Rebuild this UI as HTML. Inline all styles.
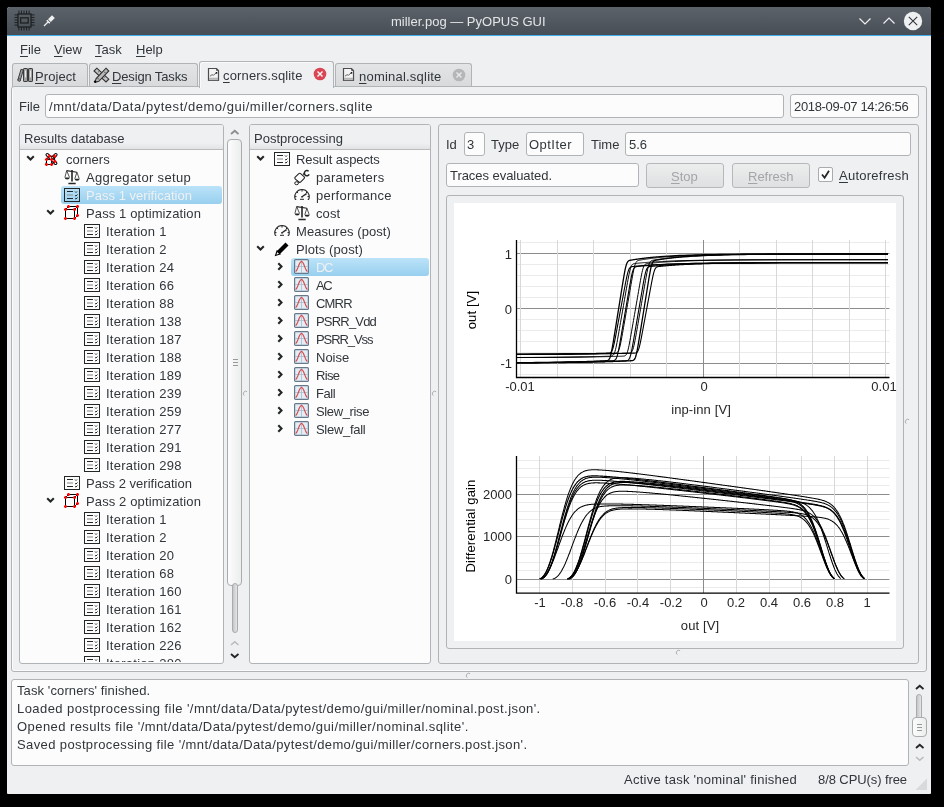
<!DOCTYPE html>
<html><head><meta charset="utf-8"><style>
html,body{margin:0;padding:0;}
body{width:944px;height:807px;background:#000;position:relative;overflow:hidden;font-family:"Liberation Sans", sans-serif;}
.t{position:absolute;white-space:pre;font-family:"Liberation Sans", sans-serif;will-change:transform;}
u{text-decoration:underline;text-underline-offset:2px;}
</style></head><body>
<div style="position:absolute;left:7px;top:7px;width:924px;height:787px;box-sizing:border-box;background:#eff0f1;border-radius:3px 3px 1px 1px;"></div>
<div style="position:absolute;left:7px;top:7px;width:924px;height:28px;box-sizing:border-box;background:linear-gradient(#5b626a,#474e55);border-radius:3px 3px 0 0;"></div>
<div style="position:absolute;left:7px;top:35px;width:924px;height:1px;box-sizing:border-box;background:#3daee9;"></div>
<div class="t" style="left:391.4px;top:14.99px;font-size:13px;line-height:13px;color:#e3e5e7;">miller.pog — PyOPUS GUI</div>
<div class="t" style="left:20px;top:42.99px;font-size:13px;line-height:13px;color:#31363b;"><u>F</u>ile</div>
<div class="t" style="left:54px;top:42.99px;font-size:13px;line-height:13px;color:#31363b;"><u>V</u>iew</div>
<div class="t" style="left:95px;top:42.99px;font-size:13px;line-height:13px;color:#31363b;"><u>T</u>ask</div>
<div class="t" style="left:136px;top:42.99px;font-size:13px;line-height:13px;color:#31363b;"><u>H</u>elp</div>
<div style="position:absolute;left:12px;top:63px;width:76px;height:24px;box-sizing:border-box;background:linear-gradient(#e3e5e7,#d7d9db);border:1px solid #b1b4b7;border-bottom:none;border-radius:3px 3px 0 0;"></div>
<div style="position:absolute;left:89px;top:63px;width:109px;height:24px;box-sizing:border-box;background:linear-gradient(#e3e5e7,#d7d9db);border:1px solid #b1b4b7;border-bottom:none;border-radius:3px 3px 0 0;"></div>
<div style="position:absolute;left:335px;top:63px;width:137px;height:24px;box-sizing:border-box;background:linear-gradient(#e3e5e7,#d7d9db);border:1px solid #b1b4b7;border-bottom:none;border-radius:3px 3px 0 0;"></div>
<div style="position:absolute;left:11px;top:86px;width:916px;height:586px;box-sizing:border-box;background:#eff0f1;border:1px solid #b1b4b7;border-radius:3px;box-shadow:inset 1px -1px 0 #fbfbfb;"></div>
<div style="position:absolute;left:199px;top:61px;width:135px;height:27px;box-sizing:border-box;background:#eff0f1;border:1px solid #b1b4b7;border-bottom:none;border-radius:3px 3px 0 0;box-shadow:inset 1px 1px 0 #fafafa;"></div>
<div class="t" style="left:35.2px;top:69.99px;font-size:13px;line-height:13px;color:#31363b;letter-spacing:0.077px;"><u>P</u>roject</div>
<div class="t" style="left:112.2px;top:69.99px;font-size:13px;line-height:13px;color:#31363b;letter-spacing:-0.139px;"><u>D</u>esign Tasks</div>
<div class="t" style="left:223.2px;top:68.99px;font-size:13px;line-height:13px;color:#31363b;letter-spacing:0.157px;"><u>c</u>orners.sqlite</div>
<div class="t" style="left:358.5px;top:69.99px;font-size:13px;line-height:13px;color:#31363b;letter-spacing:0.216px;"><u>n</u>ominal.sqlite</div>
<div class="t" style="left:19px;top:99.99px;font-size:13px;line-height:13px;color:#31363b;">File</div>
<div style="position:absolute;left:45px;top:94px;width:739px;height:24px;box-sizing:border-box;background:#fcfcfc;border:1px solid #b1b4b7;border-radius:3px;"></div>
<div class="t" style="left:49px;top:99.99px;font-size:13px;line-height:13px;color:#31363b;letter-spacing:0.534px;">/mnt/data/Data/pytest/demo/gui/miller/corners.sqlite</div>
<div style="position:absolute;left:790px;top:94px;width:129px;height:24px;box-sizing:border-box;background:#fcfcfc;border:1px solid #b1b4b7;border-radius:3px;"></div>
<div class="t" style="left:794.3px;top:99.99px;font-size:13px;line-height:13px;color:#31363b;letter-spacing:-0.332px;">2018-09-07 14:26:56</div>
<div style="position:absolute;left:19px;top:124px;width:205px;height:540px;box-sizing:border-box;background:#fcfcfc;border:1px solid #b1b4b7;border-radius:3px;"></div>
<div style="position:absolute;left:20px;top:125px;width:203px;height:25px;box-sizing:border-box;background:linear-gradient(#eff0f1,#eff0f1 75%,#e1e3e5);border-bottom:1px solid #b9bbbd;border-radius:2px 2px 0 0;"></div>
<div class="t" style="left:23.8px;top:132.29px;font-size:13px;line-height:13px;color:#31363b;">Results database</div>
<div style="position:absolute;left:249px;top:124px;width:182px;height:540px;box-sizing:border-box;background:#fcfcfc;border:1px solid #b1b4b7;border-radius:3px;"></div>
<div style="position:absolute;left:250px;top:125px;width:180px;height:25px;box-sizing:border-box;background:linear-gradient(#eff0f1,#eff0f1 75%,#e1e3e5);border-bottom:1px solid #b9bbbd;border-radius:2px 2px 0 0;"></div>
<div class="t" style="left:253.8px;top:132.29px;font-size:13px;line-height:13px;color:#31363b;">Postprocessing</div>
<div style="position:absolute;left:438px;top:124px;width:481px;height:540px;box-sizing:border-box;background:#eff0f1;border:1px solid #b1b4b7;border-radius:3px;"></div>
<div style="position:absolute;left:21px;top:150px;width:202px;height:512px;overflow:hidden">
<svg style="position:absolute;left:4.5px;top:4.800000000000011px" width="9" height="6" viewBox="0 0 9 6"><path d="M1.2 1.3l3.3 3.2L7.8 1.3" fill="none" stroke="#232627" stroke-width="2.1"/></svg>
<svg style="position:absolute;left:21px;top:0px" width="17" height="17" viewBox="0 0 17 17"><path d="M5.3 4.8L13.6 13.2M13.8 4.8L5.3 13.2" stroke="#000" stroke-width="3.6" stroke-linecap="round"/><path d="M5.3 4.8L13.6 13.2M13.8 4.8L5.3 13.2" stroke="#fff" stroke-width="1.6" stroke-linecap="round"/><path d="M4.5 9.4h5.1v5.1h-5.1z" fill="#fff" stroke="#000" stroke-width="1"/><path d="M4.5 9.4L7.4 6.2H12.6V11.4L9.6 14.5M9.6 9.4L12.6 6.2" fill="none" stroke="#000" stroke-width="1"/><path d="M2.9 9.4h3.2M4.5 7.800000000000001v3.2" stroke="#ff0000" stroke-width="1.5"/><path d="M8.0 9.4h3.2M9.6 7.800000000000001v3.2" stroke="#ff0000" stroke-width="1.5"/><path d="M2.9 14.5h3.2M4.5 12.9v3.2" stroke="#ff0000" stroke-width="1.5"/><path d="M8.0 14.5h3.2M9.6 12.9v3.2" stroke="#ff0000" stroke-width="1.5"/><path d="M5.800000000000001 6.2h3.2M7.4 4.6v3.2" stroke="#ff0000" stroke-width="1.5"/><path d="M11.0 6.2h3.2M12.6 4.6v3.2" stroke="#ff0000" stroke-width="1.5"/><path d="M11.1 11.4h3.2M12.7 9.8v3.2" stroke="#ff0000" stroke-width="1.5"/></svg>
<div class="t" style="left:45px;top:2.99px;font-size:13px;line-height:13px;color:#31363b;letter-spacing:0.065px;">corners</div>
<svg style="position:absolute;left:43px;top:19px" width="17" height="16" viewBox="0 0 17 16"><path d="M8 1v11.5M4.4 14.5h7.3" stroke="#232627" stroke-width="1.6" fill="none"/><path d="M2.7 1.6L12.9 3.2" stroke="#232627" stroke-width="1.1" fill="none"/><path d="M2.7 1.6L0.9 8.4M2.7 1.6L5.5 8.4M12.9 3.2L10.8 9.7M12.9 3.2L15.2 9.7" stroke="#232627" stroke-width="0.8" fill="none"/><path d="M0.7 8.4a2.4 2 0 0 0 5 0zM10.6 9.7a2.4 2 0 0 0 5 0z" fill="#232627"/></svg>
<div class="t" style="left:65px;top:20.99px;font-size:13px;line-height:13px;color:#31363b;letter-spacing:0.329px;">Aggregator setup</div>
<div style="position:absolute;left:40px;top:36px;width:161px;height:18px;box-sizing:border-box;background:linear-gradient(#bbe3f9,#98cfee);border-radius:3px;"></div>
<svg style="position:absolute;left:43px;top:38px" width="16" height="14" viewBox="0 0 16 14"><rect x="0.5" y="0.5" width="15" height="13" fill="none" stroke="#232627"/><path d="M3 3.5h6M3 10.5h6" stroke="#232627" stroke-width="1"/><path d="M3 7h6" stroke="#999" stroke-width="1.2"/><path d="M11 3.5l1 1 1-1M11 7.5l1 .5 1.5-1.5M11 10.5l1 .5 1.5-1.5" stroke="#232627" stroke-width="1" fill="none"/></svg>
<div class="t" style="left:65px;top:38.99px;font-size:13px;line-height:13px;color:#eff0f1;letter-spacing:0.027px;">Pass 1 verification</div>
<svg style="position:absolute;left:24.5px;top:58.80000000000001px" width="9" height="6" viewBox="0 0 9 6"><path d="M1.2 1.3l3.3 3.2L7.8 1.3" fill="none" stroke="#232627" stroke-width="2.1"/></svg>
<svg style="position:absolute;left:43px;top:55px" width="15" height="15" viewBox="0 0 15 15"><path d="M1.5 4.5h9v9h-9zM1.5 4.5l3-3h9v9l-3 3M10.5 4.5l3-3" fill="none" stroke="#000" stroke-width="1"/><path d="M0.0 4.5h3M1.5 3.0v3" stroke="#ff0000" stroke-width="1.6"/><path d="M9.0 4.5h3M10.5 3.0v3" stroke="#ff0000" stroke-width="1.6"/><path d="M0.0 13.5h3M1.5 12.0v3" stroke="#ff0000" stroke-width="1.6"/><path d="M9.0 13.5h3M10.5 12.0v3" stroke="#ff0000" stroke-width="1.6"/><path d="M3.0 1.5h3M4.5 0.0v3" stroke="#ff0000" stroke-width="1.6"/><path d="M12.0 1.5h3M13.5 0.0v3" stroke="#ff0000" stroke-width="1.6"/><path d="M12.0 10.5h3M13.5 9.0v3" stroke="#ff0000" stroke-width="1.6"/></svg>
<div class="t" style="left:65px;top:56.99px;font-size:13px;line-height:13px;color:#31363b;letter-spacing:0.120px;">Pass 1 optimization</div>
<svg style="position:absolute;left:63px;top:74px" width="16" height="14" viewBox="0 0 16 14"><rect x="0.5" y="0.5" width="15" height="13" fill="none" stroke="#232627"/><path d="M3 3.5h6M3 10.5h6" stroke="#232627" stroke-width="1"/><path d="M3 7h6" stroke="#999" stroke-width="1.2"/><path d="M11 3.5l1 1 1-1M11 7.5l1 .5 1.5-1.5M11 10.5l1 .5 1.5-1.5" stroke="#232627" stroke-width="1" fill="none"/></svg>
<div class="t" style="left:85px;top:74.99px;font-size:13px;line-height:13px;color:#31363b;letter-spacing:0.262px;">Iteration 1</div>
<svg style="position:absolute;left:63px;top:92px" width="16" height="14" viewBox="0 0 16 14"><rect x="0.5" y="0.5" width="15" height="13" fill="none" stroke="#232627"/><path d="M3 3.5h6M3 10.5h6" stroke="#232627" stroke-width="1"/><path d="M3 7h6" stroke="#999" stroke-width="1.2"/><path d="M11 3.5l1 1 1-1M11 7.5l1 .5 1.5-1.5M11 10.5l1 .5 1.5-1.5" stroke="#232627" stroke-width="1" fill="none"/></svg>
<div class="t" style="left:85px;top:92.99px;font-size:13px;line-height:13px;color:#31363b;letter-spacing:0.262px;">Iteration 2</div>
<svg style="position:absolute;left:63px;top:110px" width="16" height="14" viewBox="0 0 16 14"><rect x="0.5" y="0.5" width="15" height="13" fill="none" stroke="#232627"/><path d="M3 3.5h6M3 10.5h6" stroke="#232627" stroke-width="1"/><path d="M3 7h6" stroke="#999" stroke-width="1.2"/><path d="M11 3.5l1 1 1-1M11 7.5l1 .5 1.5-1.5M11 10.5l1 .5 1.5-1.5" stroke="#232627" stroke-width="1" fill="none"/></svg>
<div class="t" style="left:85px;top:110.99px;font-size:13px;line-height:13px;color:#31363b;letter-spacing:0.263px;">Iteration 24</div>
<svg style="position:absolute;left:63px;top:128px" width="16" height="14" viewBox="0 0 16 14"><rect x="0.5" y="0.5" width="15" height="13" fill="none" stroke="#232627"/><path d="M3 3.5h6M3 10.5h6" stroke="#232627" stroke-width="1"/><path d="M3 7h6" stroke="#999" stroke-width="1.2"/><path d="M11 3.5l1 1 1-1M11 7.5l1 .5 1.5-1.5M11 10.5l1 .5 1.5-1.5" stroke="#232627" stroke-width="1" fill="none"/></svg>
<div class="t" style="left:85px;top:128.99px;font-size:13px;line-height:13px;color:#31363b;letter-spacing:0.263px;">Iteration 66</div>
<svg style="position:absolute;left:63px;top:146px" width="16" height="14" viewBox="0 0 16 14"><rect x="0.5" y="0.5" width="15" height="13" fill="none" stroke="#232627"/><path d="M3 3.5h6M3 10.5h6" stroke="#232627" stroke-width="1"/><path d="M3 7h6" stroke="#999" stroke-width="1.2"/><path d="M11 3.5l1 1 1-1M11 7.5l1 .5 1.5-1.5M11 10.5l1 .5 1.5-1.5" stroke="#232627" stroke-width="1" fill="none"/></svg>
<div class="t" style="left:85px;top:146.99px;font-size:13px;line-height:13px;color:#31363b;letter-spacing:0.263px;">Iteration 88</div>
<svg style="position:absolute;left:63px;top:164px" width="16" height="14" viewBox="0 0 16 14"><rect x="0.5" y="0.5" width="15" height="13" fill="none" stroke="#232627"/><path d="M3 3.5h6M3 10.5h6" stroke="#232627" stroke-width="1"/><path d="M3 7h6" stroke="#999" stroke-width="1.2"/><path d="M11 3.5l1 1 1-1M11 7.5l1 .5 1.5-1.5M11 10.5l1 .5 1.5-1.5" stroke="#232627" stroke-width="1" fill="none"/></svg>
<div class="t" style="left:85px;top:164.99px;font-size:13px;line-height:13px;color:#31363b;letter-spacing:0.263px;">Iteration 138</div>
<svg style="position:absolute;left:63px;top:182px" width="16" height="14" viewBox="0 0 16 14"><rect x="0.5" y="0.5" width="15" height="13" fill="none" stroke="#232627"/><path d="M3 3.5h6M3 10.5h6" stroke="#232627" stroke-width="1"/><path d="M3 7h6" stroke="#999" stroke-width="1.2"/><path d="M11 3.5l1 1 1-1M11 7.5l1 .5 1.5-1.5M11 10.5l1 .5 1.5-1.5" stroke="#232627" stroke-width="1" fill="none"/></svg>
<div class="t" style="left:85px;top:182.99px;font-size:13px;line-height:13px;color:#31363b;letter-spacing:0.263px;">Iteration 187</div>
<svg style="position:absolute;left:63px;top:200px" width="16" height="14" viewBox="0 0 16 14"><rect x="0.5" y="0.5" width="15" height="13" fill="none" stroke="#232627"/><path d="M3 3.5h6M3 10.5h6" stroke="#232627" stroke-width="1"/><path d="M3 7h6" stroke="#999" stroke-width="1.2"/><path d="M11 3.5l1 1 1-1M11 7.5l1 .5 1.5-1.5M11 10.5l1 .5 1.5-1.5" stroke="#232627" stroke-width="1" fill="none"/></svg>
<div class="t" style="left:85px;top:200.99px;font-size:13px;line-height:13px;color:#31363b;letter-spacing:0.263px;">Iteration 188</div>
<svg style="position:absolute;left:63px;top:218px" width="16" height="14" viewBox="0 0 16 14"><rect x="0.5" y="0.5" width="15" height="13" fill="none" stroke="#232627"/><path d="M3 3.5h6M3 10.5h6" stroke="#232627" stroke-width="1"/><path d="M3 7h6" stroke="#999" stroke-width="1.2"/><path d="M11 3.5l1 1 1-1M11 7.5l1 .5 1.5-1.5M11 10.5l1 .5 1.5-1.5" stroke="#232627" stroke-width="1" fill="none"/></svg>
<div class="t" style="left:85px;top:218.99px;font-size:13px;line-height:13px;color:#31363b;letter-spacing:0.263px;">Iteration 189</div>
<svg style="position:absolute;left:63px;top:236px" width="16" height="14" viewBox="0 0 16 14"><rect x="0.5" y="0.5" width="15" height="13" fill="none" stroke="#232627"/><path d="M3 3.5h6M3 10.5h6" stroke="#232627" stroke-width="1"/><path d="M3 7h6" stroke="#999" stroke-width="1.2"/><path d="M11 3.5l1 1 1-1M11 7.5l1 .5 1.5-1.5M11 10.5l1 .5 1.5-1.5" stroke="#232627" stroke-width="1" fill="none"/></svg>
<div class="t" style="left:85px;top:236.99px;font-size:13px;line-height:13px;color:#31363b;letter-spacing:0.263px;">Iteration 239</div>
<svg style="position:absolute;left:63px;top:254px" width="16" height="14" viewBox="0 0 16 14"><rect x="0.5" y="0.5" width="15" height="13" fill="none" stroke="#232627"/><path d="M3 3.5h6M3 10.5h6" stroke="#232627" stroke-width="1"/><path d="M3 7h6" stroke="#999" stroke-width="1.2"/><path d="M11 3.5l1 1 1-1M11 7.5l1 .5 1.5-1.5M11 10.5l1 .5 1.5-1.5" stroke="#232627" stroke-width="1" fill="none"/></svg>
<div class="t" style="left:85px;top:254.99px;font-size:13px;line-height:13px;color:#31363b;letter-spacing:0.263px;">Iteration 259</div>
<svg style="position:absolute;left:63px;top:272px" width="16" height="14" viewBox="0 0 16 14"><rect x="0.5" y="0.5" width="15" height="13" fill="none" stroke="#232627"/><path d="M3 3.5h6M3 10.5h6" stroke="#232627" stroke-width="1"/><path d="M3 7h6" stroke="#999" stroke-width="1.2"/><path d="M11 3.5l1 1 1-1M11 7.5l1 .5 1.5-1.5M11 10.5l1 .5 1.5-1.5" stroke="#232627" stroke-width="1" fill="none"/></svg>
<div class="t" style="left:85px;top:272.99px;font-size:13px;line-height:13px;color:#31363b;letter-spacing:0.263px;">Iteration 277</div>
<svg style="position:absolute;left:63px;top:290px" width="16" height="14" viewBox="0 0 16 14"><rect x="0.5" y="0.5" width="15" height="13" fill="none" stroke="#232627"/><path d="M3 3.5h6M3 10.5h6" stroke="#232627" stroke-width="1"/><path d="M3 7h6" stroke="#999" stroke-width="1.2"/><path d="M11 3.5l1 1 1-1M11 7.5l1 .5 1.5-1.5M11 10.5l1 .5 1.5-1.5" stroke="#232627" stroke-width="1" fill="none"/></svg>
<div class="t" style="left:85px;top:290.99px;font-size:13px;line-height:13px;color:#31363b;letter-spacing:0.263px;">Iteration 291</div>
<svg style="position:absolute;left:63px;top:308px" width="16" height="14" viewBox="0 0 16 14"><rect x="0.5" y="0.5" width="15" height="13" fill="none" stroke="#232627"/><path d="M3 3.5h6M3 10.5h6" stroke="#232627" stroke-width="1"/><path d="M3 7h6" stroke="#999" stroke-width="1.2"/><path d="M11 3.5l1 1 1-1M11 7.5l1 .5 1.5-1.5M11 10.5l1 .5 1.5-1.5" stroke="#232627" stroke-width="1" fill="none"/></svg>
<div class="t" style="left:85px;top:308.99px;font-size:13px;line-height:13px;color:#31363b;letter-spacing:0.263px;">Iteration 298</div>
<svg style="position:absolute;left:43px;top:326px" width="16" height="14" viewBox="0 0 16 14"><rect x="0.5" y="0.5" width="15" height="13" fill="none" stroke="#232627"/><path d="M3 3.5h6M3 10.5h6" stroke="#232627" stroke-width="1"/><path d="M3 7h6" stroke="#999" stroke-width="1.2"/><path d="M11 3.5l1 1 1-1M11 7.5l1 .5 1.5-1.5M11 10.5l1 .5 1.5-1.5" stroke="#232627" stroke-width="1" fill="none"/></svg>
<div class="t" style="left:65px;top:326.99px;font-size:13px;line-height:13px;color:#31363b;letter-spacing:0.027px;">Pass 2 verification</div>
<svg style="position:absolute;left:24.5px;top:346.8px" width="9" height="6" viewBox="0 0 9 6"><path d="M1.2 1.3l3.3 3.2L7.8 1.3" fill="none" stroke="#232627" stroke-width="2.1"/></svg>
<svg style="position:absolute;left:43px;top:343px" width="15" height="15" viewBox="0 0 15 15"><path d="M1.5 4.5h9v9h-9zM1.5 4.5l3-3h9v9l-3 3M10.5 4.5l3-3" fill="none" stroke="#000" stroke-width="1"/><path d="M0.0 4.5h3M1.5 3.0v3" stroke="#ff0000" stroke-width="1.6"/><path d="M9.0 4.5h3M10.5 3.0v3" stroke="#ff0000" stroke-width="1.6"/><path d="M0.0 13.5h3M1.5 12.0v3" stroke="#ff0000" stroke-width="1.6"/><path d="M9.0 13.5h3M10.5 12.0v3" stroke="#ff0000" stroke-width="1.6"/><path d="M3.0 1.5h3M4.5 0.0v3" stroke="#ff0000" stroke-width="1.6"/><path d="M12.0 1.5h3M13.5 0.0v3" stroke="#ff0000" stroke-width="1.6"/><path d="M12.0 10.5h3M13.5 9.0v3" stroke="#ff0000" stroke-width="1.6"/></svg>
<div class="t" style="left:65px;top:344.99px;font-size:13px;line-height:13px;color:#31363b;letter-spacing:0.120px;">Pass 2 optimization</div>
<svg style="position:absolute;left:63px;top:362px" width="16" height="14" viewBox="0 0 16 14"><rect x="0.5" y="0.5" width="15" height="13" fill="none" stroke="#232627"/><path d="M3 3.5h6M3 10.5h6" stroke="#232627" stroke-width="1"/><path d="M3 7h6" stroke="#999" stroke-width="1.2"/><path d="M11 3.5l1 1 1-1M11 7.5l1 .5 1.5-1.5M11 10.5l1 .5 1.5-1.5" stroke="#232627" stroke-width="1" fill="none"/></svg>
<div class="t" style="left:85px;top:362.99px;font-size:13px;line-height:13px;color:#31363b;letter-spacing:0.262px;">Iteration 1</div>
<svg style="position:absolute;left:63px;top:380px" width="16" height="14" viewBox="0 0 16 14"><rect x="0.5" y="0.5" width="15" height="13" fill="none" stroke="#232627"/><path d="M3 3.5h6M3 10.5h6" stroke="#232627" stroke-width="1"/><path d="M3 7h6" stroke="#999" stroke-width="1.2"/><path d="M11 3.5l1 1 1-1M11 7.5l1 .5 1.5-1.5M11 10.5l1 .5 1.5-1.5" stroke="#232627" stroke-width="1" fill="none"/></svg>
<div class="t" style="left:85px;top:380.99px;font-size:13px;line-height:13px;color:#31363b;letter-spacing:0.262px;">Iteration 2</div>
<svg style="position:absolute;left:63px;top:398px" width="16" height="14" viewBox="0 0 16 14"><rect x="0.5" y="0.5" width="15" height="13" fill="none" stroke="#232627"/><path d="M3 3.5h6M3 10.5h6" stroke="#232627" stroke-width="1"/><path d="M3 7h6" stroke="#999" stroke-width="1.2"/><path d="M11 3.5l1 1 1-1M11 7.5l1 .5 1.5-1.5M11 10.5l1 .5 1.5-1.5" stroke="#232627" stroke-width="1" fill="none"/></svg>
<div class="t" style="left:85px;top:398.99px;font-size:13px;line-height:13px;color:#31363b;letter-spacing:0.263px;">Iteration 20</div>
<svg style="position:absolute;left:63px;top:416px" width="16" height="14" viewBox="0 0 16 14"><rect x="0.5" y="0.5" width="15" height="13" fill="none" stroke="#232627"/><path d="M3 3.5h6M3 10.5h6" stroke="#232627" stroke-width="1"/><path d="M3 7h6" stroke="#999" stroke-width="1.2"/><path d="M11 3.5l1 1 1-1M11 7.5l1 .5 1.5-1.5M11 10.5l1 .5 1.5-1.5" stroke="#232627" stroke-width="1" fill="none"/></svg>
<div class="t" style="left:85px;top:416.99px;font-size:13px;line-height:13px;color:#31363b;letter-spacing:0.263px;">Iteration 68</div>
<svg style="position:absolute;left:63px;top:434px" width="16" height="14" viewBox="0 0 16 14"><rect x="0.5" y="0.5" width="15" height="13" fill="none" stroke="#232627"/><path d="M3 3.5h6M3 10.5h6" stroke="#232627" stroke-width="1"/><path d="M3 7h6" stroke="#999" stroke-width="1.2"/><path d="M11 3.5l1 1 1-1M11 7.5l1 .5 1.5-1.5M11 10.5l1 .5 1.5-1.5" stroke="#232627" stroke-width="1" fill="none"/></svg>
<div class="t" style="left:85px;top:434.99px;font-size:13px;line-height:13px;color:#31363b;letter-spacing:0.263px;">Iteration 160</div>
<svg style="position:absolute;left:63px;top:452px" width="16" height="14" viewBox="0 0 16 14"><rect x="0.5" y="0.5" width="15" height="13" fill="none" stroke="#232627"/><path d="M3 3.5h6M3 10.5h6" stroke="#232627" stroke-width="1"/><path d="M3 7h6" stroke="#999" stroke-width="1.2"/><path d="M11 3.5l1 1 1-1M11 7.5l1 .5 1.5-1.5M11 10.5l1 .5 1.5-1.5" stroke="#232627" stroke-width="1" fill="none"/></svg>
<div class="t" style="left:85px;top:452.99px;font-size:13px;line-height:13px;color:#31363b;letter-spacing:0.263px;">Iteration 161</div>
<svg style="position:absolute;left:63px;top:470px" width="16" height="14" viewBox="0 0 16 14"><rect x="0.5" y="0.5" width="15" height="13" fill="none" stroke="#232627"/><path d="M3 3.5h6M3 10.5h6" stroke="#232627" stroke-width="1"/><path d="M3 7h6" stroke="#999" stroke-width="1.2"/><path d="M11 3.5l1 1 1-1M11 7.5l1 .5 1.5-1.5M11 10.5l1 .5 1.5-1.5" stroke="#232627" stroke-width="1" fill="none"/></svg>
<div class="t" style="left:85px;top:470.99px;font-size:13px;line-height:13px;color:#31363b;letter-spacing:0.263px;">Iteration 162</div>
<svg style="position:absolute;left:63px;top:488px" width="16" height="14" viewBox="0 0 16 14"><rect x="0.5" y="0.5" width="15" height="13" fill="none" stroke="#232627"/><path d="M3 3.5h6M3 10.5h6" stroke="#232627" stroke-width="1"/><path d="M3 7h6" stroke="#999" stroke-width="1.2"/><path d="M11 3.5l1 1 1-1M11 7.5l1 .5 1.5-1.5M11 10.5l1 .5 1.5-1.5" stroke="#232627" stroke-width="1" fill="none"/></svg>
<div class="t" style="left:85px;top:488.99px;font-size:13px;line-height:13px;color:#31363b;letter-spacing:0.263px;">Iteration 226</div>
<svg style="position:absolute;left:63px;top:506px" width="16" height="14" viewBox="0 0 16 14"><rect x="0.5" y="0.5" width="15" height="13" fill="none" stroke="#232627"/><path d="M3 3.5h6M3 10.5h6" stroke="#232627" stroke-width="1"/><path d="M3 7h6" stroke="#999" stroke-width="1.2"/><path d="M11 3.5l1 1 1-1M11 7.5l1 .5 1.5-1.5M11 10.5l1 .5 1.5-1.5" stroke="#232627" stroke-width="1" fill="none"/></svg>
<div class="t" style="left:85px;top:506.99px;font-size:13px;line-height:13px;color:#31363b;letter-spacing:0.263px;">Iteration 280</div>
</div>
<div style="position:absolute;left:250px;top:150px;width:180px;height:512px;overflow:hidden">
<svg style="position:absolute;left:5.5px;top:4.800000000000011px" width="9" height="6" viewBox="0 0 9 6"><path d="M1.2 1.3l3.3 3.2L7.8 1.3" fill="none" stroke="#232627" stroke-width="2.1"/></svg>
<svg style="position:absolute;left:24px;top:2px" width="16" height="14" viewBox="0 0 16 14"><rect x="0.5" y="0.5" width="15" height="13" fill="none" stroke="#232627"/><path d="M3 3.5h6M3 10.5h6" stroke="#232627" stroke-width="1"/><path d="M3 7h6" stroke="#999" stroke-width="1.2"/><path d="M11 3.5l1 1 1-1M11 7.5l1 .5 1.5-1.5M11 10.5l1 .5 1.5-1.5" stroke="#232627" stroke-width="1" fill="none"/></svg>
<div class="t" style="left:46.30000000000001px;top:2.99px;font-size:13px;line-height:13px;color:#31363b;letter-spacing:-0.111px;">Result aspects</div>
<svg style="position:absolute;left:44px;top:19px" width="17" height="17" viewBox="0 0 17 17"><path d="M14.6 2.2A2.6 2.6 0 1 0 15.2 5.4" fill="none" stroke="#232627" stroke-width="1.5"/><path d="M1.2 8.2L4.6 4.8Q5.6 3.8 6.6 4.6L10 7.6Q11 8.6 10 9.6L6.8 12.8Q5.8 13.8 4.8 13L1.4 10.2Q0.4 9.2 1.2 8.2z" fill="none" stroke="#232627" stroke-width="1.1"/><path d="M9 5.5L11 3.8" stroke="#232627" stroke-width="1.1"/><ellipse cx="2.6" cy="14.2" rx="1.9" ry="1.5" fill="none" stroke="#232627" stroke-width="1"/></svg>
<div class="t" style="left:66.30000000000001px;top:20.99px;font-size:13px;line-height:13px;color:#31363b;letter-spacing:0.265px;">parameters</div>
<svg style="position:absolute;left:43.5px;top:38.5px" width="17" height="13" viewBox="0 0 17 13"><path d="M1.3 10.4A7.2 7.2 0 1 1 14.7 10.4" fill="none" stroke="#232627" stroke-width="1.1"/><path d="M8 1v1.6M3 3l1.1 1.1M13 3l-1.1 1.1M0.9 7.6h1.6M15.1 7.6h-1.6" stroke="#232627" stroke-width="1"/><path d="M8 7.8L12.6 4.6" stroke="#232627" stroke-width="1.3"/><circle cx="8" cy="7.8" r="0.9" fill="#232627"/><path d="M6 10.3h4M1 10.4h1.3M13.7 10.4h1.3" stroke="#232627" stroke-width="1"/></svg>
<div class="t" style="left:66.30000000000001px;top:38.99px;font-size:13px;line-height:13px;color:#31363b;letter-spacing:0.256px;">performance</div>
<svg style="position:absolute;left:44px;top:55px" width="17" height="16" viewBox="0 0 17 16"><path d="M8 1v11.5M4.4 14.5h7.3" stroke="#232627" stroke-width="1.6" fill="none"/><path d="M2.7 1.6L12.9 3.2" stroke="#232627" stroke-width="1.1" fill="none"/><path d="M2.7 1.6L0.9 8.4M2.7 1.6L5.5 8.4M12.9 3.2L10.8 9.7M12.9 3.2L15.2 9.7" stroke="#232627" stroke-width="0.8" fill="none"/><path d="M0.7 8.4a2.4 2 0 0 0 5 0zM10.6 9.7a2.4 2 0 0 0 5 0z" fill="#232627"/></svg>
<div class="t" style="left:66.30000000000001px;top:56.99px;font-size:13px;line-height:13px;color:#31363b;letter-spacing:0.114px;">cost</div>
<svg style="position:absolute;left:23.5px;top:74.5px" width="17" height="13" viewBox="0 0 17 13"><path d="M1.3 10.4A7.2 7.2 0 1 1 14.7 10.4" fill="none" stroke="#232627" stroke-width="1.1"/><path d="M8 1v1.6M3 3l1.1 1.1M13 3l-1.1 1.1M0.9 7.6h1.6M15.1 7.6h-1.6" stroke="#232627" stroke-width="1"/><path d="M8 7.8L12.6 4.6" stroke="#232627" stroke-width="1.3"/><circle cx="8" cy="7.8" r="0.9" fill="#232627"/><path d="M6 10.3h4M1 10.4h1.3M13.7 10.4h1.3" stroke="#232627" stroke-width="1"/></svg>
<div class="t" style="left:46.30000000000001px;top:74.99px;font-size:13px;line-height:13px;color:#31363b;letter-spacing:0.065px;">Measures (post)</div>
<svg style="position:absolute;left:5.5px;top:94.80000000000001px" width="9" height="6" viewBox="0 0 9 6"><path d="M1.2 1.3l3.3 3.2L7.8 1.3" fill="none" stroke="#232627" stroke-width="2.1"/></svg>
<svg style="position:absolute;left:24px;top:91px" width="16" height="16" viewBox="0 0 16 16"><path d="M11.5 1.5l3 3-8.5 8.5-3-3z" fill="#000"/><path d="M3 10l3 3-4.5 1.5z" fill="none" stroke="#000" stroke-width="1.1"/></svg>
<div class="t" style="left:46.30000000000001px;top:92.99px;font-size:13px;line-height:13px;color:#31363b;letter-spacing:0.096px;">Plots (post)</div>
<div style="position:absolute;left:41px;top:108px;width:138px;height:18px;box-sizing:border-box;background:linear-gradient(#bbe3f9,#98cfee);border-radius:3px;"></div>
<svg style="position:absolute;left:26.80000000000001px;top:112px" width="6" height="9" viewBox="0 0 6 9"><path d="M1.3 1.2l3.2 3.3L1.3 7.8" fill="none" stroke="#232627" stroke-width="2.1"/></svg>
<svg style="position:absolute;left:44px;top:109px" width="15" height="15" viewBox="0 0 15 15"><rect x="0.6" y="0.6" width="13.8" height="13.8" rx="1" fill="#e3edf5" stroke="#667a8c" stroke-width="1.2"/><path d="M7.5 1v13M1 7.5h13" stroke="#a9bccb" stroke-width="0.8"/><path d="M1.6 12.6C4 11.2 5 2.6 7.5 2.4C10 2.6 11 11.2 13.4 12.6" fill="none" stroke="#d64a4c" stroke-width="1.1"/></svg>
<div class="t" style="left:66.30000000000001px;top:110.99px;font-size:13px;line-height:13px;color:#eff0f1;letter-spacing:-1.387px;">DC</div>
<svg style="position:absolute;left:26.80000000000001px;top:130px" width="6" height="9" viewBox="0 0 6 9"><path d="M1.3 1.2l3.2 3.3L1.3 7.8" fill="none" stroke="#232627" stroke-width="2.1"/></svg>
<svg style="position:absolute;left:44px;top:127px" width="15" height="15" viewBox="0 0 15 15"><rect x="0.6" y="0.6" width="13.8" height="13.8" rx="1" fill="#e3edf5" stroke="#667a8c" stroke-width="1.2"/><path d="M7.5 1v13M1 7.5h13" stroke="#a9bccb" stroke-width="0.8"/><path d="M1.6 12.6C4 11.2 5 2.6 7.5 2.4C10 2.6 11 11.2 13.4 12.6" fill="none" stroke="#d64a4c" stroke-width="1.1"/></svg>
<div class="t" style="left:66.30000000000001px;top:128.99px;font-size:13px;line-height:13px;color:#31363b;letter-spacing:-1.329px;">AC</div>
<svg style="position:absolute;left:26.80000000000001px;top:148px" width="6" height="9" viewBox="0 0 6 9"><path d="M1.3 1.2l3.2 3.3L1.3 7.8" fill="none" stroke="#232627" stroke-width="2.1"/></svg>
<svg style="position:absolute;left:44px;top:145px" width="15" height="15" viewBox="0 0 15 15"><rect x="0.6" y="0.6" width="13.8" height="13.8" rx="1" fill="#e3edf5" stroke="#667a8c" stroke-width="1.2"/><path d="M7.5 1v13M1 7.5h13" stroke="#a9bccb" stroke-width="0.8"/><path d="M1.6 12.6C4 11.2 5 2.6 7.5 2.4C10 2.6 11 11.2 13.4 12.6" fill="none" stroke="#d64a4c" stroke-width="1.1"/></svg>
<div class="t" style="left:66.30000000000001px;top:146.99px;font-size:13px;line-height:13px;color:#31363b;letter-spacing:-0.823px;">CMRR</div>
<svg style="position:absolute;left:26.80000000000001px;top:166px" width="6" height="9" viewBox="0 0 6 9"><path d="M1.3 1.2l3.2 3.3L1.3 7.8" fill="none" stroke="#232627" stroke-width="2.1"/></svg>
<svg style="position:absolute;left:44px;top:163px" width="15" height="15" viewBox="0 0 15 15"><rect x="0.6" y="0.6" width="13.8" height="13.8" rx="1" fill="#e3edf5" stroke="#667a8c" stroke-width="1.2"/><path d="M7.5 1v13M1 7.5h13" stroke="#a9bccb" stroke-width="0.8"/><path d="M1.6 12.6C4 11.2 5 2.6 7.5 2.4C10 2.6 11 11.2 13.4 12.6" fill="none" stroke="#d64a4c" stroke-width="1.1"/></svg>
<div class="t" style="left:66.30000000000001px;top:164.99px;font-size:13px;line-height:13px;color:#31363b;letter-spacing:-0.809px;">PSRR_Vdd</div>
<svg style="position:absolute;left:26.80000000000001px;top:184px" width="6" height="9" viewBox="0 0 6 9"><path d="M1.3 1.2l3.2 3.3L1.3 7.8" fill="none" stroke="#232627" stroke-width="2.1"/></svg>
<svg style="position:absolute;left:44px;top:181px" width="15" height="15" viewBox="0 0 15 15"><rect x="0.6" y="0.6" width="13.8" height="13.8" rx="1" fill="#e3edf5" stroke="#667a8c" stroke-width="1.2"/><path d="M7.5 1v13M1 7.5h13" stroke="#a9bccb" stroke-width="0.8"/><path d="M1.6 12.6C4 11.2 5 2.6 7.5 2.4C10 2.6 11 11.2 13.4 12.6" fill="none" stroke="#d64a4c" stroke-width="1.1"/></svg>
<div class="t" style="left:66.30000000000001px;top:182.99px;font-size:13px;line-height:13px;color:#31363b;letter-spacing:-1.089px;">PSRR_Vss</div>
<svg style="position:absolute;left:26.80000000000001px;top:202px" width="6" height="9" viewBox="0 0 6 9"><path d="M1.3 1.2l3.2 3.3L1.3 7.8" fill="none" stroke="#232627" stroke-width="2.1"/></svg>
<svg style="position:absolute;left:44px;top:199px" width="15" height="15" viewBox="0 0 15 15"><rect x="0.6" y="0.6" width="13.8" height="13.8" rx="1" fill="#e3edf5" stroke="#667a8c" stroke-width="1.2"/><path d="M7.5 1v13M1 7.5h13" stroke="#a9bccb" stroke-width="0.8"/><path d="M1.6 12.6C4 11.2 5 2.6 7.5 2.4C10 2.6 11 11.2 13.4 12.6" fill="none" stroke="#d64a4c" stroke-width="1.1"/></svg>
<div class="t" style="left:66.30000000000001px;top:200.99px;font-size:13px;line-height:13px;color:#31363b;letter-spacing:-0.007px;">Noise</div>
<svg style="position:absolute;left:26.80000000000001px;top:220px" width="6" height="9" viewBox="0 0 6 9"><path d="M1.3 1.2l3.2 3.3L1.3 7.8" fill="none" stroke="#232627" stroke-width="2.1"/></svg>
<svg style="position:absolute;left:44px;top:217px" width="15" height="15" viewBox="0 0 15 15"><rect x="0.6" y="0.6" width="13.8" height="13.8" rx="1" fill="#e3edf5" stroke="#667a8c" stroke-width="1.2"/><path d="M7.5 1v13M1 7.5h13" stroke="#a9bccb" stroke-width="0.8"/><path d="M1.6 12.6C4 11.2 5 2.6 7.5 2.4C10 2.6 11 11.2 13.4 12.6" fill="none" stroke="#d64a4c" stroke-width="1.1"/></svg>
<div class="t" style="left:66.30000000000001px;top:218.99px;font-size:13px;line-height:13px;color:#31363b;letter-spacing:-0.676px;">Rise</div>
<svg style="position:absolute;left:26.80000000000001px;top:238px" width="6" height="9" viewBox="0 0 6 9"><path d="M1.3 1.2l3.2 3.3L1.3 7.8" fill="none" stroke="#232627" stroke-width="2.1"/></svg>
<svg style="position:absolute;left:44px;top:235px" width="15" height="15" viewBox="0 0 15 15"><rect x="0.6" y="0.6" width="13.8" height="13.8" rx="1" fill="#e3edf5" stroke="#667a8c" stroke-width="1.2"/><path d="M7.5 1v13M1 7.5h13" stroke="#a9bccb" stroke-width="0.8"/><path d="M1.6 12.6C4 11.2 5 2.6 7.5 2.4C10 2.6 11 11.2 13.4 12.6" fill="none" stroke="#d64a4c" stroke-width="1.1"/></svg>
<div class="t" style="left:66.30000000000001px;top:236.99px;font-size:13px;line-height:13px;color:#31363b;letter-spacing:-0.461px;">Fall</div>
<svg style="position:absolute;left:26.80000000000001px;top:256px" width="6" height="9" viewBox="0 0 6 9"><path d="M1.3 1.2l3.2 3.3L1.3 7.8" fill="none" stroke="#232627" stroke-width="2.1"/></svg>
<svg style="position:absolute;left:44px;top:253px" width="15" height="15" viewBox="0 0 15 15"><rect x="0.6" y="0.6" width="13.8" height="13.8" rx="1" fill="#e3edf5" stroke="#667a8c" stroke-width="1.2"/><path d="M7.5 1v13M1 7.5h13" stroke="#a9bccb" stroke-width="0.8"/><path d="M1.6 12.6C4 11.2 5 2.6 7.5 2.4C10 2.6 11 11.2 13.4 12.6" fill="none" stroke="#d64a4c" stroke-width="1.1"/></svg>
<div class="t" style="left:66.30000000000001px;top:254.99px;font-size:13px;line-height:13px;color:#31363b;letter-spacing:-0.361px;">Slew_rise</div>
<svg style="position:absolute;left:26.80000000000001px;top:274px" width="6" height="9" viewBox="0 0 6 9"><path d="M1.3 1.2l3.2 3.3L1.3 7.8" fill="none" stroke="#232627" stroke-width="2.1"/></svg>
<svg style="position:absolute;left:44px;top:271px" width="15" height="15" viewBox="0 0 15 15"><rect x="0.6" y="0.6" width="13.8" height="13.8" rx="1" fill="#e3edf5" stroke="#667a8c" stroke-width="1.2"/><path d="M7.5 1v13M1 7.5h13" stroke="#a9bccb" stroke-width="0.8"/><path d="M1.6 12.6C4 11.2 5 2.6 7.5 2.4C10 2.6 11 11.2 13.4 12.6" fill="none" stroke="#d64a4c" stroke-width="1.1"/></svg>
<div class="t" style="left:66.30000000000001px;top:272.99px;font-size:13px;line-height:13px;color:#31363b;letter-spacing:-0.302px;">Slew_fall</div>
</div>
<svg style="position:absolute;left:14px;top:10px" width="21" height="21" viewBox="0 0 21 21"><rect x="4" y="4" width="13" height="13" fill="none" stroke="#1e2124" stroke-width="1.3"/><rect x="6.6" y="7.8" width="7.6" height="5.2" fill="none" stroke="#1e2124" stroke-width="1.3"/><path d="M4.90 0.5V4M4.90 17V20.5M0.5 4.90H4M17 4.90H20.5" stroke="#1e2124" stroke-width="1"/><path d="M7.45 0.5V4M7.45 17V20.5M0.5 7.45H4M17 7.45H20.5" stroke="#1e2124" stroke-width="1"/><path d="M10.00 0.5V4M10.00 17V20.5M0.5 10.00H4M17 10.00H20.5" stroke="#1e2124" stroke-width="1"/><path d="M12.55 0.5V4M12.55 17V20.5M0.5 12.55H4M17 12.55H20.5" stroke="#1e2124" stroke-width="1"/><path d="M15.10 0.5V4M15.10 17V20.5M0.5 15.10H4M17 15.10H20.5" stroke="#1e2124" stroke-width="1"/></svg>
<svg style="position:absolute;left:43px;top:14px" width="13" height="13" viewBox="0 0 13 13"><path d="M1 12L5.5 7.5" stroke="#f0f0f0" stroke-width="1.3"/><path d="M5 5.2L7.8 8 L11.8 4 L9 1.2z" fill="#f0f0f0"/><path d="M3.8 6.2L6.8 9.2" stroke="#f0f0f0" stroke-width="1.6"/></svg>
<svg style="position:absolute;left:858px;top:17px" width="14" height="9" viewBox="0 0 14 9"><path d="M1.5 1.5L7 7L12.5 1.5" fill="none" stroke="#eff0f1" stroke-width="1.2"/></svg>
<svg style="position:absolute;left:882px;top:16px" width="14" height="9" viewBox="0 0 14 9"><path d="M1.5 7.5L7 2L12.5 7.5" fill="none" stroke="#eff0f1" stroke-width="1.2"/></svg>
<svg style="position:absolute;left:903px;top:11px" width="20" height="20" viewBox="0 0 20 20"><circle cx="10" cy="10" r="9.2" fill="#eff0f1"/><path d="M5.8 5.8L14.2 14.2M14.2 5.8L5.8 14.2" stroke="#31363b" stroke-width="1.1"/></svg>
<svg style="position:absolute;left:207px;top:66.5px" width="13" height="15" viewBox="0 0 13 15"><path d="M1.5 1.5h8l2 2v10h-10z" fill="#f4f4f4" stroke="#4d4d4d" stroke-width="1.2"/><path d="M9.5 1.5v2h2" fill="none" stroke="#4d4d4d" stroke-width="0.8"/><path d="M2 11.5h9" stroke="#b5b5b5" stroke-width="1.5"/><path d="M1.5 13.2h10" stroke="#6a6a6a" stroke-width="1"/><path d="M3 9.2l2-1.5 1.5 0.5 3-2.5" fill="none" stroke="#555" stroke-width="0.9"/><circle cx="9.5" cy="5.8" r="0.9" fill="#111"/></svg>
<svg style="position:absolute;left:342px;top:67px" width="13" height="15" viewBox="0 0 13 15"><path d="M1.5 1.5h8l2 2v10h-10z" fill="#f4f4f4" stroke="#4d4d4d" stroke-width="1.2"/><path d="M9.5 1.5v2h2" fill="none" stroke="#4d4d4d" stroke-width="0.8"/><path d="M2 11.5h9" stroke="#b5b5b5" stroke-width="1.5"/><path d="M1.5 13.2h10" stroke="#6a6a6a" stroke-width="1"/><path d="M3 9.2l2-1.5 1.5 0.5 3-2.5" fill="none" stroke="#555" stroke-width="0.9"/><circle cx="9.5" cy="5.8" r="0.9" fill="#111"/></svg>
<svg style="position:absolute;left:16px;top:67px" width="18" height="16" viewBox="0 0 18 16"><path d="M1.8 13.2L5 2.3l2.3 0.7-3.2 11z" fill="#a0a0a0" stroke="#3a3a3a" stroke-width="1"/><rect x="7.5" y="1.5" width="4" height="13" rx="0.6" fill="#a0a0a0" stroke="#3a3a3a" stroke-width="1"/><rect x="12.5" y="1.5" width="4" height="13" rx="0.6" fill="#a0a0a0" stroke="#3a3a3a" stroke-width="1"/><path d="M9.5 3.5v7M14.5 3.5v7" stroke="#e8e8e8" stroke-width="1.1"/><circle cx="3.2" cy="13" r="1.3" fill="#a0a0a0" stroke="#3a3a3a" stroke-width="0.8"/></svg>
<svg style="position:absolute;left:93px;top:67px" width="17" height="16" viewBox="0 0 17 16"><path d="M3.8 1.2l12 11-2.8 2.8-12-11z" fill="#c4c4c4" stroke="#333" stroke-width="1.1"/><path d="M5.2 5.2l1.2-1.2M7.2 7l1.2-1.2M9.2 8.8l1.2-1.2M11.2 10.6l1.2-1.2" stroke="#333" stroke-width="0.9"/><path d="M13 1.2l2.8 2.8-10 10.3-3.8 1.1 1.1-3.8z" fill="#b8b8b8" stroke="#333" stroke-width="1.1"/><path d="M11 4.6l1.6 1.6M4.5 11l1.6 1.6" stroke="#333" stroke-width="0.8"/><path d="M1.3 13.8l1.6 1.6" stroke="#000" stroke-width="1.8"/></svg>
<svg style="position:absolute;left:313px;top:67px" width="14" height="14" viewBox="0 0 14 14"><circle cx="7" cy="7" r="6.3" fill="#da4453"/><path d="M4.5 4.5l5 5M9.5 4.5l-5 5" stroke="#fcfcfc" stroke-width="1.4"/></svg>
<svg style="position:absolute;left:452px;top:68px" width="14" height="14" viewBox="0 0 14 14"><circle cx="7" cy="7" r="6.3" fill="#b4b6b8"/><path d="M4.5 4.5l5 5M9.5 4.5l-5 5" stroke="#e8e9ea" stroke-width="1.4"/></svg>
<svg style="position:absolute;left:229.5px;top:128.5px" width="9.5" height="6" viewBox="0 0 9.5 6"><path d="M1 5l3.75 -3.25L8.5 5" fill="none" stroke="#8a8d90" stroke-width="1.8"/></svg>
<div style="position:absolute;left:227px;top:139px;width:15px;height:447px;box-sizing:border-box;background:linear-gradient(90deg,#fcfcfc,#eceded);border:1px solid #a9abad;border-radius:4px;"></div>
<div style="position:absolute;left:233px;top:359px;width:5px;height:1px;box-sizing:border-box;background:#999;"></div>
<div style="position:absolute;left:233px;top:362px;width:5px;height:1px;box-sizing:border-box;background:#999;"></div>
<div style="position:absolute;left:233px;top:365px;width:5px;height:1px;box-sizing:border-box;background:#999;"></div>
<div style="position:absolute;left:232px;top:583px;width:6px;height:50px;box-sizing:border-box;background:linear-gradient(90deg,#c4c6c8,#e4e6e8);border:1px solid #a9abad;border-radius:3px;"></div>
<svg style="position:absolute;left:229.5px;top:639.5px" width="9.5" height="6" viewBox="0 0 9.5 6"><path d="M1 5l3.75 -3.25L8.5 5" fill="none" stroke="#b8babc" stroke-width="1.5"/></svg>
<svg style="position:absolute;left:229.5px;top:652.5px" width="9.5" height="6" viewBox="0 0 9.5 6"><path d="M1 1l3.75 3.25L8.5 1" fill="none" stroke="#232627" stroke-width="1.9"/></svg>
<svg style="position:absolute;left:242px;top:390px" width="7" height="7" viewBox="0 0 7 7"><path d="M5.1 1.7A2.4 2.4 0 1 0 2.3 5.6" fill="none" stroke="#a5a7a9" stroke-width="0.9"/></svg>
<svg style="position:absolute;left:431px;top:390px" width="7" height="7" viewBox="0 0 7 7"><path d="M5.1 1.7A2.4 2.4 0 1 0 2.3 5.6" fill="none" stroke="#a5a7a9" stroke-width="0.9"/></svg>
<svg style="position:absolute;left:904px;top:418px" width="7" height="7" viewBox="0 0 7 7"><path d="M5.1 1.7A2.4 2.4 0 1 0 2.3 5.6" fill="none" stroke="#a5a7a9" stroke-width="0.9"/></svg>
<svg style="position:absolute;left:675px;top:649px" width="7" height="7" viewBox="0 0 7 7"><path d="M5.1 1.7A2.4 2.4 0 1 0 2.3 5.6" fill="none" stroke="#a5a7a9" stroke-width="0.9"/></svg>
<svg style="position:absolute;left:465px;top:672px" width="7" height="7" viewBox="0 0 7 7"><path d="M5.1 1.7A2.4 2.4 0 1 0 2.3 5.6" fill="none" stroke="#a5a7a9" stroke-width="0.9"/></svg>
<div class="t" style="left:446px;top:138.49px;font-size:13px;line-height:13px;color:#31363b;">Id</div>
<div style="position:absolute;left:464px;top:132px;width:21px;height:24px;box-sizing:border-box;background:#fcfcfc;border:1px solid #b1b4b7;border-radius:3px;"></div>
<div class="t" style="left:467.3px;top:138.49px;font-size:13px;line-height:13px;color:#31363b;">3</div>
<div class="t" style="left:491.3px;top:138.49px;font-size:13px;line-height:13px;color:#31363b;">Type</div>
<div style="position:absolute;left:526px;top:132px;width:58px;height:24px;box-sizing:border-box;background:#fcfcfc;border:1px solid #b1b4b7;border-radius:3px;"></div>
<div class="t" style="left:529.3px;top:138.49px;font-size:13px;line-height:13px;color:#31363b;letter-spacing:0.466px;">OptIter</div>
<div class="t" style="left:590.5px;top:138.49px;font-size:13px;line-height:13px;color:#31363b;">Time</div>
<div style="position:absolute;left:625px;top:132px;width:286px;height:24px;box-sizing:border-box;background:#fcfcfc;border:1px solid #b1b4b7;border-radius:3px;"></div>
<div class="t" style="left:628.8px;top:138.49px;font-size:13px;line-height:13px;color:#31363b;">5.6</div>
<div style="position:absolute;left:446px;top:163px;width:193px;height:24px;box-sizing:border-box;background:#fcfcfc;border:1px solid #b1b4b7;border-radius:3px;"></div>
<div class="t" style="left:449.5px;top:168.99px;font-size:13px;line-height:13px;color:#31363b;letter-spacing:-0.050px;">Traces evaluated.</div>
<div style="position:absolute;left:646px;top:163px;width:78px;height:25px;box-sizing:border-box;background:linear-gradient(#eceded,#dfe0e1);border:1px solid #b6b8ba;border-radius:3px;"></div>
<div class="t" style="left:671px;top:169.99px;font-size:13px;line-height:13px;color:#a3a5a7;"><u>S</u>top</div>
<div style="position:absolute;left:732px;top:163px;width:78px;height:25px;box-sizing:border-box;background:linear-gradient(#eceded,#dfe0e1);border:1px solid #b6b8ba;border-radius:3px;"></div>
<div class="t" style="left:748px;top:169.99px;font-size:13px;line-height:13px;color:#a3a5a7;"><u>R</u>efresh</div>
<div style="position:absolute;left:818px;top:167px;width:15px;height:15px;box-sizing:border-box;background:#fcfcfc;border:1px solid #a9abad;border-radius:2px;"></div>
<svg style="position:absolute;left:818px;top:167px" width="15" height="15" viewBox="0 0 15 15"><path d="M4 7.5l2.6 3.2L11 3.8" fill="none" stroke="#232627" stroke-width="1.8"/></svg>
<div class="t" style="left:839px;top:169.49px;font-size:13px;line-height:13px;color:#31363b;letter-spacing:0.254px;"><u>A</u>utorefresh</div>
<div style="position:absolute;left:446px;top:195px;width:458px;height:454px;box-sizing:border-box;background:#eff0f1;border:1px solid #b1b4b7;border-radius:3px;"></div>
<div style="position:absolute;left:454px;top:203px;width:442px;height:438px;box-sizing:border-box;background:#ffffff;"></div>
<div style="position:absolute;left:11px;top:679px;width:898px;height:87px;box-sizing:border-box;background:#fcfcfc;border:1px solid #b1b4b7;border-radius:3px;"></div>
<div class="t" style="left:17.3px;top:684.29px;font-size:13px;line-height:13px;color:#31363b;letter-spacing:0.105px;">Task 'corners' finished.</div>
<div class="t" style="left:17.3px;top:702.29px;font-size:13px;line-height:13px;color:#31363b;letter-spacing:0.432px;">Loaded postprocessing file '/mnt/data/Data/pytest/demo/gui/miller/nominal.post.json'.</div>
<div class="t" style="left:17.3px;top:720.29px;font-size:13px;line-height:13px;color:#31363b;letter-spacing:0.436px;">Opened results file '/mnt/data/Data/pytest/demo/gui/miller/nominal.sqlite'.</div>
<div class="t" style="left:17.3px;top:738.29px;font-size:13px;line-height:13px;color:#31363b;letter-spacing:0.383px;">Saved postprocessing file '/mnt/data/Data/pytest/demo/gui/miller/corners.post.json'.</div>
<svg style="position:absolute;left:914.5px;top:684px" width="9.5" height="6" viewBox="0 0 9.5 6"><path d="M1 5l3.75 -3.25L8.5 5" fill="none" stroke="#232627" stroke-width="1.9"/></svg>
<div style="position:absolute;left:916px;top:694px;width:6px;height:30px;box-sizing:border-box;background:linear-gradient(90deg,#c4c6c8,#e4e6e8);border:1px solid #a9abad;border-radius:3px;"></div>
<div style="position:absolute;left:912px;top:717px;width:15px;height:20px;box-sizing:border-box;background:linear-gradient(90deg,#fcfcfc,#eceded);border:1px solid #a9abad;border-radius:4px;"></div>
<div style="position:absolute;left:917px;top:724px;width:5px;height:1px;box-sizing:border-box;background:#999;"></div>
<div style="position:absolute;left:917px;top:727px;width:5px;height:1px;box-sizing:border-box;background:#999;"></div>
<div style="position:absolute;left:917px;top:730px;width:5px;height:1px;box-sizing:border-box;background:#999;"></div>
<svg style="position:absolute;left:914.5px;top:743px" width="9.5" height="6" viewBox="0 0 9.5 6"><path d="M1 5l3.75 -3.25L8.5 5" fill="none" stroke="#232627" stroke-width="1.9"/></svg>
<svg style="position:absolute;left:914.5px;top:756px" width="9.5" height="6" viewBox="0 0 9.5 6"><path d="M1 1l3.75 3.25L8.5 1" fill="none" stroke="#b8babc" stroke-width="1.5"/></svg>
<div class="t" style="left:624.1px;top:773.29px;font-size:13px;line-height:13px;color:#31363b;letter-spacing:0.254px;">Active task 'nominal' finished</div>
<div class="t" style="left:818.4px;top:773.29px;font-size:13px;line-height:13px;color:#31363b;letter-spacing:-0.087px;">8/8 CPU(s) free</div>
<svg style="position:absolute;left:914px;top:777px" width="14" height="14" viewBox="0 0 14 14"><path d="M13 1.5L13 13L1.5 13z" fill="#d8dadc"/></svg>
<svg style="position:absolute;left:0;top:0" width="944" height="807" viewBox="0 0 944 807"><path d="M516 374.5H889.5" stroke="#ebebeb" stroke-width="1"/><path d="M516 363.5H889.5" stroke="#8c8c8c" stroke-width="1"/><path d="M516 352.5H889.5" stroke="#ebebeb" stroke-width="1"/><path d="M516 341.5H889.5" stroke="#ebebeb" stroke-width="1"/><path d="M516 330.5H889.5" stroke="#ebebeb" stroke-width="1"/><path d="M516 319.5H889.5" stroke="#ebebeb" stroke-width="1"/><path d="M516 308.5H889.5" stroke="#8c8c8c" stroke-width="1"/><path d="M516 297.5H889.5" stroke="#ebebeb" stroke-width="1"/><path d="M516 286.5H889.5" stroke="#ebebeb" stroke-width="1"/><path d="M516 275.5H889.5" stroke="#ebebeb" stroke-width="1"/><path d="M516 264.5H889.5" stroke="#ebebeb" stroke-width="1"/><path d="M516 253.5H889.5" stroke="#8c8c8c" stroke-width="1"/><path d="M516 242.5H889.5" stroke="#ebebeb" stroke-width="1"/><path d="M520.5 240V377" stroke="#d8d8d8" stroke-width="1"/><path d="M557.5 240V377" stroke="#d8d8d8" stroke-width="1"/><path d="M593.5 240V377" stroke="#d8d8d8" stroke-width="1"/><path d="M630.5 240V377" stroke="#d8d8d8" stroke-width="1"/><path d="M666.5 240V377" stroke="#d8d8d8" stroke-width="1"/><path d="M703.5 240V377" stroke="#8c8c8c" stroke-width="1"/><path d="M739.5 240V377" stroke="#d8d8d8" stroke-width="1"/><path d="M776.5 240V377" stroke="#d8d8d8" stroke-width="1"/><path d="M812.5 240V377" stroke="#d8d8d8" stroke-width="1"/><path d="M849.5 240V377" stroke="#d8d8d8" stroke-width="1"/><path d="M885.5 240V377" stroke="#d8d8d8" stroke-width="1"/><polyline points="516.0,362.69 520.0,362.66 524.0,362.63 528.0,362.60 532.0,362.56 536.0,362.52 540.0,362.48 544.0,362.43 548.0,362.37 552.0,362.32 556.0,362.25 560.0,362.18 564.0,362.11 568.0,362.02 572.0,361.93 576.0,361.83 578.5,361.77 579.0,361.75 579.5,361.74 580.0,361.72 580.5,361.71 581.0,361.70 581.5,361.68 582.0,361.67 582.5,361.65 583.0,361.64 583.5,361.62 584.0,361.61 584.5,361.59 585.0,361.57 585.5,361.56 586.0,361.54 586.5,361.53 587.0,361.51 587.5,361.49 588.0,361.48 588.5,361.46 589.0,361.44 589.5,361.42 590.0,361.41 590.5,361.39 591.0,361.37 591.5,361.35 592.0,361.33 592.5,361.32 593.0,361.30 593.5,361.28 594.0,361.26 594.5,361.24 595.0,361.22 595.5,361.20 596.0,361.18 596.5,361.16 597.0,361.14 597.5,361.12 598.0,361.10 598.5,361.08 599.0,361.05 599.5,361.03 600.0,361.01 600.5,360.99 601.0,360.97 601.5,360.94 602.0,360.92 602.5,360.90 603.0,360.87 603.5,360.85 604.0,360.83 604.5,360.80 605.0,360.78 605.5,360.75 606.0,360.72 606.5,360.68 607.0,360.61 607.5,360.50 608.0,360.29 608.5,359.96 609.0,359.41 609.5,358.59 610.0,357.44 610.5,355.91 611.0,354.00 611.5,351.75 612.0,349.20 612.5,346.44 613.0,343.53 613.5,340.52 614.0,337.46 614.5,334.37 615.0,331.27 615.5,328.16 616.0,325.05 616.5,321.94 617.0,318.83 617.5,315.72 618.0,312.62 618.5,309.51 619.0,306.40 619.5,303.29 620.0,300.18 620.5,297.07 621.0,293.96 621.5,290.85 622.0,287.75 622.5,284.65 623.0,281.59 623.5,278.56 624.0,275.62 624.5,272.82 625.0,270.22 625.5,267.88 626.0,265.88 626.5,264.23 627.0,262.96 627.5,262.03 628.0,261.38 628.5,260.95 629.0,260.66 629.5,260.47 630.0,260.33 630.5,260.22 631.0,260.13 631.5,260.04 632.0,259.95 632.5,259.87 633.0,259.79 633.5,259.70 634.0,259.62 634.5,259.54 635.0,259.47 635.5,259.39 636.0,259.31 636.5,259.24 637.0,259.16 637.5,259.09 638.0,259.02 638.5,258.94 639.0,258.87 639.5,258.81 640.0,258.74 640.5,258.67 641.0,258.60 641.5,258.54 642.0,258.47 642.5,258.41 643.0,258.35 643.5,258.29 644.0,258.23 644.5,258.17 645.0,258.11 645.5,258.05 646.0,257.99 646.5,257.93 647.0,257.88 647.5,257.82 648.0,257.77 648.5,257.72 649.0,257.66 649.5,257.61 650.0,257.56 650.5,257.51 651.0,257.46 651.5,257.41 652.0,257.36 652.5,257.31 653.0,257.27 653.5,257.22 654.0,257.18 654.5,257.13 655.0,257.09 655.5,257.04 656.0,257.00 656.5,256.96 657.0,256.91 657.5,256.87 658.0,256.83 660.0,256.68 664.0,256.39 668.0,256.13 672.0,255.90 676.0,255.69 680.0,255.51 684.0,255.35 688.0,255.20 692.0,255.07 696.0,254.96 700.0,254.85 704.0,254.76 708.0,254.68 712.0,254.61 716.0,254.54 720.0,254.48 724.0,254.43 728.0,254.38 732.0,254.34 736.0,254.31 740.0,254.27 744.0,254.24 748.0,254.22 752.0,254.19 756.0,254.17 760.0,254.15 764.0,254.14 768.0,254.12 772.0,254.11 776.0,254.10 780.0,254.09 784.0,254.08 788.0,254.07 792.0,254.06 796.0,254.05 800.0,254.05 804.0,254.04 808.0,254.04 812.0,254.03 816.0,254.03 820.0,254.03 824.0,254.02 828.0,254.02 832.0,254.02 836.0,254.02 840.0,254.02 844.0,254.01 848.0,254.01 852.0,254.01 856.0,254.01 860.0,254.01 864.0,254.01 868.0,254.01 872.0,254.01 876.0,254.01 880.0,254.00 884.0,254.00 888.0,254.00" fill="none" stroke="#000" stroke-width="1.3"/><polyline points="516.0,354.24 520.0,354.22 524.0,354.20 528.0,354.19 532.0,354.17 536.0,354.14 540.0,354.12 544.0,354.09 548.0,354.07 552.0,354.03 556.0,354.00 560.0,353.96 564.0,353.92 568.0,353.88 572.0,353.83 576.0,353.78 580.0,353.72 581.0,353.70 581.5,353.70 582.0,353.69 582.5,353.68 583.0,353.67 583.5,353.66 584.0,353.66 584.5,353.65 585.0,353.64 585.5,353.63 586.0,353.62 586.5,353.61 587.0,353.61 587.5,353.60 588.0,353.59 588.5,353.58 589.0,353.57 589.5,353.56 590.0,353.55 590.5,353.54 591.0,353.53 591.5,353.52 592.0,353.51 592.5,353.50 593.0,353.49 593.5,353.48 594.0,353.47 594.5,353.46 595.0,353.45 595.5,353.44 596.0,353.43 596.5,353.42 597.0,353.41 597.5,353.40 598.0,353.39 598.5,353.37 599.0,353.36 599.5,353.35 600.0,353.34 600.5,353.33 601.0,353.32 601.5,353.30 602.0,353.29 602.5,353.28 603.0,353.27 603.5,353.25 604.0,353.24 604.5,353.23 605.0,353.21 605.5,353.20 606.0,353.19 606.5,353.17 607.0,353.16 607.5,353.15 608.0,353.13 608.5,353.11 609.0,353.07 609.5,353.00 610.0,352.87 610.5,352.65 611.0,352.27 611.5,351.68 612.0,350.81 612.5,349.63 613.0,348.11 613.5,346.27 614.0,344.16 614.5,341.84 615.0,339.36 615.5,336.79 616.0,334.15 616.5,331.49 617.0,328.81 617.5,326.12 618.0,323.44 618.5,320.75 619.0,318.06 619.5,315.38 620.0,312.69 620.5,310.00 621.0,307.31 621.5,304.62 622.0,301.94 622.5,299.25 623.0,296.56 623.5,293.88 624.0,291.19 624.5,288.51 625.0,285.85 625.5,283.21 626.0,280.63 626.5,278.15 627.0,275.82 627.5,273.70 628.0,271.85 628.5,270.32 629.0,269.11 629.5,268.21 630.0,267.58 630.5,267.17 631.0,266.90 631.5,266.74 632.0,266.63 632.5,266.55 633.0,266.49 633.5,266.43 634.0,266.38 634.5,266.33 635.0,266.27 635.5,266.22 636.0,266.17 636.5,266.12 637.0,266.08 637.5,266.03 638.0,265.98 638.5,265.93 639.0,265.89 639.5,265.84 640.0,265.80 640.5,265.76 641.0,265.71 641.5,265.67 642.0,265.63 642.5,265.59 643.0,265.54 643.5,265.50 644.0,265.46 644.5,265.43 645.0,265.39 645.5,265.35 646.0,265.31 646.5,265.27 647.0,265.24 647.5,265.20 648.0,265.17 648.5,265.13 649.0,265.10 649.5,265.06 650.0,265.03 650.5,265.00 651.0,264.96 651.5,264.93 652.0,264.90 652.5,264.87 653.0,264.84 653.5,264.81 654.0,264.78 654.5,264.75 655.0,264.72 655.5,264.69 656.0,264.66 656.5,264.63 657.0,264.61 657.5,264.58 658.0,264.55 658.5,264.53 659.0,264.50 659.5,264.48 660.0,264.45 664.0,264.26 668.0,264.09 672.0,263.94 676.0,263.81 680.0,263.69 684.0,263.58 688.0,263.49 692.0,263.40 696.0,263.33 700.0,263.26 704.0,263.20 708.0,263.14 712.0,263.10 716.0,263.05 720.0,263.02 724.0,262.98 728.0,262.95 732.0,262.92 736.0,262.90 740.0,262.88 744.0,262.86 748.0,262.84 752.0,262.83 756.0,262.81 760.0,262.80 764.0,262.79 768.0,262.78 772.0,262.77 776.0,262.76 780.0,262.76 784.0,262.75 788.0,262.75 792.0,262.74 796.0,262.74 800.0,262.73 804.0,262.73 808.0,262.73 812.0,262.72 816.0,262.72 820.0,262.72 824.0,262.72 828.0,262.71 832.0,262.71 836.0,262.71 840.0,262.71 844.0,262.71 848.0,262.71 852.0,262.71 856.0,262.71 860.0,262.71 864.0,262.71 868.0,262.70 872.0,262.70 876.0,262.70 880.0,262.70 884.0,262.70 888.0,262.70" fill="none" stroke="#000" stroke-width="1.1"/><polyline points="516.0,357.51 520.0,357.49 524.0,357.47 528.0,357.45 532.0,357.43 536.0,357.40 540.0,357.38 544.0,357.35 548.0,357.31 552.0,357.28 556.0,357.24 560.0,357.20 564.0,357.15 568.0,357.10 572.0,357.04 576.0,356.98 580.0,356.91 583.0,356.86 583.5,356.85 584.0,356.84 584.5,356.83 585.0,356.82 585.5,356.81 586.0,356.80 586.5,356.79 587.0,356.78 587.5,356.77 588.0,356.76 588.5,356.75 589.0,356.74 589.5,356.73 590.0,356.72 590.5,356.71 591.0,356.70 591.5,356.68 592.0,356.67 592.5,356.66 593.0,356.65 593.5,356.64 594.0,356.63 594.5,356.61 595.0,356.60 595.5,356.59 596.0,356.58 596.5,356.56 597.0,356.55 597.5,356.54 598.0,356.53 598.5,356.51 599.0,356.50 599.5,356.49 600.0,356.47 600.5,356.46 601.0,356.45 601.5,356.43 602.0,356.42 602.5,356.40 603.0,356.39 603.5,356.37 604.0,356.36 604.5,356.34 605.0,356.33 605.5,356.31 606.0,356.30 606.5,356.28 607.0,356.27 607.5,356.25 608.0,356.23 608.5,356.22 609.0,356.20 609.5,356.18 610.0,356.17 610.5,356.14 611.0,356.11 611.5,356.04 612.0,355.93 612.5,355.73 613.0,355.39 613.5,354.85 614.0,354.04 614.5,352.90 615.0,351.42 615.5,349.59 616.0,347.45 616.5,345.06 617.0,342.47 617.5,339.76 618.0,336.96 618.5,334.13 619.0,331.27 619.5,328.40 620.0,325.52 620.5,322.65 621.0,319.77 621.5,316.90 622.0,314.02 622.5,311.15 623.0,308.27 623.5,305.40 624.0,302.52 624.5,299.65 625.0,296.77 625.5,293.90 626.0,291.03 626.5,288.16 627.0,285.30 627.5,282.47 628.0,279.69 628.5,276.99 629.0,274.44 629.5,272.08 630.0,269.99 630.5,268.21 631.0,266.78 631.5,265.69 632.0,264.90 632.5,264.37 633.0,264.03 633.5,263.81 634.0,263.68 634.5,263.58 635.0,263.51 635.5,263.45 636.0,263.40 636.5,263.35 637.0,263.30 637.5,263.24 638.0,263.19 638.5,263.14 639.0,263.10 639.5,263.05 640.0,263.00 640.5,262.95 641.0,262.91 641.5,262.86 642.0,262.82 642.5,262.77 643.0,262.73 643.5,262.69 644.0,262.64 644.5,262.60 645.0,262.56 645.5,262.52 646.0,262.48 646.5,262.44 647.0,262.40 647.5,262.36 648.0,262.33 648.5,262.29 649.0,262.25 649.5,262.22 650.0,262.18 650.5,262.14 651.0,262.11 651.5,262.08 652.0,262.04 652.5,262.01 653.0,261.98 653.5,261.94 654.0,261.91 654.5,261.88 655.0,261.85 655.5,261.82 656.0,261.79 656.5,261.76 657.0,261.73 657.5,261.70 658.0,261.67 658.5,261.65 659.0,261.62 659.5,261.59 660.0,261.56 660.5,261.54 661.0,261.51 661.5,261.49 662.0,261.46 662.5,261.44 664.0,261.36 668.0,261.18 672.0,261.02 676.0,260.88 680.0,260.75 684.0,260.64 688.0,260.54 692.0,260.45 696.0,260.37 700.0,260.29 704.0,260.23 708.0,260.17 712.0,260.12 716.0,260.08 720.0,260.04 724.0,260.00 728.0,259.97 732.0,259.94 736.0,259.91 740.0,259.89 744.0,259.87 748.0,259.85 752.0,259.83 756.0,259.82 760.0,259.81 764.0,259.80 768.0,259.79 772.0,259.78 776.0,259.77 780.0,259.76 784.0,259.75 788.0,259.75 792.0,259.74 796.0,259.74 800.0,259.73 804.0,259.73 808.0,259.73 812.0,259.72 816.0,259.72 820.0,259.72 824.0,259.72 828.0,259.72 832.0,259.71 836.0,259.71 840.0,259.71 844.0,259.71 848.0,259.71 852.0,259.71 856.0,259.71 860.0,259.71 864.0,259.71 868.0,259.70 872.0,259.70 876.0,259.70 880.0,259.70 884.0,259.70 888.0,259.70" fill="none" stroke="#000" stroke-width="1.0"/><polyline points="516.0,362.73 520.0,362.71 524.0,362.68 528.0,362.65 532.0,362.62 536.0,362.59 540.0,362.55 544.0,362.50 548.0,362.46 552.0,362.41 556.0,362.35 560.0,362.29 564.0,362.23 568.0,362.16 572.0,362.08 576.0,361.99 580.0,361.90 584.0,361.80 585.0,361.77 585.5,361.75 586.0,361.74 586.5,361.73 587.0,361.71 587.5,361.70 588.0,361.68 588.5,361.67 589.0,361.65 589.5,361.64 590.0,361.62 590.5,361.61 591.0,361.59 591.5,361.58 592.0,361.56 592.5,361.55 593.0,361.53 593.5,361.51 594.0,361.50 594.5,361.48 595.0,361.46 595.5,361.45 596.0,361.43 596.5,361.41 597.0,361.39 597.5,361.37 598.0,361.36 598.5,361.34 599.0,361.32 599.5,361.30 600.0,361.28 600.5,361.26 601.0,361.24 601.5,361.22 602.0,361.20 602.5,361.18 603.0,361.16 603.5,361.14 604.0,361.12 604.5,361.10 605.0,361.08 605.5,361.06 606.0,361.04 606.5,361.01 607.0,360.99 607.5,360.97 608.0,360.95 608.5,360.92 609.0,360.90 609.5,360.88 610.0,360.85 610.5,360.83 611.0,360.81 611.5,360.78 612.0,360.76 612.5,360.73 613.0,360.69 613.5,360.63 614.0,360.53 614.5,360.37 615.0,360.08 615.5,359.61 616.0,358.90 616.5,357.88 617.0,356.52 617.5,354.79 618.0,352.73 618.5,350.39 619.0,347.83 619.5,345.11 620.0,342.30 620.5,339.43 621.0,336.53 621.5,333.62 622.0,330.70 622.5,327.77 623.0,324.85 623.5,321.93 624.0,319.01 624.5,316.09 625.0,313.17 625.5,310.24 626.0,307.32 626.5,304.40 627.0,301.48 627.5,298.56 628.0,295.63 628.5,292.72 629.0,289.81 629.5,286.92 630.0,284.07 630.5,281.28 631.0,278.62 631.5,276.13 632.0,273.89 632.5,271.95 633.0,270.35 633.5,269.11 634.0,268.19 634.5,267.56 635.0,267.15 635.5,266.89 636.0,266.72 636.5,266.62 637.0,266.54 637.5,266.48 638.0,266.42 638.5,266.37 639.0,266.32 639.5,266.26 640.0,266.21 640.5,266.16 641.0,266.12 641.5,266.07 642.0,266.02 642.5,265.97 643.0,265.93 643.5,265.88 644.0,265.83 644.5,265.79 645.0,265.75 645.5,265.70 646.0,265.66 646.5,265.62 647.0,265.58 647.5,265.54 648.0,265.50 648.5,265.46 649.0,265.42 649.5,265.38 650.0,265.34 650.5,265.30 651.0,265.27 651.5,265.23 652.0,265.19 652.5,265.16 653.0,265.12 653.5,265.09 654.0,265.06 654.5,265.02 655.0,264.99 655.5,264.96 656.0,264.92 656.5,264.89 657.0,264.86 657.5,264.83 658.0,264.80 658.5,264.77 659.0,264.74 659.5,264.71 660.0,264.68 660.5,264.66 661.0,264.63 661.5,264.60 662.0,264.57 662.5,264.55 663.0,264.52 663.5,264.50 664.0,264.47 664.5,264.45 668.0,264.28 672.0,264.11 676.0,263.96 680.0,263.82 684.0,263.70 688.0,263.59 692.0,263.50 696.0,263.41 700.0,263.33 704.0,263.26 708.0,263.20 712.0,263.15 716.0,263.10 720.0,263.06 724.0,263.02 728.0,262.98 732.0,262.95 736.0,262.93 740.0,262.90 744.0,262.88 748.0,262.86 752.0,262.84 756.0,262.83 760.0,262.81 764.0,262.80 768.0,262.79 772.0,262.78 776.0,262.77 780.0,262.76 784.0,262.76 788.0,262.75 792.0,262.75 796.0,262.74 800.0,262.74 804.0,262.73 808.0,262.73 812.0,262.73 816.0,262.72 820.0,262.72 824.0,262.72 828.0,262.72 832.0,262.71 836.0,262.71 840.0,262.71 844.0,262.71 848.0,262.71 852.0,262.71 856.0,262.71 860.0,262.71 864.0,262.71 868.0,262.71 872.0,262.70 876.0,262.70 880.0,262.70 884.0,262.70 888.0,262.70" fill="none" stroke="#000" stroke-width="1.1"/><polyline points="516.0,354.26 520.0,354.25 524.0,354.23 528.0,354.21 532.0,354.20 536.0,354.18 540.0,354.16 544.0,354.14 548.0,354.11 552.0,354.08 556.0,354.06 560.0,354.02 564.0,353.99 568.0,353.95 572.0,353.91 576.0,353.86 580.0,353.81 584.0,353.76 587.5,353.71 588.0,353.70 588.5,353.69 589.0,353.68 589.5,353.67 590.0,353.67 590.5,353.66 591.0,353.65 591.5,353.64 592.0,353.63 592.5,353.62 593.0,353.62 593.5,353.61 594.0,353.60 594.5,353.59 595.0,353.58 595.5,353.57 596.0,353.56 596.5,353.55 597.0,353.54 597.5,353.53 598.0,353.52 598.5,353.51 599.0,353.50 599.5,353.49 600.0,353.48 600.5,353.47 601.0,353.46 601.5,353.45 602.0,353.44 602.5,353.43 603.0,353.42 603.5,353.41 604.0,353.40 604.5,353.39 605.0,353.38 605.5,353.36 606.0,353.35 606.5,353.34 607.0,353.33 607.5,353.32 608.0,353.31 608.5,353.29 609.0,353.28 609.5,353.27 610.0,353.26 610.5,353.24 611.0,353.23 611.5,353.22 612.0,353.20 612.5,353.19 613.0,353.18 613.5,353.16 614.0,353.15 614.5,353.13 615.0,353.11 615.5,353.07 616.0,353.01 616.5,352.89 617.0,352.67 617.5,352.30 618.0,351.71 618.5,350.84 619.0,349.64 619.5,348.09 620.0,346.20 620.5,344.00 621.0,341.56 621.5,338.94 622.0,336.21 622.5,333.40 623.0,330.56 623.5,327.70 624.0,324.82 624.5,321.95 625.0,319.07 625.5,316.20 626.0,313.32 626.5,310.45 627.0,307.57 627.5,304.70 628.0,301.82 628.5,298.95 629.0,296.07 629.5,293.20 630.0,290.32 630.5,287.45 631.0,284.59 631.5,281.73 632.0,278.91 632.5,276.14 633.0,273.46 633.5,270.93 634.0,268.61 634.5,266.56 635.0,264.84 635.5,263.46 636.0,262.41 636.5,261.65 637.0,261.14 637.5,260.79 638.0,260.57 638.5,260.41 639.0,260.29 639.5,260.18 640.0,260.09 640.5,260.01 641.0,259.92 641.5,259.84 642.0,259.75 642.5,259.67 643.0,259.59 643.5,259.51 644.0,259.43 644.5,259.36 645.0,259.28 645.5,259.21 646.0,259.13 646.5,259.06 647.0,258.99 647.5,258.92 648.0,258.85 648.5,258.78 649.0,258.71 649.5,258.64 650.0,258.58 650.5,258.51 651.0,258.45 651.5,258.39 652.0,258.32 652.5,258.26 653.0,258.20 653.5,258.14 654.0,258.08 654.5,258.03 655.0,257.97 655.5,257.91 656.0,257.86 656.5,257.80 657.0,257.75 657.5,257.69 658.0,257.64 658.5,257.59 659.0,257.54 659.5,257.49 660.0,257.44 660.5,257.39 661.0,257.34 661.5,257.30 662.0,257.25 662.5,257.20 663.0,257.16 663.5,257.11 664.0,257.07 664.5,257.03 665.0,256.98 665.5,256.94 666.0,256.90 666.5,256.86 667.0,256.82 668.0,256.74 672.0,256.44 676.0,256.18 680.0,255.94 684.0,255.73 688.0,255.55 692.0,255.38 696.0,255.23 700.0,255.10 704.0,254.98 708.0,254.87 712.0,254.78 716.0,254.69 720.0,254.62 724.0,254.55 728.0,254.49 732.0,254.44 736.0,254.39 740.0,254.35 744.0,254.31 748.0,254.28 752.0,254.25 756.0,254.22 760.0,254.20 764.0,254.18 768.0,254.16 772.0,254.14 776.0,254.13 780.0,254.11 784.0,254.10 788.0,254.09 792.0,254.08 796.0,254.07 800.0,254.06 804.0,254.06 808.0,254.05 812.0,254.04 816.0,254.04 820.0,254.04 824.0,254.03 828.0,254.03 832.0,254.03 836.0,254.02 840.0,254.02 844.0,254.02 848.0,254.02 852.0,254.01 856.0,254.01 860.0,254.01 864.0,254.01 868.0,254.01 872.0,254.01 876.0,254.01 880.0,254.01 884.0,254.01 888.0,254.01" fill="none" stroke="#000" stroke-width="1.0"/><polyline points="516.0,357.56 520.0,357.54 524.0,357.53 528.0,357.51 532.0,357.50 536.0,357.48 540.0,357.46 544.0,357.43 548.0,357.41 552.0,357.38 556.0,357.35 560.0,357.32 564.0,357.28 568.0,357.24 572.0,357.20 576.0,357.16 580.0,357.11 584.0,357.05 588.0,356.99 592.0,356.92 595.5,356.86 596.0,356.85 596.5,356.84 597.0,356.83 597.5,356.82 598.0,356.81 598.5,356.80 599.0,356.79 599.5,356.78 600.0,356.77 600.5,356.76 601.0,356.75 601.5,356.74 602.0,356.73 602.5,356.72 603.0,356.71 603.5,356.70 604.0,356.69 604.5,356.68 605.0,356.66 605.5,356.65 606.0,356.64 606.5,356.63 607.0,356.62 607.5,356.60 608.0,356.59 608.5,356.58 609.0,356.57 609.5,356.55 610.0,356.54 610.5,356.53 611.0,356.52 611.5,356.50 612.0,356.49 612.5,356.48 613.0,356.46 613.5,356.45 614.0,356.43 614.5,356.42 615.0,356.41 615.5,356.39 616.0,356.38 616.5,356.36 617.0,356.35 617.5,356.33 618.0,356.32 618.5,356.30 619.0,356.29 619.5,356.27 620.0,356.25 620.5,356.24 621.0,356.22 621.5,356.20 622.0,356.19 622.5,356.17 623.0,356.15 623.5,356.11 624.0,356.06 624.5,355.96 625.0,355.78 625.5,355.47 626.0,354.97 626.5,354.22 627.0,353.16 627.5,351.75 628.0,349.98 628.5,347.90 629.0,345.55 629.5,343.00 630.0,340.31 630.5,337.53 631.0,334.70 631.5,331.84 632.0,328.97 632.5,326.10 633.0,323.22 633.5,320.35 634.0,317.47 634.5,314.60 635.0,311.72 635.5,308.85 636.0,305.97 636.5,303.10 637.0,300.22 637.5,297.35 638.0,294.47 638.5,291.60 639.0,288.73 639.5,285.87 640.0,283.03 640.5,280.24 641.0,277.52 641.5,274.94 642.0,272.53 642.5,270.38 643.0,268.54 643.5,267.04 644.0,265.88 644.5,265.04 645.0,264.46 645.5,264.09 646.0,263.85 646.5,263.70 647.0,263.60 647.5,263.53 648.0,263.47 648.5,263.41 649.0,263.36 649.5,263.31 650.0,263.25 650.5,263.20 651.0,263.15 651.5,263.11 652.0,263.06 652.5,263.01 653.0,262.96 653.5,262.92 654.0,262.87 654.5,262.83 655.0,262.78 655.5,262.74 656.0,262.69 656.5,262.65 657.0,262.61 657.5,262.57 658.0,262.53 658.5,262.49 659.0,262.45 659.5,262.41 660.0,262.37 660.5,262.33 661.0,262.30 661.5,262.26 662.0,262.22 662.5,262.19 663.0,262.15 663.5,262.12 664.0,262.08 664.5,262.05 665.0,262.02 665.5,261.98 666.0,261.95 666.5,261.92 667.0,261.89 667.5,261.86 668.0,261.83 668.5,261.80 669.0,261.77 669.5,261.74 670.0,261.71 670.5,261.68 671.0,261.65 671.5,261.62 672.0,261.60 672.5,261.57 673.0,261.54 673.5,261.52 674.0,261.49 674.5,261.47 675.0,261.44 676.0,261.39 680.0,261.21 684.0,261.05 688.0,260.90 692.0,260.77 696.0,260.65 700.0,260.55 704.0,260.46 708.0,260.38 712.0,260.30 716.0,260.24 720.0,260.18 724.0,260.13 728.0,260.08 732.0,260.04 736.0,260.00 740.0,259.97 744.0,259.94 748.0,259.92 752.0,259.89 756.0,259.87 760.0,259.85 764.0,259.84 768.0,259.82 772.0,259.81 776.0,259.80 780.0,259.79 784.0,259.78 788.0,259.77 792.0,259.76 796.0,259.75 800.0,259.75 804.0,259.74 808.0,259.74 812.0,259.73 816.0,259.73 820.0,259.73 824.0,259.72 828.0,259.72 832.0,259.72 836.0,259.72 840.0,259.72 844.0,259.71 848.0,259.71 852.0,259.71 856.0,259.71 860.0,259.71 864.0,259.71 868.0,259.71 872.0,259.71 876.0,259.71 880.0,259.70 884.0,259.70 888.0,259.70" fill="none" stroke="#000" stroke-width="1.0"/><polyline points="516.0,362.80 520.0,362.78 524.0,362.76 528.0,362.74 532.0,362.72 536.0,362.69 540.0,362.66 544.0,362.63 548.0,362.60 552.0,362.56 556.0,362.52 560.0,362.47 564.0,362.42 568.0,362.37 572.0,362.31 576.0,362.25 580.0,362.18 584.0,362.10 588.0,362.02 592.0,361.93 596.0,361.83 598.5,361.76 599.0,361.75 599.5,361.73 600.0,361.72 600.5,361.70 601.0,361.69 601.5,361.68 602.0,361.66 602.5,361.65 603.0,361.63 603.5,361.61 604.0,361.60 604.5,361.58 605.0,361.57 605.5,361.55 606.0,361.54 606.5,361.52 607.0,361.50 607.5,361.49 608.0,361.47 608.5,361.45 609.0,361.43 609.5,361.42 610.0,361.40 610.5,361.38 611.0,361.36 611.5,361.35 612.0,361.33 612.5,361.31 613.0,361.29 613.5,361.27 614.0,361.25 614.5,361.23 615.0,361.21 615.5,361.19 616.0,361.17 616.5,361.15 617.0,361.13 617.5,361.11 618.0,361.09 618.5,361.07 619.0,361.05 619.5,361.02 620.0,361.00 620.5,360.98 621.0,360.96 621.5,360.93 622.0,360.91 622.5,360.89 623.0,360.86 623.5,360.84 624.0,360.82 624.5,360.79 625.0,360.77 625.5,360.74 626.0,360.71 626.5,360.66 627.0,360.58 627.5,360.45 628.0,360.21 628.5,359.83 629.0,359.22 629.5,358.33 630.0,357.11 630.5,355.52 631.0,353.59 631.5,351.36 632.0,348.87 632.5,346.21 633.0,343.43 633.5,340.58 634.0,337.69 634.5,334.78 635.0,331.87 635.5,328.94 636.0,326.02 636.5,323.10 637.0,320.18 637.5,317.26 638.0,314.33 638.5,311.41 639.0,308.49 639.5,305.57 640.0,302.65 640.5,299.72 641.0,296.80 641.5,293.88 642.0,290.97 642.5,288.07 643.0,285.20 643.5,282.38 644.0,279.67 644.5,277.10 645.0,274.75 645.5,272.68 646.0,270.95 646.5,269.56 647.0,268.52 647.5,267.79 648.0,267.29 648.5,266.98 649.0,266.78 649.5,266.65 650.0,266.57 650.5,266.50 651.0,266.44 651.5,266.39 652.0,266.34 652.5,266.29 653.0,266.23 653.5,266.18 654.0,266.13 654.5,266.09 655.0,266.04 655.5,265.99 656.0,265.94 656.5,265.90 657.0,265.85 657.5,265.81 658.0,265.76 658.5,265.72 659.0,265.68 659.5,265.64 660.0,265.59 660.5,265.55 661.0,265.51 661.5,265.47 662.0,265.43 662.5,265.39 663.0,265.36 663.5,265.32 664.0,265.28 664.5,265.24 665.0,265.21 665.5,265.17 666.0,265.14 666.5,265.10 667.0,265.07 667.5,265.04 668.0,265.00 668.5,264.97 669.0,264.94 669.5,264.91 670.0,264.87 670.5,264.84 671.0,264.81 671.5,264.78 672.0,264.75 672.5,264.72 673.0,264.70 673.5,264.67 674.0,264.64 674.5,264.61 675.0,264.59 675.5,264.56 676.0,264.53 676.5,264.51 677.0,264.48 677.5,264.46 678.0,264.43 680.0,264.33 684.0,264.16 688.0,264.00 692.0,263.86 696.0,263.73 700.0,263.62 704.0,263.52 708.0,263.43 712.0,263.35 716.0,263.28 720.0,263.22 724.0,263.16 728.0,263.11 732.0,263.07 736.0,263.03 740.0,262.99 744.0,262.96 748.0,262.93 752.0,262.91 756.0,262.89 760.0,262.87 764.0,262.85 768.0,262.83 772.0,262.82 776.0,262.81 780.0,262.79 784.0,262.78 788.0,262.77 792.0,262.77 796.0,262.76 800.0,262.75 804.0,262.75 808.0,262.74 812.0,262.74 816.0,262.73 820.0,262.73 824.0,262.73 828.0,262.72 832.0,262.72 836.0,262.72 840.0,262.72 844.0,262.72 848.0,262.71 852.0,262.71 856.0,262.71 860.0,262.71 864.0,262.71 868.0,262.71 872.0,262.71 876.0,262.71 880.0,262.71 884.0,262.70 888.0,262.70" fill="none" stroke="#000" stroke-width="1.1"/><polyline points="516.0,354.30 520.0,354.29 524.0,354.28 528.0,354.26 532.0,354.25 536.0,354.24 540.0,354.22 544.0,354.21 548.0,354.19 552.0,354.17 556.0,354.15 560.0,354.12 564.0,354.10 568.0,354.07 572.0,354.04 576.0,354.00 580.0,353.97 584.0,353.93 588.0,353.88 592.0,353.84 596.0,353.78 600.0,353.73 601.0,353.71 601.5,353.70 602.0,353.70 602.5,353.69 603.0,353.68 603.5,353.67 604.0,353.66 604.5,353.65 605.0,353.65 605.5,353.64 606.0,353.63 606.5,353.62 607.0,353.61 607.5,353.60 608.0,353.59 608.5,353.59 609.0,353.58 609.5,353.57 610.0,353.56 610.5,353.55 611.0,353.54 611.5,353.53 612.0,353.52 612.5,353.51 613.0,353.50 613.5,353.49 614.0,353.48 614.5,353.47 615.0,353.46 615.5,353.45 616.0,353.44 616.5,353.43 617.0,353.42 617.5,353.41 618.0,353.39 618.5,353.38 619.0,353.37 619.5,353.36 620.0,353.35 620.5,353.34 621.0,353.32 621.5,353.31 622.0,353.30 622.5,353.29 623.0,353.28 623.5,353.26 624.0,353.25 624.5,353.24 625.0,353.22 625.5,353.21 626.0,353.20 626.5,353.18 627.0,353.17 627.5,353.16 628.0,353.14 628.5,353.13 629.0,353.10 629.5,353.05 630.0,352.97 630.5,352.81 631.0,352.54 631.5,352.09 632.0,351.40 632.5,350.40 633.0,349.07 633.5,347.38 634.0,345.35 634.5,343.05 635.0,340.53 635.5,337.86 636.0,335.09 636.5,332.27 637.0,329.41 637.5,326.55 638.0,323.67 638.5,320.80 639.0,317.92 639.5,315.05 640.0,312.17 640.5,309.30 641.0,306.42 641.5,303.55 642.0,300.67 642.5,297.80 643.0,294.92 643.5,292.05 644.0,289.18 644.5,286.30 645.0,283.44 645.5,280.60 646.0,277.79 646.5,275.05 647.0,272.43 647.5,269.97 648.0,267.76 648.5,265.83 649.0,264.24 649.5,263.00 650.0,262.07 650.5,261.42 651.0,260.98 651.5,260.69 652.0,260.49 652.5,260.35 653.0,260.24 653.5,260.15 654.0,260.06 654.5,259.97 655.0,259.89 655.5,259.80 656.0,259.72 656.5,259.64 657.0,259.56 657.5,259.48 658.0,259.40 658.5,259.33 659.0,259.25 659.5,259.18 660.0,259.10 660.5,259.03 661.0,258.96 661.5,258.89 662.0,258.82 662.5,258.75 663.0,258.68 663.5,258.62 664.0,258.55 664.5,258.49 665.0,258.42 665.5,258.36 666.0,258.30 666.5,258.24 667.0,258.18 667.5,258.12 668.0,258.06 668.5,258.00 669.0,257.95 669.5,257.89 670.0,257.83 670.5,257.78 671.0,257.73 671.5,257.67 672.0,257.62 672.5,257.57 673.0,257.52 673.5,257.47 674.0,257.42 674.5,257.37 675.0,257.32 675.5,257.28 676.0,257.23 676.5,257.18 677.0,257.14 677.5,257.10 678.0,257.05 678.5,257.01 679.0,256.97 679.5,256.92 680.0,256.88 680.5,256.84 684.0,256.57 688.0,256.29 692.0,256.05 696.0,255.82 700.0,255.63 704.0,255.45 708.0,255.29 712.0,255.15 716.0,255.03 720.0,254.92 724.0,254.82 728.0,254.73 732.0,254.65 736.0,254.58 740.0,254.52 744.0,254.46 748.0,254.41 752.0,254.37 756.0,254.33 760.0,254.29 764.0,254.26 768.0,254.23 772.0,254.21 776.0,254.19 780.0,254.17 784.0,254.15 788.0,254.13 792.0,254.12 796.0,254.10 800.0,254.09 804.0,254.08 808.0,254.07 812.0,254.07 816.0,254.06 820.0,254.05 824.0,254.05 828.0,254.04 832.0,254.04 836.0,254.03 840.0,254.03 844.0,254.03 848.0,254.02 852.0,254.02 856.0,254.02 860.0,254.02 864.0,254.02 868.0,254.01 872.0,254.01 876.0,254.01 880.0,254.01 884.0,254.01 888.0,254.01" fill="none" stroke="#000" stroke-width="1.0"/><polyline points="516.0,362.83 520.0,362.81 524.0,362.79 528.0,362.77 532.0,362.75 536.0,362.73 540.0,362.70 544.0,362.67 548.0,362.64 552.0,362.61 556.0,362.57 560.0,362.53 564.0,362.49 568.0,362.44 572.0,362.39 576.0,362.34 580.0,362.27 584.0,362.21 588.0,362.13 592.0,362.05 596.0,361.96 600.0,361.87 604.0,361.76 604.5,361.75 605.0,361.74 605.5,361.72 606.0,361.71 606.5,361.69 607.0,361.68 607.5,361.66 608.0,361.65 608.5,361.63 609.0,361.62 609.5,361.60 610.0,361.59 610.5,361.57 611.0,361.56 611.5,361.54 612.0,361.52 612.5,361.51 613.0,361.49 613.5,361.47 614.0,361.46 614.5,361.44 615.0,361.42 615.5,361.40 616.0,361.39 616.5,361.37 617.0,361.35 617.5,361.33 618.0,361.31 618.5,361.29 619.0,361.27 619.5,361.25 620.0,361.24 620.5,361.22 621.0,361.20 621.5,361.18 622.0,361.16 622.5,361.13 623.0,361.11 623.5,361.09 624.0,361.07 624.5,361.05 625.0,361.03 625.5,361.01 626.0,360.98 626.5,360.96 627.0,360.94 627.5,360.92 628.0,360.89 628.5,360.87 629.0,360.84 629.5,360.82 630.0,360.80 630.5,360.77 631.0,360.74 631.5,360.71 632.0,360.67 632.5,360.59 633.0,360.46 633.5,360.24 634.0,359.87 634.5,359.27 635.0,358.39 635.5,357.16 636.0,355.55 636.5,353.57 637.0,351.26 637.5,348.67 638.0,345.87 638.5,342.93 639.0,339.91 639.5,336.84 640.0,333.75 640.5,330.65 641.0,327.54 641.5,324.43 642.0,321.32 642.5,318.21 643.0,315.10 643.5,311.99 644.0,308.88 644.5,305.77 645.0,302.67 645.5,299.56 646.0,296.45 646.5,293.34 647.0,290.23 647.5,287.13 648.0,284.04 648.5,280.98 649.0,277.97 649.5,275.05 650.0,272.28 650.5,269.72 651.0,267.45 651.5,265.52 652.0,263.95 652.5,262.75 653.0,261.88 653.5,261.28 654.0,260.88 654.5,260.62 655.0,260.44 655.5,260.31 656.0,260.20 656.5,260.11 657.0,260.02 657.5,259.94 658.0,259.85 658.5,259.77 659.0,259.69 659.5,259.61 660.0,259.53 660.5,259.45 661.0,259.37 661.5,259.30 662.0,259.22 662.5,259.15 663.0,259.07 663.5,259.00 664.0,258.93 664.5,258.86 665.0,258.79 665.5,258.72 666.0,258.66 666.5,258.59 667.0,258.53 667.5,258.46 668.0,258.40 668.5,258.34 669.0,258.27 669.5,258.21 670.0,258.15 670.5,258.10 671.0,258.04 671.5,257.98 672.0,257.92 672.5,257.87 673.0,257.81 673.5,257.76 674.0,257.71 674.5,257.65 675.0,257.60 675.5,257.55 676.0,257.50 676.5,257.45 677.0,257.40 677.5,257.35 678.0,257.31 678.5,257.26 679.0,257.21 679.5,257.17 680.0,257.12 680.5,257.08 681.0,257.03 681.5,256.99 682.0,256.95 682.5,256.91 683.0,256.87 683.5,256.82 684.0,256.78 688.0,256.48 692.0,256.22 696.0,255.98 700.0,255.76 704.0,255.57 708.0,255.40 712.0,255.25 716.0,255.12 720.0,255.00 724.0,254.89 728.0,254.79 732.0,254.71 736.0,254.63 740.0,254.56 744.0,254.50 748.0,254.45 752.0,254.40 756.0,254.36 760.0,254.32 764.0,254.28 768.0,254.25 772.0,254.23 776.0,254.20 780.0,254.18 784.0,254.16 788.0,254.14 792.0,254.13 796.0,254.11 800.0,254.10 804.0,254.09 808.0,254.08 812.0,254.07 816.0,254.06 820.0,254.06 824.0,254.05 828.0,254.05 832.0,254.04 836.0,254.04 840.0,254.03 844.0,254.03 848.0,254.03 852.0,254.02 856.0,254.02 860.0,254.02 864.0,254.02 868.0,254.01 872.0,254.01 876.0,254.01 880.0,254.01 884.0,254.01 888.0,254.01" fill="none" stroke="#000" stroke-width="1.3"/><polyline points="516.0,354.31 520.0,354.30 524.0,354.29 528.0,354.28 532.0,354.27 536.0,354.26 540.0,354.24 544.0,354.23 548.0,354.21 552.0,354.20 556.0,354.18 560.0,354.16 564.0,354.13 568.0,354.11 572.0,354.08 576.0,354.05 580.0,354.02 584.0,353.98 588.0,353.94 592.0,353.90 596.0,353.86 600.0,353.80 604.0,353.75 607.0,353.70 607.5,353.70 608.0,353.69 608.5,353.68 609.0,353.67 609.5,353.66 610.0,353.66 610.5,353.65 611.0,353.64 611.5,353.63 612.0,353.62 612.5,353.61 613.0,353.61 613.5,353.60 614.0,353.59 614.5,353.58 615.0,353.57 615.5,353.56 616.0,353.55 616.5,353.54 617.0,353.53 617.5,353.52 618.0,353.51 618.5,353.50 619.0,353.49 619.5,353.48 620.0,353.47 620.5,353.46 621.0,353.45 621.5,353.44 622.0,353.43 622.5,353.42 623.0,353.41 623.5,353.40 624.0,353.39 624.5,353.37 625.0,353.36 625.5,353.35 626.0,353.34 626.5,353.33 627.0,353.32 627.5,353.30 628.0,353.29 628.5,353.28 629.0,353.27 629.5,353.25 630.0,353.24 630.5,353.23 631.0,353.21 631.5,353.20 632.0,353.19 632.5,353.17 633.0,353.16 633.5,353.15 634.0,353.13 634.5,353.11 635.0,353.07 635.5,353.00 636.0,352.87 636.5,352.65 637.0,352.27 637.5,351.68 638.0,350.81 638.5,349.63 639.0,348.11 639.5,346.27 640.0,344.16 640.5,341.84 641.0,339.36 641.5,336.79 642.0,334.15 642.5,331.49 643.0,328.81 643.5,326.12 644.0,323.44 644.5,320.75 645.0,318.06 645.5,315.38 646.0,312.69 646.5,310.00 647.0,307.31 647.5,304.62 648.0,301.94 648.5,299.25 649.0,296.56 649.5,293.88 650.0,291.19 650.5,288.51 651.0,285.85 651.5,283.21 652.0,280.63 652.5,278.15 653.0,275.82 653.5,273.70 654.0,271.85 654.5,270.32 655.0,269.11 655.5,268.21 656.0,267.58 656.5,267.17 657.0,266.90 657.5,266.74 658.0,266.63 658.5,266.55 659.0,266.49 659.5,266.43 660.0,266.38 660.5,266.33 661.0,266.27 661.5,266.22 662.0,266.17 662.5,266.12 663.0,266.08 663.5,266.03 664.0,265.98 664.5,265.93 665.0,265.89 665.5,265.84 666.0,265.80 666.5,265.76 667.0,265.71 667.5,265.67 668.0,265.63 668.5,265.59 669.0,265.54 669.5,265.50 670.0,265.46 670.5,265.43 671.0,265.39 671.5,265.35 672.0,265.31 672.5,265.27 673.0,265.24 673.5,265.20 674.0,265.17 674.5,265.13 675.0,265.10 675.5,265.06 676.0,265.03 676.5,265.00 677.0,264.96 677.5,264.93 678.0,264.90 678.5,264.87 679.0,264.84 679.5,264.81 680.0,264.78 680.5,264.75 681.0,264.72 681.5,264.69 682.0,264.66 682.5,264.63 683.0,264.61 683.5,264.58 684.0,264.55 684.5,264.53 685.0,264.50 685.5,264.48 686.0,264.45 688.0,264.35 692.0,264.17 696.0,264.02 700.0,263.87 704.0,263.75 708.0,263.63 712.0,263.53 716.0,263.44 720.0,263.36 724.0,263.29 728.0,263.23 732.0,263.17 736.0,263.12 740.0,263.07 744.0,263.03 748.0,263.00 752.0,262.97 756.0,262.94 760.0,262.91 764.0,262.89 768.0,262.87 772.0,262.85 776.0,262.83 780.0,262.82 784.0,262.81 788.0,262.79 792.0,262.78 796.0,262.78 800.0,262.77 804.0,262.76 808.0,262.75 812.0,262.75 816.0,262.74 820.0,262.74 824.0,262.73 828.0,262.73 832.0,262.73 836.0,262.72 840.0,262.72 844.0,262.72 848.0,262.72 852.0,262.72 856.0,262.71 860.0,262.71 864.0,262.71 868.0,262.71 872.0,262.71 876.0,262.71 880.0,262.71 884.0,262.71 888.0,262.71" fill="none" stroke="#000" stroke-width="1.1"/><path d="M516.5 240V377.5H889.5" fill="none" stroke="#000" stroke-width="1.3"/><path d="M516 587.5H889.5" stroke="#ebebeb" stroke-width="1"/><path d="M516 579.5H889.5" stroke="#8c8c8c" stroke-width="1"/><path d="M516 570.5H889.5" stroke="#ebebeb" stroke-width="1"/><path d="M516 562.5H889.5" stroke="#ebebeb" stroke-width="1"/><path d="M516 553.5H889.5" stroke="#ebebeb" stroke-width="1"/><path d="M516 545.5H889.5" stroke="#ebebeb" stroke-width="1"/><path d="M516 536.5H889.5" stroke="#8c8c8c" stroke-width="1"/><path d="M516 528.5H889.5" stroke="#ebebeb" stroke-width="1"/><path d="M516 519.5H889.5" stroke="#ebebeb" stroke-width="1"/><path d="M516 511.5H889.5" stroke="#ebebeb" stroke-width="1"/><path d="M516 502.5H889.5" stroke="#ebebeb" stroke-width="1"/><path d="M516 494.5H889.5" stroke="#8c8c8c" stroke-width="1"/><path d="M516 485.5H889.5" stroke="#ebebeb" stroke-width="1"/><path d="M516 477.5H889.5" stroke="#ebebeb" stroke-width="1"/><path d="M516 468.5H889.5" stroke="#ebebeb" stroke-width="1"/><path d="M516 460.5H889.5" stroke="#ebebeb" stroke-width="1"/><path d="M539.5 456V593" stroke="#d8d8d8" stroke-width="1"/><path d="M572.5 456V593" stroke="#d8d8d8" stroke-width="1"/><path d="M605.5 456V593" stroke="#d8d8d8" stroke-width="1"/><path d="M637.5 456V593" stroke="#d8d8d8" stroke-width="1"/><path d="M670.5 456V593" stroke="#d8d8d8" stroke-width="1"/><path d="M703.5 456V593" stroke="#8c8c8c" stroke-width="1"/><path d="M736.5 456V593" stroke="#d8d8d8" stroke-width="1"/><path d="M769.5 456V593" stroke="#d8d8d8" stroke-width="1"/><path d="M801.5 456V593" stroke="#d8d8d8" stroke-width="1"/><path d="M834.5 456V593" stroke="#d8d8d8" stroke-width="1"/><path d="M867.5 456V593" stroke="#d8d8d8" stroke-width="1"/><polyline points="539.6,578.87 540.3,578.61 540.9,578.27 541.6,577.82 542.2,577.28 542.9,576.63 543.5,575.86 544.2,574.98 544.8,573.99 545.5,572.87 546.2,571.63 546.8,570.28 547.5,568.80 548.1,567.21 548.8,565.50 549.4,563.68 550.1,561.75 550.7,559.72 551.4,557.59 552.1,555.37 552.7,553.06 553.4,550.68 554.0,548.23 554.7,545.72 555.3,543.16 556.0,540.55 556.6,537.91 557.3,535.24 558.0,532.55 558.6,529.86 559.3,527.17 559.9,524.49 560.6,521.83 561.2,519.19 561.9,516.59 562.5,514.03 563.2,511.53 563.9,509.07 564.5,506.69 565.2,504.36 565.8,502.11 566.5,499.94 567.1,497.85 567.8,495.84 568.4,493.91 569.1,492.08 569.8,490.33 570.4,488.67 571.1,487.09 571.7,485.61 572.4,484.22 573.0,482.91 573.7,481.68 574.3,480.54 575.0,479.48 575.7,478.49 576.3,477.58 577.0,476.74 577.6,475.97 578.3,475.26 578.9,474.62 579.6,474.03 580.2,473.50 580.9,473.02 581.6,472.58 582.2,472.19 582.9,471.85 583.5,471.54 584.2,471.26 584.8,471.02 585.5,470.81 586.1,470.62 586.8,470.46 587.5,470.32 588.1,470.20 588.8,470.10 589.4,470.02 590.1,469.95 590.7,469.90 591.4,469.85 592.0,469.82 592.7,469.80 593.4,469.78 594.0,469.78 594.7,469.78 595.3,469.78 596.0,469.80 596.6,469.81 597.3,469.84 597.9,469.86 598.6,469.89 599.3,469.92 599.9,469.96 600.6,469.99 601.2,470.03 601.9,470.07 602.5,470.12 603.2,470.16 603.8,470.21 604.5,470.26 605.2,470.31 605.8,470.36 606.5,470.41 607.1,470.46 607.8,470.52 608.4,470.58 609.1,470.63 609.7,470.69 610.4,470.75 611.1,470.81 611.7,470.87 612.4,470.93 613.0,470.99 613.7,471.06 614.3,471.12 615.0,471.18 615.6,471.25 616.3,471.31 617.0,471.38 617.6,471.45 618.3,471.52 618.9,471.58 619.6,471.65 620.2,471.72 620.9,471.79 621.6,471.86 622.2,471.93 622.9,472.01 623.5,472.08 624.2,472.15 624.8,472.22 625.5,472.30 626.1,472.37 626.8,472.44 627.5,472.52 628.1,472.59 628.8,472.67 629.4,472.75 630.1,472.82 630.7,472.90 631.4,472.98 632.0,473.05 632.7,473.13 633.4,473.21 634.0,473.29 634.7,473.37 635.3,473.45 636.0,473.53 636.6,473.61 637.3,473.69 637.9,473.77 638.6,473.85 639.3,473.93 639.9,474.01 640.6,474.09 641.2,474.17 641.9,474.25 642.5,474.33 643.2,474.42 643.8,474.50 644.5,474.58 645.2,474.66 645.8,474.75 646.5,474.83 647.1,474.91 647.8,475.00 648.4,475.08 649.1,475.17 649.7,475.25 650.4,475.33 651.1,475.42 651.7,475.50 652.4,475.59 653.0,475.67 653.7,475.76 654.3,475.84 655.0,475.93 655.6,476.01 656.3,476.10 657.0,476.18 657.6,476.27 658.3,476.36 658.9,476.44 659.6,476.53 660.2,476.61 660.9,476.70 661.5,476.79 662.2,476.87 662.9,476.96 663.5,477.05 664.2,477.13 664.8,477.22 665.5,477.31 666.1,477.39 666.8,477.48 667.4,477.57 668.1,477.66 668.8,477.74 669.4,477.83 670.1,477.92 670.7,478.01 671.4,478.09 672.0,478.18 672.7,478.27 673.3,478.36 674.0,478.44 674.7,478.53 675.3,478.62 676.0,478.71 676.6,478.80 677.3,478.89 677.9,478.97 678.6,479.06 679.2,479.15 679.9,479.24 680.6,479.33 681.2,479.42 681.9,479.50 682.5,479.59 683.2,479.68 683.8,479.77 684.5,479.86 685.1,479.95 685.8,480.04 686.5,480.12 687.1,480.21 687.8,480.30 688.4,480.39 689.1,480.48 689.7,480.57 690.4,480.66 691.0,480.75 691.7,480.84 692.4,480.93 693.0,481.02 693.7,481.10 694.3,481.19 695.0,481.28 695.6,481.37 696.3,481.46 696.9,481.55 697.6,481.64 698.3,481.73 698.9,481.82 699.6,481.91 700.2,482.00 700.9,482.09 701.5,482.18 702.2,482.27 702.8,482.36 703.5,482.45 704.2,482.54 704.8,482.63 705.5,482.72 706.1,482.81 706.8,482.89 707.4,482.98 708.1,483.07 708.7,483.16 709.4,483.25 710.1,483.34 710.7,483.43 711.4,483.52 712.0,483.61 712.7,483.70 713.3,483.79 714.0,483.88 714.6,483.97 715.3,484.06 716.0,484.15 716.6,484.24 717.3,484.33 717.9,484.42 718.6,484.51 719.2,484.60 719.9,484.69 720.5,484.78 721.2,484.87 721.9,484.96 722.5,485.06 723.2,485.15 723.8,485.24 724.5,485.33 725.1,485.42 725.8,485.51 726.4,485.60 727.1,485.69 727.8,485.78 728.4,485.87 729.1,485.96 729.7,486.05 730.4,486.14 731.0,486.23 731.7,486.32 732.3,486.41 733.0,486.50 733.7,486.59 734.3,486.68 735.0,486.77 735.6,486.86 736.3,486.96 736.9,487.05 737.6,487.14 738.2,487.23 738.9,487.32 739.6,487.41 740.2,487.50 740.9,487.59 741.5,487.68 742.2,487.77 742.8,487.86 743.5,487.96 744.1,488.05 744.8,488.14 745.5,488.23 746.1,488.32 746.8,488.41 747.4,488.50 748.1,488.59 748.7,488.69 749.4,488.78 750.0,488.87 750.7,488.96 751.4,489.05 752.0,489.14 752.7,489.24 753.3,489.33 754.0,489.42 754.6,489.51 755.3,489.60 755.9,489.69 756.6,489.79 757.3,489.88 757.9,489.97 758.6,490.06 759.2,490.15 759.9,490.25 760.5,490.34 761.2,490.43 761.8,490.52 762.5,490.62 763.2,490.71 763.8,490.80 764.5,490.89 765.1,490.99 765.8,491.08 766.4,491.17 767.1,491.27 767.7,491.36 768.4,491.45 769.1,491.55 769.7,491.64 770.4,491.73 771.0,491.83 771.7,491.92 772.3,492.01 773.0,492.11 773.6,492.20 774.3,492.30 775.0,492.39 775.6,492.48 776.3,492.58 776.9,492.67 777.6,492.77 778.2,492.86 778.9,492.96 779.5,493.05 780.2,493.15 780.9,493.24 781.5,493.34 782.2,493.43 782.8,493.53 783.5,493.62 784.1,493.72 784.8,493.82 785.5,493.91 786.1,494.01 786.8,494.11 787.4,494.20 788.1,494.30 788.7,494.40 789.4,494.49 790.0,494.59 790.7,494.69 791.4,494.79 792.0,494.89 792.7,494.98 793.3,495.08 794.0,495.18 794.6,495.28 795.3,495.38 795.9,495.48 796.6,495.58 797.3,495.68 797.9,495.78 798.6,495.88 799.2,495.98 799.9,496.08 800.5,496.18 801.2,496.28 801.8,496.39 802.5,496.49 803.2,496.59 803.8,496.70 804.5,496.80 805.1,496.90 805.8,497.01 806.4,497.11 807.1,497.22 807.7,497.33 808.4,497.43 809.1,497.54 809.7,497.65 810.4,497.76 811.0,497.87 811.7,497.98 812.3,498.10 813.0,498.21 813.6,498.33 814.3,498.45 815.0,498.57 815.6,498.69 816.3,498.82 816.9,498.95 817.6,499.09 818.2,499.23 818.9,499.37 819.5,499.52 820.2,499.68 820.9,499.85 821.5,500.02 822.2,500.20 822.8,500.40 823.5,500.60 824.1,500.82 824.8,501.06 825.4,501.31 826.1,501.58 826.8,501.87 827.4,502.19 828.1,502.52 828.7,502.89 829.4,503.28 830.0,503.71 830.7,504.17 831.3,504.67 832.0,505.21 832.7,505.80 833.3,506.43 834.0,507.11 834.6,507.84 835.3,508.62 835.9,509.47 836.6,510.37 837.2,511.34 837.9,512.37 838.6,513.47 839.2,514.64 839.9,515.88 840.5,517.19 841.2,518.57 841.8,520.03 842.5,521.55 843.1,523.15 843.8,524.82 844.5,526.55 845.1,528.34 845.8,530.20 846.4,532.12 847.1,534.08 847.7,536.10 848.4,538.15 849.0,540.24 849.7,542.36 850.4,544.49 851.0,546.64 851.7,548.79 852.3,550.93 853.0,553.05 853.6,555.16 854.3,557.22 854.9,559.24 855.6,561.21 856.3,563.12 856.9,564.95 857.6,566.70 858.2,568.35 858.9,569.92 859.5,571.37 860.2,572.71 860.8,573.94 861.5,575.04 862.2,576.02 862.8,576.86 863.5,577.58 864.1,578.16 864.8,578.61" fill="none" stroke="#000" stroke-width="1.05"/><polyline points="567.5,578.89 568.1,578.65 568.8,578.33 569.4,577.92 570.1,577.42 570.7,576.81 571.4,576.10 572.1,575.29 572.7,574.36 573.4,573.32 574.0,572.17 574.7,570.91 575.3,569.54 576.0,568.06 576.6,566.48 577.3,564.78 578.0,562.99 578.6,561.11 579.3,559.13 579.9,557.07 580.6,554.93 581.2,552.72 581.9,550.44 582.5,548.11 583.2,545.73 583.9,543.31 584.5,540.86 585.2,538.38 585.8,535.89 586.5,533.39 587.1,530.89 587.8,528.40 588.4,525.93 589.1,523.48 589.8,521.07 590.4,518.70 591.1,516.37 591.7,514.10 592.4,511.88 593.0,509.72 593.7,507.64 594.3,505.62 595.0,503.68 595.7,501.81 596.3,500.03 597.0,498.32 597.6,496.70 598.3,495.16 598.9,493.70 599.6,492.32 600.2,491.03 600.9,489.82 601.6,488.68 602.2,487.62 602.9,486.64 603.5,485.72 604.2,484.88 604.8,484.10 605.5,483.39 606.1,482.73 606.8,482.13 607.5,481.59 608.1,481.10 608.8,480.65 609.4,480.25 610.1,479.89 610.7,479.57 611.4,479.28 612.0,479.03 612.7,478.81 613.4,478.61 614.0,478.44 614.7,478.29 615.3,478.16 616.0,478.05 616.6,477.96 617.3,477.89 617.9,477.82 618.6,477.78 619.3,477.74 619.9,477.71 620.6,477.69 621.2,477.68 621.9,477.67 622.5,477.67 623.2,477.68 623.8,477.69 624.5,477.71 625.2,477.73 625.8,477.76 626.5,477.79 627.1,477.82 627.8,477.85 628.4,477.89 629.1,477.92 629.7,477.96 630.4,478.01 631.1,478.05 631.7,478.09 632.4,478.14 633.0,478.19 633.7,478.24 634.3,478.29 635.0,478.34 635.6,478.39 636.3,478.44 637.0,478.50 637.6,478.55 638.3,478.61 638.9,478.67 639.6,478.72 640.2,478.78 640.9,478.84 641.5,478.90 642.2,478.96 642.9,479.02 643.5,479.08 644.2,479.15 644.8,479.21 645.5,479.27 646.1,479.34 646.8,479.40 647.4,479.47 648.1,479.53 648.8,479.60 649.4,479.67 650.1,479.73 650.7,479.80 651.4,479.87 652.0,479.94 652.7,480.01 653.3,480.08 654.0,480.15 654.7,480.22 655.3,480.29 656.0,480.36 656.6,480.43 657.3,480.50 657.9,480.58 658.6,480.65 659.2,480.72 659.9,480.79 660.6,480.87 661.2,480.94 661.9,481.02 662.5,481.09 663.2,481.17 663.8,481.24 664.5,481.32 665.1,481.39 665.8,481.47 666.5,481.54 667.1,481.62 667.8,481.70 668.4,481.77 669.1,481.85 669.7,481.93 670.4,482.01 671.0,482.08 671.7,482.16 672.4,482.24 673.0,482.32 673.7,482.40 674.3,482.47 675.0,482.55 675.6,482.63 676.3,482.71 676.9,482.79 677.6,482.87 678.3,482.95 678.9,483.03 679.6,483.11 680.2,483.19 680.9,483.27 681.5,483.35 682.2,483.43 682.8,483.51 683.5,483.59 684.2,483.67 684.8,483.75 685.5,483.83 686.1,483.92 686.8,484.00 687.4,484.08 688.1,484.16 688.7,484.24 689.4,484.32 690.1,484.40 690.7,484.49 691.4,484.57 692.0,484.65 692.7,484.73 693.3,484.81 694.0,484.90 694.6,484.98 695.3,485.06 696.0,485.14 696.6,485.23 697.3,485.31 697.9,485.39 698.6,485.48 699.2,485.56 699.9,485.64 700.5,485.72 701.2,485.81 701.9,485.89 702.5,485.97 703.2,486.06 703.8,486.14 704.5,486.22 705.1,486.31 705.8,486.39 706.5,486.47 707.1,486.56 707.8,486.64 708.4,486.72 709.1,486.81 709.7,486.89 710.4,486.98 711.0,487.06 711.7,487.14 712.4,487.23 713.0,487.31 713.7,487.40 714.3,487.48 715.0,487.56 715.6,487.65 716.3,487.73 716.9,487.82 717.6,487.90 718.3,487.99 718.9,488.07 719.6,488.15 720.2,488.24 720.9,488.32 721.5,488.41 722.2,488.49 722.8,488.58 723.5,488.66 724.2,488.75 724.8,488.83 725.5,488.92 726.1,489.00 726.8,489.09 727.4,489.17 728.1,489.26 728.7,489.34 729.4,489.42 730.1,489.51 730.7,489.59 731.4,489.68 732.0,489.77 732.7,489.85 733.3,489.94 734.0,490.02 734.6,490.11 735.3,490.19 736.0,490.28 736.6,490.36 737.3,490.45 737.9,490.53 738.6,490.62 739.2,490.70 739.9,490.79 740.5,490.87 741.2,490.96 741.9,491.05 742.5,491.13 743.2,491.22 743.8,491.30 744.5,491.39 745.1,491.47 745.8,491.56 746.4,491.65 747.1,491.73 747.8,491.82 748.4,491.90 749.1,491.99 749.7,492.08 750.4,492.16 751.0,492.25 751.7,492.34 752.3,492.42 753.0,492.51 753.7,492.59 754.3,492.68 755.0,492.77 755.6,492.85 756.3,492.94 756.9,493.03 757.6,493.11 758.2,493.20 758.9,493.29 759.6,493.37 760.2,493.46 760.9,493.55 761.5,493.64 762.2,493.72 762.8,493.81 763.5,493.90 764.1,493.99 764.8,494.07 765.5,494.16 766.1,494.25 766.8,494.34 767.4,494.42 768.1,494.51 768.7,494.60 769.4,494.69 770.0,494.78 770.7,494.86 771.4,494.95 772.0,495.04 772.7,495.13 773.3,495.22 774.0,495.31 774.6,495.39 775.3,495.48 775.9,495.57 776.6,495.66 777.3,495.75 777.9,495.84 778.6,495.93 779.2,496.02 779.9,496.11 780.5,496.20 781.2,496.29 781.8,496.38 782.5,496.47 783.2,496.56 783.8,496.65 784.5,496.74 785.1,496.83 785.8,496.92 786.4,497.01 787.1,497.11 787.7,497.20 788.4,497.29 789.1,497.38 789.7,497.47 790.4,497.56 791.0,497.66 791.7,497.75 792.3,497.84 793.0,497.94 793.6,498.03 794.3,498.12 795.0,498.22 795.6,498.31 796.3,498.40 796.9,498.50 797.6,498.59 798.2,498.69 798.9,498.78 799.5,498.88 800.2,498.97 800.9,499.07 801.5,499.17 802.2,499.26 802.8,499.36 803.5,499.46 804.1,499.56 804.8,499.65 805.4,499.75 806.1,499.85 806.8,499.95 807.4,500.05 808.1,500.15 808.7,500.26 809.4,500.36 810.0,500.46 810.7,500.57 811.3,500.67 812.0,500.78 812.7,500.89 813.3,501.00 814.0,501.11 814.6,501.23 815.3,501.34 815.9,501.46 816.6,501.59 817.2,501.71 817.9,501.84 818.6,501.98 819.2,502.12 819.9,502.27 820.5,502.42 821.2,502.58 821.8,502.75 822.5,502.93 823.1,503.12 823.8,503.33 824.5,503.54 825.1,503.78 825.8,504.03 826.4,504.30 827.1,504.59 827.7,504.90 828.4,505.24 829.0,505.60 829.7,506.00 830.4,506.42 831.0,506.89 831.7,507.39 832.3,507.93 833.0,508.51 833.6,509.14 834.3,509.82 834.9,510.56 835.6,511.34 836.3,512.19 836.9,513.09 837.6,514.05 838.2,515.08 838.9,516.18 839.5,517.34 840.2,518.57 840.8,519.87 841.5,521.24 842.2,522.68 842.8,524.19 843.5,525.77 844.1,527.41 844.8,529.12 845.4,530.88 846.1,532.71 846.7,534.59 847.4,536.51 848.1,538.48 848.7,540.48 849.4,542.52 850.0,544.57 850.7,546.65 851.3,548.72 852.0,550.80 852.6,552.87 853.3,554.91 854.0,556.93 854.6,558.91 855.3,560.84 855.9,562.72 856.6,564.52 857.2,566.26 857.9,567.91 858.5,569.47 859.2,570.93 859.9,572.28 860.5,573.53 861.2,574.65 861.8,575.66 862.5,576.54 863.1,577.30 863.8,577.92 864.4,578.42" fill="none" stroke="#000" stroke-width="1.05"/><polyline points="539.6,578.89 540.3,578.64 540.9,578.32 541.6,577.90 542.2,577.39 542.9,576.77 543.5,576.05 544.2,575.22 544.8,574.28 545.5,573.23 546.2,572.06 546.8,570.78 547.5,569.39 548.1,567.89 548.8,566.28 549.4,564.56 550.1,562.74 550.7,560.82 551.4,558.81 552.1,556.72 552.7,554.55 553.4,552.30 554.0,549.99 554.7,547.62 555.3,545.20 556.0,542.74 556.6,540.24 557.3,537.72 558.0,535.19 558.6,532.65 559.3,530.11 559.9,527.58 560.6,525.07 561.2,522.58 561.9,520.13 562.5,517.71 563.2,515.34 563.9,513.03 564.5,510.77 565.2,508.58 565.8,506.46 566.5,504.41 567.1,502.43 567.8,500.53 568.4,498.72 569.1,496.98 569.8,495.33 570.4,493.76 571.1,492.27 571.7,490.87 572.4,489.56 573.0,488.32 573.7,487.16 574.3,486.08 575.0,485.08 575.7,484.14 576.3,483.28 577.0,482.49 577.6,481.76 578.3,481.09 578.9,480.48 579.6,479.93 580.2,479.42 580.9,478.96 581.6,478.55 582.2,478.18 582.9,477.85 583.5,477.56 584.2,477.30 584.8,477.07 585.5,476.87 586.1,476.69 586.8,476.54 587.5,476.40 588.1,476.29 588.8,476.19 589.4,476.11 590.1,476.05 590.7,475.99 591.4,475.95 592.0,475.92 592.7,475.90 593.4,475.88 594.0,475.87 594.7,475.87 595.3,475.88 596.0,475.89 596.6,475.90 597.3,475.92 597.9,475.94 598.6,475.97 599.3,475.99 599.9,476.02 600.6,476.06 601.2,476.09 601.9,476.13 602.5,476.17 603.2,476.21 603.8,476.25 604.5,476.30 605.2,476.34 605.8,476.39 606.5,476.44 607.1,476.49 607.8,476.54 608.4,476.59 609.1,476.64 609.7,476.69 610.4,476.75 611.1,476.80 611.7,476.86 612.4,476.91 613.0,476.97 613.7,477.03 614.3,477.09 615.0,477.14 615.6,477.20 616.3,477.26 617.0,477.33 617.6,477.39 618.3,477.45 618.9,477.51 619.6,477.58 620.2,477.64 620.9,477.70 621.6,477.77 622.2,477.83 622.9,477.90 623.5,477.97 624.2,478.03 624.8,478.10 625.5,478.17 626.1,478.24 626.8,478.30 627.5,478.37 628.1,478.44 628.8,478.51 629.4,478.58 630.1,478.65 630.7,478.72 631.4,478.79 632.0,478.87 632.7,478.94 633.4,479.01 634.0,479.08 634.7,479.15 635.3,479.23 636.0,479.30 636.6,479.37 637.3,479.45 637.9,479.52 638.6,479.60 639.3,479.67 639.9,479.75 640.6,479.82 641.2,479.90 641.9,479.97 642.5,480.05 643.2,480.12 643.8,480.20 644.5,480.27 645.2,480.35 645.8,480.43 646.5,480.50 647.1,480.58 647.8,480.66 648.4,480.74 649.1,480.81 649.7,480.89 650.4,480.97 651.1,481.05 651.7,481.13 652.4,481.20 653.0,481.28 653.7,481.36 654.3,481.44 655.0,481.52 655.6,481.60 656.3,481.68 657.0,481.76 657.6,481.83 658.3,481.91 658.9,481.99 659.6,482.07 660.2,482.15 660.9,482.23 661.5,482.31 662.2,482.39 662.9,482.47 663.5,482.55 664.2,482.63 664.8,482.71 665.5,482.79 666.1,482.87 666.8,482.96 667.4,483.04 668.1,483.12 668.8,483.20 669.4,483.28 670.1,483.36 670.7,483.44 671.4,483.52 672.0,483.60 672.7,483.68 673.3,483.77 674.0,483.85 674.7,483.93 675.3,484.01 676.0,484.09 676.6,484.17 677.3,484.26 677.9,484.34 678.6,484.42 679.2,484.50 679.9,484.58 680.6,484.66 681.2,484.75 681.9,484.83 682.5,484.91 683.2,484.99 683.8,485.08 684.5,485.16 685.1,485.24 685.8,485.32 686.5,485.40 687.1,485.49 687.8,485.57 688.4,485.65 689.1,485.73 689.7,485.82 690.4,485.90 691.0,485.98 691.7,486.07 692.4,486.15 693.0,486.23 693.7,486.31 694.3,486.40 695.0,486.48 695.6,486.56 696.3,486.65 696.9,486.73 697.6,486.81 698.3,486.90 698.9,486.98 699.6,487.06 700.2,487.14 700.9,487.23 701.5,487.31 702.2,487.39 702.8,487.48 703.5,487.56 704.2,487.65 704.8,487.73 705.5,487.81 706.1,487.90 706.8,487.98 707.4,488.06 708.1,488.15 708.7,488.23 709.4,488.31 710.1,488.40 710.7,488.48 711.4,488.57 712.0,488.65 712.7,488.73 713.3,488.82 714.0,488.90 714.6,488.99 715.3,489.07 716.0,489.15 716.6,489.24 717.3,489.32 717.9,489.41 718.6,489.49 719.2,489.58 719.9,489.66 720.5,489.75 721.2,489.83 721.9,489.91 722.5,490.00 723.2,490.08 723.8,490.17 724.5,490.25 725.1,490.34 725.8,490.42 726.4,490.51 727.1,490.59 727.8,490.68 728.4,490.76 729.1,490.85 729.7,490.93 730.4,491.02 731.0,491.11 731.7,491.19 732.3,491.28 733.0,491.36 733.7,491.45 734.3,491.53 735.0,491.62 735.6,491.71 736.3,491.79 736.9,491.88 737.6,491.96 738.2,492.05 738.9,492.14 739.6,492.22 740.2,492.31 740.9,492.40 741.5,492.48 742.2,492.57 742.8,492.66 743.5,492.74 744.1,492.83 744.8,492.92 745.5,493.01 746.1,493.09 746.8,493.18 747.4,493.27 748.1,493.36 748.7,493.45 749.4,493.53 750.0,493.62 750.7,493.71 751.4,493.80 752.0,493.89 752.7,493.98 753.3,494.06 754.0,494.15 754.6,494.24 755.3,494.33 755.9,494.42 756.6,494.51 757.3,494.60 757.9,494.69 758.6,494.78 759.2,494.87 759.9,494.96 760.5,495.05 761.2,495.15 761.8,495.24 762.5,495.33 763.2,495.42 763.8,495.51 764.5,495.60 765.1,495.70 765.8,495.79 766.4,495.88 767.1,495.98 767.7,496.07 768.4,496.16 769.1,496.26 769.7,496.35 770.4,496.45 771.0,496.54 771.7,496.64 772.3,496.73 773.0,496.83 773.6,496.93 774.3,497.02 775.0,497.12 775.6,497.22 776.3,497.32 776.9,497.42 777.6,497.52 778.2,497.62 778.9,497.72 779.5,497.82 780.2,497.92 780.9,498.03 781.5,498.13 782.2,498.24 782.8,498.35 783.5,498.46 784.1,498.57 784.8,498.69 785.5,498.81 786.1,498.93 786.8,499.06 787.4,499.19 788.1,499.32 788.7,499.46 789.4,499.60 790.0,499.76 790.7,499.92 791.4,500.09 792.0,500.27 792.7,500.46 793.3,500.66 794.0,500.88 794.6,501.11 795.3,501.36 795.9,501.63 796.6,501.92 797.3,502.23 797.9,502.57 798.6,502.93 799.2,503.33 799.9,503.76 800.5,504.23 801.2,504.73 801.8,505.27 802.5,505.86 803.2,506.50 803.8,507.19 804.5,507.93 805.1,508.72 805.8,509.58 806.4,510.49 807.1,511.47 807.7,512.52 808.4,513.63 809.1,514.81 809.7,516.07 810.4,517.39 811.0,518.79 811.7,520.26 812.3,521.80 813.0,523.41 813.6,525.10 814.3,526.85 815.0,528.66 815.6,530.53 816.3,532.46 816.9,534.44 817.6,536.47 818.2,538.54 818.9,540.63 819.5,542.76 820.2,544.90 820.9,547.06 821.5,549.21 822.2,551.35 822.8,553.48 823.5,555.58 824.1,557.64 824.8,559.66 825.4,561.62 826.1,563.51 826.8,565.33 827.4,567.06 828.1,568.70 828.7,570.25 829.4,571.68 830.0,573.00 830.7,574.20 831.3,575.28 832.0,576.22 832.7,577.04 833.3,577.72 834.0,578.28 834.6,578.70" fill="none" stroke="#000" stroke-width="1.16"/><polyline points="567.5,578.90 568.1,578.67 568.8,578.37 569.4,577.97 570.1,577.48 570.7,576.90 571.4,576.22 572.1,575.43 572.7,574.54 573.4,573.55 574.0,572.44 574.7,571.23 575.3,569.91 576.0,568.49 576.6,566.96 577.3,565.33 578.0,563.61 578.6,561.79 579.3,559.89 579.9,557.91 580.6,555.85 581.2,553.72 581.9,551.53 582.5,549.29 583.2,547.00 583.9,544.67 584.5,542.31 585.2,539.92 585.8,537.52 586.5,535.12 587.1,532.71 587.8,530.32 588.4,527.94 589.1,525.59 589.8,523.26 590.4,520.98 591.1,518.74 591.7,516.55 592.4,514.41 593.0,512.34 593.7,510.33 594.3,508.38 595.0,506.51 595.7,504.72 596.3,503.00 597.0,501.35 597.6,499.79 598.3,498.31 598.9,496.90 599.6,495.58 600.2,494.33 600.9,493.16 601.6,492.06 602.2,491.04 602.9,490.09 603.5,489.21 604.2,488.40 604.8,487.65 605.5,486.96 606.1,486.32 606.8,485.75 607.5,485.22 608.1,484.75 608.8,484.32 609.4,483.93 610.1,483.58 610.7,483.27 611.4,482.99 612.0,482.74 612.7,482.53 613.4,482.34 614.0,482.17 614.7,482.03 615.3,481.90 616.0,481.79 616.6,481.70 617.3,481.63 617.9,481.57 618.6,481.52 619.3,481.48 619.9,481.45 620.6,481.43 621.2,481.42 621.9,481.41 622.5,481.41 623.2,481.41 623.8,481.43 624.5,481.44 625.2,481.46 625.8,481.48 626.5,481.50 627.1,481.53 627.8,481.56 628.4,481.60 629.1,481.63 629.7,481.67 630.4,481.71 631.1,481.75 631.7,481.79 632.4,481.83 633.0,481.87 633.7,481.92 634.3,481.96 635.0,482.01 635.6,482.06 636.3,482.11 637.0,482.16 637.6,482.21 638.3,482.26 638.9,482.32 639.6,482.37 640.2,482.42 640.9,482.48 641.5,482.53 642.2,482.59 642.9,482.65 643.5,482.71 644.2,482.76 644.8,482.82 645.5,482.88 646.1,482.94 646.8,483.00 647.4,483.06 648.1,483.12 648.8,483.19 649.4,483.25 650.1,483.31 650.7,483.38 651.4,483.44 652.0,483.50 652.7,483.57 653.3,483.63 654.0,483.70 654.7,483.77 655.3,483.83 656.0,483.90 656.6,483.97 657.3,484.03 657.9,484.10 658.6,484.17 659.2,484.24 659.9,484.31 660.6,484.38 661.2,484.44 661.9,484.51 662.5,484.58 663.2,484.65 663.8,484.72 664.5,484.80 665.1,484.87 665.8,484.94 666.5,485.01 667.1,485.08 667.8,485.15 668.4,485.23 669.1,485.30 669.7,485.37 670.4,485.44 671.0,485.52 671.7,485.59 672.4,485.66 673.0,485.74 673.7,485.81 674.3,485.88 675.0,485.96 675.6,486.03 676.3,486.11 676.9,486.18 677.6,486.26 678.3,486.33 678.9,486.41 679.6,486.48 680.2,486.56 680.9,486.63 681.5,486.71 682.2,486.78 682.8,486.86 683.5,486.94 684.2,487.01 684.8,487.09 685.5,487.16 686.1,487.24 686.8,487.32 687.4,487.39 688.1,487.47 688.7,487.55 689.4,487.62 690.1,487.70 690.7,487.78 691.4,487.86 692.0,487.93 692.7,488.01 693.3,488.09 694.0,488.17 694.6,488.24 695.3,488.32 696.0,488.40 696.6,488.48 697.3,488.56 697.9,488.63 698.6,488.71 699.2,488.79 699.9,488.87 700.5,488.95 701.2,489.03 701.9,489.11 702.5,489.18 703.2,489.26 703.8,489.34 704.5,489.42 705.1,489.50 705.8,489.58 706.5,489.66 707.1,489.74 707.8,489.82 708.4,489.90 709.1,489.98 709.7,490.05 710.4,490.13 711.0,490.21 711.7,490.29 712.4,490.37 713.0,490.45 713.7,490.53 714.3,490.61 715.0,490.69 715.6,490.77 716.3,490.85 716.9,490.93 717.6,491.01 718.3,491.09 718.9,491.17 719.6,491.25 720.2,491.33 720.9,491.42 721.5,491.50 722.2,491.58 722.8,491.66 723.5,491.74 724.2,491.82 724.8,491.90 725.5,491.98 726.1,492.06 726.8,492.14 727.4,492.22 728.1,492.31 728.7,492.39 729.4,492.47 730.1,492.55 730.7,492.63 731.4,492.71 732.0,492.80 732.7,492.88 733.3,492.96 734.0,493.04 734.6,493.12 735.3,493.21 736.0,493.29 736.6,493.37 737.3,493.45 737.9,493.53 738.6,493.62 739.2,493.70 739.9,493.78 740.5,493.87 741.2,493.95 741.9,494.03 742.5,494.12 743.2,494.20 743.8,494.28 744.5,494.37 745.1,494.45 745.8,494.53 746.4,494.62 747.1,494.70 747.8,494.79 748.4,494.87 749.1,494.95 749.7,495.04 750.4,495.12 751.0,495.21 751.7,495.29 752.3,495.38 753.0,495.46 753.7,495.55 754.3,495.63 755.0,495.72 755.6,495.81 756.3,495.89 756.9,495.98 757.6,496.06 758.2,496.15 758.9,496.24 759.6,496.33 760.2,496.41 760.9,496.50 761.5,496.59 762.2,496.68 762.8,496.76 763.5,496.85 764.1,496.94 764.8,497.03 765.5,497.12 766.1,497.21 766.8,497.30 767.4,497.39 768.1,497.48 768.7,497.57 769.4,497.66 770.0,497.75 770.7,497.84 771.4,497.93 772.0,498.02 772.7,498.12 773.3,498.21 774.0,498.30 774.6,498.39 775.3,498.49 775.9,498.58 776.6,498.68 777.3,498.77 777.9,498.87 778.6,498.97 779.2,499.07 779.9,499.17 780.5,499.27 781.2,499.37 781.8,499.47 782.5,499.57 783.2,499.68 783.8,499.79 784.5,499.90 785.1,500.01 785.8,500.13 786.4,500.25 787.1,500.37 787.7,500.50 788.4,500.63 789.1,500.77 789.7,500.91 790.4,501.07 791.0,501.23 791.7,501.39 792.3,501.57 793.0,501.77 793.6,501.97 794.3,502.19 795.0,502.42 795.6,502.68 796.3,502.95 796.9,503.24 797.6,503.56 798.2,503.91 798.9,504.28 799.5,504.68 800.2,505.12 800.9,505.60 801.5,506.11 802.2,506.67 802.8,507.27 803.5,507.92 804.1,508.62 804.8,509.37 805.4,510.18 806.1,511.05 806.8,511.98 807.4,512.98 808.1,514.04 808.7,515.17 809.4,516.37 810.0,517.64 810.7,518.98 811.3,520.39 812.0,521.87 812.7,523.42 813.3,525.05 814.0,526.73 814.6,528.49 815.3,530.30 815.9,532.18 816.6,534.10 817.2,536.08 817.9,538.10 818.6,540.15 819.2,542.23 819.9,544.33 820.5,546.45 821.2,548.57 821.8,550.69 822.5,552.80 823.1,554.88 823.8,556.93 824.5,558.95 825.1,560.91 825.8,562.81 826.4,564.64 827.1,566.39 827.7,568.05 828.4,569.62 829.0,571.09 829.7,572.45 830.4,573.69 831.0,574.82 831.7,575.81 832.3,576.68 833.0,577.42 833.6,578.03 834.3,578.51" fill="none" stroke="#000" stroke-width="1.16"/><polyline points="541.2,578.90 541.9,578.67 542.6,578.36 543.2,577.96 543.9,577.47 544.5,576.88 545.2,576.19 545.8,575.40 546.5,574.50 547.1,573.49 547.8,572.37 548.5,571.15 549.1,569.81 549.8,568.37 550.4,566.83 551.1,565.19 551.7,563.45 552.4,561.61 553.0,559.69 553.7,557.69 554.4,555.61 555.0,553.45 555.7,551.24 556.3,548.97 557.0,546.66 557.6,544.30 558.3,541.91 558.9,539.50 559.6,537.08 560.3,534.64 560.9,532.21 561.6,529.79 562.2,527.38 562.9,525.00 563.5,522.65 564.2,520.34 564.8,518.07 565.5,515.86 566.2,513.70 566.8,511.60 567.5,509.56 568.1,507.60 568.8,505.71 569.4,503.89 570.1,502.15 570.7,500.48 571.4,498.90 572.1,497.40 572.7,495.98 573.4,494.63 574.0,493.37 574.7,492.18 575.3,491.07 576.0,490.04 576.6,489.08 577.3,488.18 578.0,487.36 578.6,486.60 579.3,485.90 579.9,485.25 580.6,484.67 581.2,484.13 581.9,483.65 582.5,483.21 583.2,482.82 583.9,482.46 584.5,482.14 585.2,481.86 585.8,481.61 586.5,481.39 587.1,481.19 587.8,481.02 588.4,480.87 589.1,480.74 589.8,480.63 590.4,480.54 591.1,480.46 591.7,480.40 592.4,480.34 593.0,480.30 593.7,480.27 594.3,480.24 595.0,480.23 595.7,480.22 596.3,480.22 597.0,480.22 597.6,480.23 598.3,480.24 598.9,480.26 599.6,480.27 600.2,480.30 600.9,480.32 601.6,480.35 602.2,480.38 602.9,480.41 603.5,480.45 604.2,480.48 604.8,480.52 605.5,480.56 606.1,480.60 606.8,480.64 607.5,480.69 608.1,480.73 608.8,480.78 609.4,480.82 610.1,480.87 610.7,480.92 611.4,480.97 612.0,481.02 612.7,481.07 613.4,481.12 614.0,481.17 614.7,481.22 615.3,481.28 616.0,481.33 616.6,481.39 617.3,481.44 617.9,481.50 618.6,481.56 619.3,481.61 619.9,481.67 620.6,481.73 621.2,481.79 621.9,481.85 622.5,481.91 623.2,481.97 623.8,482.03 624.5,482.09 625.2,482.15 625.8,482.21 626.5,482.28 627.1,482.34 627.8,482.40 628.4,482.47 629.1,482.53 629.7,482.60 630.4,482.66 631.1,482.73 631.7,482.79 632.4,482.86 633.0,482.93 633.7,482.99 634.3,483.06 635.0,483.13 635.6,483.20 636.3,483.26 637.0,483.33 637.6,483.40 638.3,483.47 638.9,483.54 639.6,483.61 640.2,483.68 640.9,483.75 641.5,483.82 642.2,483.89 642.9,483.96 643.5,484.03 644.2,484.10 644.8,484.17 645.5,484.24 646.1,484.31 646.8,484.38 647.4,484.46 648.1,484.53 648.8,484.60 649.4,484.67 650.1,484.74 650.7,484.82 651.4,484.89 652.0,484.96 652.7,485.04 653.3,485.11 654.0,485.18 654.7,485.26 655.3,485.33 656.0,485.40 656.6,485.48 657.3,485.55 657.9,485.62 658.6,485.70 659.2,485.77 659.9,485.85 660.6,485.92 661.2,486.00 661.9,486.07 662.5,486.15 663.2,486.22 663.8,486.30 664.5,486.37 665.1,486.45 665.8,486.52 666.5,486.60 667.1,486.67 667.8,486.75 668.4,486.82 669.1,486.90 669.7,486.97 670.4,487.05 671.0,487.13 671.7,487.20 672.4,487.28 673.0,487.35 673.7,487.43 674.3,487.51 675.0,487.58 675.6,487.66 676.3,487.73 676.9,487.81 677.6,487.89 678.3,487.96 678.9,488.04 679.6,488.12 680.2,488.19 680.9,488.27 681.5,488.35 682.2,488.42 682.8,488.50 683.5,488.58 684.2,488.65 684.8,488.73 685.5,488.81 686.1,488.88 686.8,488.96 687.4,489.04 688.1,489.11 688.7,489.19 689.4,489.27 690.1,489.35 690.7,489.42 691.4,489.50 692.0,489.58 692.7,489.66 693.3,489.73 694.0,489.81 694.6,489.89 695.3,489.96 696.0,490.04 696.6,490.12 697.3,490.20 697.9,490.27 698.6,490.35 699.2,490.43 699.9,490.51 700.5,490.59 701.2,490.66 701.9,490.74 702.5,490.82 703.2,490.90 703.8,490.97 704.5,491.05 705.1,491.13 705.8,491.21 706.5,491.28 707.1,491.36 707.8,491.44 708.4,491.52 709.1,491.60 709.7,491.67 710.4,491.75 711.0,491.83 711.7,491.91 712.4,491.99 713.0,492.06 713.7,492.14 714.3,492.22 715.0,492.30 715.6,492.38 716.3,492.45 716.9,492.53 717.6,492.61 718.3,492.69 718.9,492.77 719.6,492.85 720.2,492.92 720.9,493.00 721.5,493.08 722.2,493.16 722.8,493.24 723.5,493.32 724.2,493.39 724.8,493.47 725.5,493.55 726.1,493.63 726.8,493.71 727.4,493.79 728.1,493.86 728.7,493.94 729.4,494.02 730.1,494.10 730.7,494.18 731.4,494.26 732.0,494.34 732.7,494.42 733.3,494.49 734.0,494.57 734.6,494.65 735.3,494.73 736.0,494.81 736.6,494.89 737.3,494.97 737.9,495.05 738.6,495.12 739.2,495.20 739.9,495.28 740.5,495.36 741.2,495.44 741.9,495.52 742.5,495.60 743.2,495.68 743.8,495.76 744.5,495.84 745.1,495.91 745.8,495.99 746.4,496.07 747.1,496.15 747.8,496.23 748.4,496.31 749.1,496.39 749.7,496.47 750.4,496.55 751.0,496.63 751.7,496.71 752.3,496.79 753.0,496.87 753.7,496.95 754.3,497.03 755.0,497.11 755.6,497.19 756.3,497.27 756.9,497.35 757.6,497.43 758.2,497.51 758.9,497.59 759.6,497.67 760.2,497.75 760.9,497.83 761.5,497.91 762.2,497.99 762.8,498.07 763.5,498.15 764.1,498.23 764.8,498.31 765.5,498.39 766.1,498.47 766.8,498.55 767.4,498.63 768.1,498.71 768.7,498.80 769.4,498.88 770.0,498.96 770.7,499.04 771.4,499.12 772.0,499.20 772.7,499.28 773.3,499.37 774.0,499.45 774.6,499.53 775.3,499.61 775.9,499.69 776.6,499.78 777.3,499.86 777.9,499.94 778.6,500.02 779.2,500.11 779.9,500.19 780.5,500.27 781.2,500.35 781.8,500.44 782.5,500.52 783.2,500.60 783.8,500.69 784.5,500.77 785.1,500.85 785.8,500.94 786.4,501.02 787.1,501.11 787.7,501.19 788.4,501.28 789.1,501.36 789.7,501.45 790.4,501.53 791.0,501.62 791.7,501.70 792.3,501.79 793.0,501.87 793.6,501.96 794.3,502.05 795.0,502.13 795.6,502.22 796.3,502.31 796.9,502.39 797.6,502.48 798.2,502.57 798.9,502.66 799.5,502.74 800.2,502.83 800.9,502.92 801.5,503.01 802.2,503.10 802.8,503.19 803.5,503.28 804.1,503.37 804.8,503.46 805.4,503.55 806.1,503.65 806.8,503.74 807.4,503.83 808.1,503.92 808.7,504.02 809.4,504.11 810.0,504.21 810.7,504.31 811.3,504.40 812.0,504.50 812.7,504.60 813.3,504.71 814.0,504.81 814.6,504.92 815.3,505.03 815.9,505.14 816.6,505.25 817.2,505.37 817.9,505.49 818.6,505.62 819.2,505.75 819.9,505.89 820.5,506.03 821.2,506.18 821.8,506.34 822.5,506.51 823.1,506.69 823.8,506.88 824.5,507.09 825.1,507.31 825.8,507.54 826.4,507.79 827.1,508.07 827.7,508.36 828.4,508.68 829.0,509.03 829.7,509.40 830.4,509.81 831.0,510.25 831.7,510.72 832.3,511.23 833.0,511.79 833.6,512.39 834.3,513.03 834.9,513.73 835.6,514.48 836.3,515.28 836.9,516.14 837.6,517.05 838.2,518.03 838.9,519.08 839.5,520.18 840.2,521.36 840.8,522.59 841.5,523.90 842.2,525.27 842.8,526.71 843.5,528.21 844.1,529.78 844.8,531.40 845.4,533.09 846.1,534.83 846.7,536.62 847.4,538.45 848.1,540.33 848.7,542.24 849.4,544.18 850.0,546.14 850.7,548.12 851.3,550.10 852.0,552.08 852.6,554.06 853.3,556.01 854.0,557.94 854.6,559.82 855.3,561.67 855.9,563.46 856.6,565.18 857.2,566.84 857.9,568.42 858.5,569.90 859.2,571.30 859.9,572.59 860.5,573.78 861.2,574.86 861.8,575.82 862.5,576.66 863.1,577.38 863.8,577.98 864.4,578.46" fill="none" stroke="#000" stroke-width="1.05"/><polyline points="569.1,578.91 569.8,578.69 570.4,578.40 571.1,578.02 571.7,577.55 572.4,576.99 573.0,576.33 573.7,575.57 574.3,574.71 575.0,573.75 575.7,572.69 576.3,571.52 577.0,570.25 577.6,568.87 578.3,567.40 578.9,565.83 579.6,564.17 580.2,562.43 580.9,560.59 581.6,558.68 582.2,556.70 582.9,554.65 583.5,552.54 584.2,550.37 584.8,548.16 585.5,545.92 586.1,543.64 586.8,541.34 587.5,539.03 588.1,536.71 588.8,534.39 589.4,532.09 590.1,529.79 590.7,527.52 591.4,525.28 592.0,523.08 592.7,520.92 593.4,518.81 594.0,516.75 594.7,514.75 595.3,512.81 596.0,510.94 596.6,509.14 597.3,507.40 597.9,505.75 598.6,504.16 599.3,502.66 599.9,501.22 600.6,499.87 601.2,498.59 601.9,497.39 602.5,496.26 603.2,495.20 603.8,494.22 604.5,493.30 605.2,492.45 605.8,491.67 606.5,490.94 607.1,490.28 607.8,489.67 608.4,489.11 609.1,488.61 609.7,488.15 610.4,487.73 611.1,487.36 611.7,487.02 612.4,486.72 613.0,486.45 613.7,486.21 614.3,486.00 615.0,485.82 615.6,485.66 616.3,485.52 617.0,485.40 617.6,485.29 618.3,485.21 618.9,485.13 619.6,485.07 620.2,485.03 620.9,484.99 621.6,484.96 622.2,484.94 622.9,484.92 623.5,484.92 624.2,484.92 624.8,484.92 625.5,484.93 626.1,484.95 626.8,484.96 627.5,484.98 628.1,485.01 628.8,485.03 629.4,485.06 630.1,485.09 630.7,485.13 631.4,485.16 632.0,485.20 632.7,485.23 633.4,485.27 634.0,485.31 634.7,485.36 635.3,485.40 636.0,485.44 636.6,485.49 637.3,485.54 637.9,485.58 638.6,485.63 639.3,485.68 639.9,485.73 640.6,485.78 641.2,485.83 641.9,485.88 642.5,485.93 643.2,485.99 643.8,486.04 644.5,486.10 645.2,486.15 645.8,486.21 646.5,486.26 647.1,486.32 647.8,486.38 648.4,486.43 649.1,486.49 649.7,486.55 650.4,486.61 651.1,486.67 651.7,486.73 652.4,486.79 653.0,486.85 653.7,486.91 654.3,486.98 655.0,487.04 655.6,487.10 656.3,487.16 657.0,487.23 657.6,487.29 658.3,487.35 658.9,487.42 659.6,487.48 660.2,487.55 660.9,487.61 661.5,487.68 662.2,487.75 662.9,487.81 663.5,487.88 664.2,487.95 664.8,488.01 665.5,488.08 666.1,488.15 666.8,488.22 667.4,488.28 668.1,488.35 668.8,488.42 669.4,488.49 670.1,488.56 670.7,488.63 671.4,488.70 672.0,488.77 672.7,488.84 673.3,488.91 674.0,488.98 674.7,489.05 675.3,489.12 676.0,489.19 676.6,489.26 677.3,489.33 677.9,489.40 678.6,489.47 679.2,489.55 679.9,489.62 680.6,489.69 681.2,489.76 681.9,489.83 682.5,489.91 683.2,489.98 683.8,490.05 684.5,490.12 685.1,490.20 685.8,490.27 686.5,490.34 687.1,490.42 687.8,490.49 688.4,490.56 689.1,490.64 689.7,490.71 690.4,490.78 691.0,490.86 691.7,490.93 692.4,491.00 693.0,491.08 693.7,491.15 694.3,491.23 695.0,491.30 695.6,491.38 696.3,491.45 696.9,491.52 697.6,491.60 698.3,491.67 698.9,491.75 699.6,491.82 700.2,491.90 700.9,491.97 701.5,492.05 702.2,492.12 702.8,492.20 703.5,492.28 704.2,492.35 704.8,492.43 705.5,492.50 706.1,492.58 706.8,492.65 707.4,492.73 708.1,492.80 708.7,492.88 709.4,492.96 710.1,493.03 710.7,493.11 711.4,493.18 712.0,493.26 712.7,493.34 713.3,493.41 714.0,493.49 714.6,493.57 715.3,493.64 716.0,493.72 716.6,493.80 717.3,493.87 717.9,493.95 718.6,494.03 719.2,494.10 719.9,494.18 720.5,494.26 721.2,494.33 721.9,494.41 722.5,494.49 723.2,494.57 723.8,494.64 724.5,494.72 725.1,494.80 725.8,494.88 726.4,494.95 727.1,495.03 727.8,495.11 728.4,495.19 729.1,495.26 729.7,495.34 730.4,495.42 731.0,495.50 731.7,495.58 732.3,495.66 733.0,495.73 733.7,495.81 734.3,495.89 735.0,495.97 735.6,496.05 736.3,496.13 736.9,496.21 737.6,496.29 738.2,496.36 738.9,496.44 739.6,496.52 740.2,496.60 740.9,496.68 741.5,496.76 742.2,496.84 742.8,496.92 743.5,497.00 744.1,497.08 744.8,497.16 745.5,497.24 746.1,497.32 746.8,497.40 747.4,497.48 748.1,497.56 748.7,497.64 749.4,497.72 750.0,497.81 750.7,497.89 751.4,497.97 752.0,498.05 752.7,498.13 753.3,498.21 754.0,498.29 754.6,498.38 755.3,498.46 755.9,498.54 756.6,498.62 757.3,498.71 757.9,498.79 758.6,498.87 759.2,498.96 759.9,499.04 760.5,499.12 761.2,499.21 761.8,499.29 762.5,499.37 763.2,499.46 763.8,499.54 764.5,499.63 765.1,499.71 765.8,499.80 766.4,499.89 767.1,499.97 767.7,500.06 768.4,500.14 769.1,500.23 769.7,500.32 770.4,500.40 771.0,500.49 771.7,500.58 772.3,500.67 773.0,500.76 773.6,500.85 774.3,500.94 775.0,501.03 775.6,501.12 776.3,501.21 776.9,501.30 777.6,501.39 778.2,501.48 778.9,501.58 779.5,501.67 780.2,501.77 780.9,501.87 781.5,501.96 782.2,502.06 782.8,502.16 783.5,502.27 784.1,502.37 784.8,502.48 785.5,502.59 786.1,502.70 786.8,502.82 787.4,502.94 788.1,503.06 788.7,503.19 789.4,503.33 790.0,503.47 790.7,503.62 791.4,503.78 792.0,503.95 792.7,504.13 793.3,504.32 794.0,504.52 794.6,504.74 795.3,504.98 795.9,505.23 796.6,505.50 797.3,505.80 797.9,506.12 798.6,506.46 799.2,506.84 799.9,507.25 800.5,507.69 801.2,508.16 801.8,508.68 802.5,509.24 803.2,509.85 803.8,510.50 804.5,511.20 805.1,511.96 805.8,512.77 806.4,513.64 807.1,514.57 807.7,515.57 808.4,516.63 809.1,517.75 809.7,518.95 810.4,520.21 811.0,521.54 811.7,522.94 812.3,524.41 813.0,525.95 813.6,527.55 814.3,529.22 815.0,530.95 815.6,532.74 816.3,534.58 816.9,536.47 817.6,538.40 818.2,540.37 818.9,542.37 819.5,544.40 820.2,546.45 820.9,548.50 821.5,550.56 822.2,552.60 822.8,554.63 823.5,556.64 824.1,558.61 824.8,560.53 825.4,562.40 826.1,564.21 826.8,565.95 827.4,567.60 828.1,569.17 828.7,570.64 829.4,572.01 830.0,573.28 830.7,574.42 831.3,575.45 832.0,576.36 832.7,577.14 833.3,577.79 834.0,578.32 834.6,578.72" fill="none" stroke="#000" stroke-width="1.05"/><polyline points="541.2,578.91 541.9,578.68 542.6,578.38 543.2,577.99 543.9,577.51 544.5,576.94 545.2,576.27 545.8,575.50 546.5,574.63 547.1,573.64 547.8,572.56 548.5,571.37 549.1,570.07 549.8,568.67 550.4,567.17 551.1,565.57 551.7,563.88 552.4,562.09 553.0,560.22 553.7,558.27 554.4,556.25 555.0,554.16 555.7,552.00 556.3,549.80 557.0,547.54 557.6,545.25 558.3,542.93 558.9,540.58 559.6,538.22 560.3,535.86 560.9,533.49 561.6,531.13 562.2,528.79 562.9,526.47 563.5,524.19 564.2,521.94 564.8,519.73 565.5,517.57 566.2,515.47 566.8,513.43 567.5,511.45 568.1,509.54 568.8,507.69 569.4,505.92 570.1,504.23 570.7,502.61 571.4,501.07 572.1,499.60 572.7,498.22 573.4,496.91 574.0,495.68 574.7,494.53 575.3,493.45 576.0,492.44 576.6,491.50 577.3,490.63 578.0,489.82 578.6,489.08 579.3,488.40 579.9,487.77 580.6,487.20 581.2,486.68 581.9,486.21 582.5,485.78 583.2,485.39 583.9,485.05 584.5,484.74 585.2,484.46 585.8,484.21 586.5,484.00 587.1,483.81 587.8,483.64 588.4,483.49 589.1,483.37 589.8,483.26 590.4,483.16 591.1,483.09 591.7,483.02 592.4,482.97 593.0,482.93 593.7,482.89 594.3,482.87 595.0,482.85 595.7,482.84 596.3,482.84 597.0,482.84 597.6,482.85 598.3,482.86 598.9,482.87 599.6,482.89 600.2,482.91 600.9,482.93 601.6,482.96 602.2,482.99 602.9,483.02 603.5,483.05 604.2,483.08 604.8,483.12 605.5,483.16 606.1,483.19 606.8,483.23 607.5,483.27 608.1,483.32 608.8,483.36 609.4,483.40 610.1,483.45 610.7,483.49 611.4,483.54 612.0,483.59 612.7,483.64 613.4,483.68 614.0,483.73 614.7,483.78 615.3,483.83 616.0,483.89 616.6,483.94 617.3,483.99 617.9,484.04 618.6,484.10 619.3,484.15 619.9,484.21 620.6,484.26 621.2,484.32 621.9,484.38 622.5,484.43 623.2,484.49 623.8,484.55 624.5,484.61 625.2,484.67 625.8,484.73 626.5,484.79 627.1,484.85 627.8,484.91 628.4,484.97 629.1,485.03 629.7,485.09 630.4,485.15 631.1,485.22 631.7,485.28 632.4,485.34 633.0,485.40 633.7,485.47 634.3,485.53 635.0,485.60 635.6,485.66 636.3,485.73 637.0,485.79 637.6,485.86 638.3,485.92 638.9,485.99 639.6,486.05 640.2,486.12 640.9,486.19 641.5,486.25 642.2,486.32 642.9,486.39 643.5,486.46 644.2,486.52 644.8,486.59 645.5,486.66 646.1,486.73 646.8,486.80 647.4,486.86 648.1,486.93 648.8,487.00 649.4,487.07 650.1,487.14 650.7,487.21 651.4,487.28 652.0,487.35 652.7,487.42 653.3,487.49 654.0,487.56 654.7,487.63 655.3,487.70 656.0,487.77 656.6,487.84 657.3,487.91 657.9,487.98 658.6,488.05 659.2,488.12 659.9,488.20 660.6,488.27 661.2,488.34 661.9,488.41 662.5,488.48 663.2,488.55 663.8,488.62 664.5,488.70 665.1,488.77 665.8,488.84 666.5,488.91 667.1,488.98 667.8,489.06 668.4,489.13 669.1,489.20 669.7,489.27 670.4,489.35 671.0,489.42 671.7,489.49 672.4,489.57 673.0,489.64 673.7,489.71 674.3,489.78 675.0,489.86 675.6,489.93 676.3,490.00 676.9,490.08 677.6,490.15 678.3,490.22 678.9,490.30 679.6,490.37 680.2,490.44 680.9,490.52 681.5,490.59 682.2,490.66 682.8,490.74 683.5,490.81 684.2,490.88 684.8,490.96 685.5,491.03 686.1,491.11 686.8,491.18 687.4,491.25 688.1,491.33 688.7,491.40 689.4,491.48 690.1,491.55 690.7,491.62 691.4,491.70 692.0,491.77 692.7,491.85 693.3,491.92 694.0,492.00 694.6,492.07 695.3,492.14 696.0,492.22 696.6,492.29 697.3,492.37 697.9,492.44 698.6,492.52 699.2,492.59 699.9,492.67 700.5,492.74 701.2,492.82 701.9,492.89 702.5,492.97 703.2,493.04 703.8,493.12 704.5,493.19 705.1,493.27 705.8,493.34 706.5,493.42 707.1,493.49 707.8,493.57 708.4,493.64 709.1,493.72 709.7,493.79 710.4,493.87 711.0,493.94 711.7,494.02 712.4,494.09 713.0,494.17 713.7,494.24 714.3,494.32 715.0,494.40 715.6,494.47 716.3,494.55 716.9,494.62 717.6,494.70 718.3,494.77 718.9,494.85 719.6,494.93 720.2,495.00 720.9,495.08 721.5,495.15 722.2,495.23 722.8,495.31 723.5,495.38 724.2,495.46 724.8,495.53 725.5,495.61 726.1,495.69 726.8,495.76 727.4,495.84 728.1,495.92 728.7,495.99 729.4,496.07 730.1,496.15 730.7,496.22 731.4,496.30 732.0,496.38 732.7,496.45 733.3,496.53 734.0,496.61 734.6,496.69 735.3,496.76 736.0,496.84 736.6,496.92 737.3,497.00 737.9,497.07 738.6,497.15 739.2,497.23 739.9,497.31 740.5,497.38 741.2,497.46 741.9,497.54 742.5,497.62 743.2,497.70 743.8,497.78 744.5,497.85 745.1,497.93 745.8,498.01 746.4,498.09 747.1,498.17 747.8,498.25 748.4,498.33 749.1,498.41 749.7,498.49 750.4,498.57 751.0,498.65 751.7,498.72 752.3,498.80 753.0,498.88 753.7,498.97 754.3,499.05 755.0,499.13 755.6,499.21 756.3,499.29 756.9,499.37 757.6,499.45 758.2,499.53 758.9,499.61 759.6,499.69 760.2,499.78 760.9,499.86 761.5,499.94 762.2,500.02 762.8,500.11 763.5,500.19 764.1,500.27 764.8,500.36 765.5,500.44 766.1,500.52 766.8,500.61 767.4,500.69 768.1,500.78 768.7,500.86 769.4,500.95 770.0,501.03 770.7,501.12 771.4,501.20 772.0,501.29 772.7,501.38 773.3,501.46 774.0,501.55 774.6,501.64 775.3,501.73 775.9,501.82 776.6,501.91 777.3,502.00 777.9,502.09 778.6,502.18 779.2,502.27 779.9,502.36 780.5,502.46 781.2,502.55 781.8,502.65 782.5,502.75 783.2,502.85 783.8,502.95 784.5,503.06 785.1,503.16 785.8,503.27 786.4,503.38 787.1,503.50 787.7,503.62 788.4,503.75 789.1,503.88 789.7,504.01 790.4,504.16 791.0,504.31 791.7,504.47 792.3,504.64 793.0,504.82 793.6,505.02 794.3,505.23 795.0,505.45 795.6,505.69 796.3,505.95 796.9,506.23 797.6,506.54 798.2,506.87 798.9,507.22 799.5,507.61 800.2,508.03 800.9,508.48 801.5,508.97 802.2,509.51 802.8,510.08 803.5,510.71 804.1,511.38 804.8,512.10 805.4,512.88 806.1,513.71 806.8,514.60 807.4,515.56 808.1,516.58 808.7,517.66 809.4,518.81 810.0,520.03 810.7,521.31 811.3,522.67 812.0,524.09 812.7,525.58 813.3,527.14 814.0,528.76 814.6,530.45 815.3,532.19 815.9,533.99 816.6,535.84 817.2,537.74 817.9,539.68 818.6,541.65 819.2,543.65 819.9,545.67 820.5,547.71 821.2,549.75 821.8,551.79 822.5,553.81 823.1,555.81 823.8,557.79 824.5,559.72 825.1,561.61 825.8,563.43 826.4,565.19 827.1,566.88 827.7,568.48 828.4,569.99 829.0,571.40 829.7,572.71 830.4,573.90 831.0,574.98 831.7,575.94 832.3,576.78 833.0,577.49 833.6,578.08 834.3,578.54" fill="none" stroke="#000" stroke-width="1.05"/><polyline points="569.1,578.91 569.8,578.68 570.4,578.37 571.1,577.98 571.7,577.50 572.4,576.93 573.0,576.25 573.7,575.47 574.3,574.59 575.0,573.60 575.7,572.51 576.3,571.31 577.0,570.00 577.6,568.59 578.3,567.08 578.9,565.47 579.6,563.76 580.2,561.97 580.9,560.09 581.6,558.12 582.2,556.08 582.9,553.98 583.5,551.81 584.2,549.59 584.8,547.32 585.5,545.02 586.1,542.68 586.8,540.32 587.5,537.94 588.1,535.56 588.8,533.18 589.4,530.81 590.1,528.46 590.7,526.13 591.4,523.83 592.0,521.57 592.7,519.35 593.4,517.18 594.0,515.07 594.7,513.01 595.3,511.02 596.0,509.10 596.6,507.25 597.3,505.47 597.9,503.77 598.6,502.15 599.3,500.60 599.9,499.13 600.6,497.74 601.2,496.43 601.9,495.20 602.5,494.04 603.2,492.96 603.8,491.95 604.5,491.01 605.2,490.13 605.8,489.33 606.5,488.59 607.1,487.91 607.8,487.28 608.4,486.71 609.1,486.19 609.7,485.72 610.4,485.29 611.1,484.91 611.7,484.57 612.4,484.26 613.0,483.99 613.7,483.74 614.3,483.53 615.0,483.34 615.6,483.18 616.3,483.04 617.0,482.91 617.6,482.81 618.3,482.72 618.9,482.65 619.6,482.59 620.2,482.54 620.9,482.50 621.6,482.47 622.2,482.45 622.9,482.44 623.5,482.43 624.2,482.44 624.8,482.44 625.5,482.45 626.1,482.47 626.8,482.49 627.5,482.51 628.1,482.53 628.8,482.56 629.4,482.59 630.1,482.63 630.7,482.66 631.4,482.70 632.0,482.74 632.7,482.78 633.4,482.82 634.0,482.86 634.7,482.91 635.3,482.95 636.0,483.00 636.6,483.05 637.3,483.10 637.9,483.15 638.6,483.20 639.3,483.25 639.9,483.30 640.6,483.35 641.2,483.41 641.9,483.46 642.5,483.52 643.2,483.57 643.8,483.63 644.5,483.69 645.2,483.74 645.8,483.80 646.5,483.86 647.1,483.92 647.8,483.98 648.4,484.04 649.1,484.10 649.7,484.16 650.4,484.23 651.1,484.29 651.7,484.35 652.4,484.42 653.0,484.48 653.7,484.54 654.3,484.61 655.0,484.67 655.6,484.74 656.3,484.81 657.0,484.87 657.6,484.94 658.3,485.01 658.9,485.07 659.6,485.14 660.2,485.21 660.9,485.28 661.5,485.35 662.2,485.42 662.9,485.48 663.5,485.55 664.2,485.62 664.8,485.69 665.5,485.77 666.1,485.84 666.8,485.91 667.4,485.98 668.1,486.05 668.8,486.12 669.4,486.19 670.1,486.27 670.7,486.34 671.4,486.41 672.0,486.48 672.7,486.56 673.3,486.63 674.0,486.70 674.7,486.78 675.3,486.85 676.0,486.92 676.6,487.00 677.3,487.07 677.9,487.15 678.6,487.22 679.2,487.29 679.9,487.37 680.6,487.44 681.2,487.52 681.9,487.59 682.5,487.67 683.2,487.75 683.8,487.82 684.5,487.90 685.1,487.97 685.8,488.05 686.5,488.12 687.1,488.20 687.8,488.28 688.4,488.35 689.1,488.43 689.7,488.51 690.4,488.58 691.0,488.66 691.7,488.74 692.4,488.81 693.0,488.89 693.7,488.97 694.3,489.04 695.0,489.12 695.6,489.20 696.3,489.28 696.9,489.35 697.6,489.43 698.3,489.51 698.9,489.59 699.6,489.66 700.2,489.74 700.9,489.82 701.5,489.90 702.2,489.98 702.8,490.05 703.5,490.13 704.2,490.21 704.8,490.29 705.5,490.37 706.1,490.45 706.8,490.52 707.4,490.60 708.1,490.68 708.7,490.76 709.4,490.84 710.1,490.92 710.7,491.00 711.4,491.07 712.0,491.15 712.7,491.23 713.3,491.31 714.0,491.39 714.6,491.47 715.3,491.55 716.0,491.63 716.6,491.71 717.3,491.79 717.9,491.86 718.6,491.94 719.2,492.02 719.9,492.10 720.5,492.18 721.2,492.26 721.9,492.34 722.5,492.42 723.2,492.50 723.8,492.58 724.5,492.66 725.1,492.74 725.8,492.82 726.4,492.90 727.1,492.98 727.8,493.06 728.4,493.14 729.1,493.22 729.7,493.30 730.4,493.38 731.0,493.46 731.7,493.54 732.3,493.62 733.0,493.70 733.7,493.78 734.3,493.86 735.0,493.94 735.6,494.02 736.3,494.10 736.9,494.18 737.6,494.26 738.2,494.34 738.9,494.42 739.6,494.50 740.2,494.58 740.9,494.66 741.5,494.74 742.2,494.82 742.8,494.90 743.5,494.98 744.1,495.06 744.8,495.14 745.5,495.22 746.1,495.30 746.8,495.39 747.4,495.47 748.1,495.55 748.7,495.63 749.4,495.71 750.0,495.79 750.7,495.87 751.4,495.95 752.0,496.03 752.7,496.12 753.3,496.20 754.0,496.28 754.6,496.36 755.3,496.44 755.9,496.52 756.6,496.60 757.3,496.69 757.9,496.77 758.6,496.85 759.2,496.93 759.9,497.01 760.5,497.09 761.2,497.18 761.8,497.26 762.5,497.34 763.2,497.42 763.8,497.50 764.5,497.59 765.1,497.67 765.8,497.75 766.4,497.83 767.1,497.92 767.7,498.00 768.4,498.08 769.1,498.17 769.7,498.25 770.4,498.33 771.0,498.41 771.7,498.50 772.3,498.58 773.0,498.66 773.6,498.75 774.3,498.83 775.0,498.92 775.6,499.00 776.3,499.08 776.9,499.17 777.6,499.25 778.2,499.34 778.9,499.42 779.5,499.50 780.2,499.59 780.9,499.67 781.5,499.76 782.2,499.84 782.8,499.93 783.5,500.01 784.1,500.10 784.8,500.19 785.5,500.27 786.1,500.36 786.8,500.44 787.4,500.53 788.1,500.62 788.7,500.70 789.4,500.79 790.0,500.88 790.7,500.96 791.4,501.05 792.0,501.14 792.7,501.23 793.3,501.31 794.0,501.40 794.6,501.49 795.3,501.58 795.9,501.67 796.6,501.76 797.3,501.85 797.9,501.94 798.6,502.03 799.2,502.12 799.9,502.21 800.5,502.30 801.2,502.39 801.8,502.48 802.5,502.57 803.2,502.66 803.8,502.76 804.5,502.85 805.1,502.94 805.8,503.04 806.4,503.13 807.1,503.23 807.7,503.32 808.4,503.42 809.1,503.52 809.7,503.62 810.4,503.72 811.0,503.82 811.7,503.92 812.3,504.02 813.0,504.13 813.6,504.24 814.3,504.35 815.0,504.46 815.6,504.57 816.3,504.69 816.9,504.82 817.6,504.94 818.2,505.08 818.9,505.21 819.5,505.36 820.2,505.51 820.9,505.67 821.5,505.84 822.2,506.02 822.8,506.21 823.5,506.41 824.1,506.63 824.8,506.87 825.4,507.12 826.1,507.39 826.8,507.68 827.4,508.00 828.1,508.34 828.7,508.71 829.4,509.11 830.0,509.55 830.7,510.02 831.3,510.53 832.0,511.08 832.7,511.67 833.3,512.31 834.0,513.00 834.6,513.74 835.3,514.54 835.9,515.39 836.6,516.30 837.2,517.27 837.9,518.31 838.6,519.41 839.2,520.58 839.9,521.81 840.5,523.11 841.2,524.48 841.8,525.91 842.5,527.41 843.1,528.97 843.8,530.60 844.5,532.28 845.1,534.02 845.8,535.82 846.4,537.66 847.1,539.54 847.7,541.46 848.4,543.41 849.0,545.38 849.7,547.37 850.4,549.37 851.0,551.37 851.7,553.36 852.3,555.34 853.0,557.28 853.6,559.20 854.3,561.07 854.9,562.89 855.6,564.64 856.3,566.33 856.9,567.94 857.6,569.46 858.2,570.89 858.9,572.23 859.5,573.45 860.2,574.56 860.8,575.56 861.5,576.44 862.2,577.20 862.8,577.83 863.5,578.34 864.1,578.73" fill="none" stroke="#000" stroke-width="1.16"/><polyline points="541.2,578.89 541.9,578.65 542.6,578.33 543.2,577.92 543.9,577.41 544.5,576.81 545.2,576.09 545.8,575.28 546.5,574.35 547.1,573.31 547.8,572.16 548.5,570.89 549.1,569.52 549.8,568.04 550.4,566.44 551.1,564.75 551.7,562.95 552.4,561.06 553.0,559.08 553.7,557.01 554.4,554.87 555.0,552.65 555.7,550.37 556.3,548.03 557.0,545.64 557.6,543.21 558.3,540.75 558.9,538.26 559.6,535.76 560.3,533.25 560.9,530.75 561.6,528.25 562.2,525.77 562.9,523.31 563.5,520.89 564.2,518.51 564.8,516.17 565.5,513.89 566.2,511.66 566.8,509.49 567.5,507.40 568.1,505.37 568.8,503.42 569.4,501.55 570.1,499.75 570.7,498.04 571.4,496.41 572.1,494.86 572.7,493.39 573.4,492.01 574.0,490.71 574.7,489.49 575.3,488.34 576.0,487.28 576.6,486.28 577.3,485.36 578.0,484.51 578.6,483.73 579.3,483.01 579.9,482.35 580.6,481.74 581.2,481.19 581.9,480.70 582.5,480.25 583.2,479.84 583.9,479.47 584.5,479.15 585.2,478.86 585.8,478.60 586.5,478.37 587.1,478.17 587.8,477.99 588.4,477.84 589.1,477.71 589.8,477.60 590.4,477.50 591.1,477.42 591.7,477.36 592.4,477.30 593.0,477.26 593.7,477.23 594.3,477.20 595.0,477.19 595.7,477.18 596.3,477.18 597.0,477.18 597.6,477.19 598.3,477.20 598.9,477.22 599.6,477.24 600.2,477.27 600.9,477.30 601.6,477.32 602.2,477.36 602.9,477.39 603.5,477.43 604.2,477.47 604.8,477.51 605.5,477.55 606.1,477.59 606.8,477.63 607.5,477.68 608.1,477.73 608.8,477.77 609.4,477.82 610.1,477.87 610.7,477.92 611.4,477.97 612.0,478.03 612.7,478.08 613.4,478.13 614.0,478.19 614.7,478.24 615.3,478.30 616.0,478.36 616.6,478.42 617.3,478.47 617.9,478.53 618.6,478.59 619.3,478.65 619.9,478.71 620.6,478.77 621.2,478.84 621.9,478.90 622.5,478.96 623.2,479.02 623.8,479.09 624.5,479.15 625.2,479.22 625.8,479.28 626.5,479.35 627.1,479.41 627.8,479.48 628.4,479.55 629.1,479.62 629.7,479.68 630.4,479.75 631.1,479.82 631.7,479.89 632.4,479.96 633.0,480.03 633.7,480.10 634.3,480.17 635.0,480.24 635.6,480.31 636.3,480.38 637.0,480.45 637.6,480.52 638.3,480.60 638.9,480.67 639.6,480.74 640.2,480.81 640.9,480.89 641.5,480.96 642.2,481.03 642.9,481.11 643.5,481.18 644.2,481.25 644.8,481.33 645.5,481.40 646.1,481.48 646.8,481.55 647.4,481.63 648.1,481.70 648.8,481.78 649.4,481.85 650.1,481.93 650.7,482.00 651.4,482.08 652.0,482.16 652.7,482.23 653.3,482.31 654.0,482.39 654.7,482.46 655.3,482.54 656.0,482.62 656.6,482.69 657.3,482.77 657.9,482.85 658.6,482.93 659.2,483.00 659.9,483.08 660.6,483.16 661.2,483.24 661.9,483.31 662.5,483.39 663.2,483.47 663.8,483.55 664.5,483.63 665.1,483.71 665.8,483.79 666.5,483.86 667.1,483.94 667.8,484.02 668.4,484.10 669.1,484.18 669.7,484.26 670.4,484.34 671.0,484.42 671.7,484.50 672.4,484.58 673.0,484.66 673.7,484.73 674.3,484.81 675.0,484.89 675.6,484.97 676.3,485.05 676.9,485.13 677.6,485.21 678.3,485.29 678.9,485.37 679.6,485.45 680.2,485.53 680.9,485.61 681.5,485.69 682.2,485.77 682.8,485.85 683.5,485.93 684.2,486.01 684.8,486.10 685.5,486.18 686.1,486.26 686.8,486.34 687.4,486.42 688.1,486.50 688.7,486.58 689.4,486.66 690.1,486.74 690.7,486.82 691.4,486.90 692.0,486.98 692.7,487.06 693.3,487.14 694.0,487.23 694.6,487.31 695.3,487.39 696.0,487.47 696.6,487.55 697.3,487.63 697.9,487.71 698.6,487.79 699.2,487.87 699.9,487.96 700.5,488.04 701.2,488.12 701.9,488.20 702.5,488.28 703.2,488.36 703.8,488.44 704.5,488.53 705.1,488.61 705.8,488.69 706.5,488.77 707.1,488.85 707.8,488.93 708.4,489.02 709.1,489.10 709.7,489.18 710.4,489.26 711.0,489.34 711.7,489.43 712.4,489.51 713.0,489.59 713.7,489.67 714.3,489.75 715.0,489.84 715.6,489.92 716.3,490.00 716.9,490.08 717.6,490.16 718.3,490.25 718.9,490.33 719.6,490.41 720.2,490.49 720.9,490.58 721.5,490.66 722.2,490.74 722.8,490.82 723.5,490.91 724.2,490.99 724.8,491.07 725.5,491.16 726.1,491.24 726.8,491.32 727.4,491.40 728.1,491.49 728.7,491.57 729.4,491.65 730.1,491.74 730.7,491.82 731.4,491.90 732.0,491.99 732.7,492.07 733.3,492.15 734.0,492.24 734.6,492.32 735.3,492.40 736.0,492.49 736.6,492.57 737.3,492.65 737.9,492.74 738.6,492.82 739.2,492.90 739.9,492.99 740.5,493.07 741.2,493.16 741.9,493.24 742.5,493.33 743.2,493.41 743.8,493.49 744.5,493.58 745.1,493.66 745.8,493.75 746.4,493.83 747.1,493.92 747.8,494.00 748.4,494.09 749.1,494.17 749.7,494.26 750.4,494.34 751.0,494.43 751.7,494.51 752.3,494.60 753.0,494.69 753.7,494.77 754.3,494.86 755.0,494.94 755.6,495.03 756.3,495.12 756.9,495.20 757.6,495.29 758.2,495.38 758.9,495.46 759.6,495.55 760.2,495.64 760.9,495.73 761.5,495.81 762.2,495.90 762.8,495.99 763.5,496.08 764.1,496.17 764.8,496.25 765.5,496.34 766.1,496.43 766.8,496.52 767.4,496.61 768.1,496.70 768.7,496.79 769.4,496.88 770.0,496.97 770.7,497.06 771.4,497.15 772.0,497.24 772.7,497.33 773.3,497.42 774.0,497.51 774.6,497.61 775.3,497.70 775.9,497.79 776.6,497.88 777.3,497.98 777.9,498.07 778.6,498.16 779.2,498.26 779.9,498.35 780.5,498.45 781.2,498.54 781.8,498.64 782.5,498.73 783.2,498.83 783.8,498.93 784.5,499.03 785.1,499.13 785.8,499.23 786.4,499.33 787.1,499.43 787.7,499.53 788.4,499.64 789.1,499.74 789.7,499.85 790.4,499.96 791.0,500.07 791.7,500.19 792.3,500.30 793.0,500.42 793.6,500.55 794.3,500.68 795.0,500.81 795.6,500.95 796.3,501.10 796.9,501.25 797.6,501.41 798.2,501.58 798.9,501.77 799.5,501.96 800.2,502.16 800.9,502.38 801.5,502.62 802.2,502.87 802.8,503.15 803.5,503.44 804.1,503.76 804.8,504.11 805.4,504.48 806.1,504.89 806.8,505.33 807.4,505.80 808.1,506.32 808.7,506.87 809.4,507.47 810.0,508.12 810.7,508.82 811.3,509.58 812.0,510.39 812.7,511.25 813.3,512.18 814.0,513.18 814.6,514.24 815.3,515.37 815.9,516.56 816.6,517.83 817.2,519.17 817.9,520.57 818.6,522.05 819.2,523.60 819.9,525.22 820.5,526.91 821.2,528.66 821.8,530.47 822.5,532.34 823.1,534.26 823.8,536.23 824.5,538.24 825.1,540.28 825.8,542.36 826.4,544.46 827.1,546.57 827.7,548.68 828.4,550.79 829.0,552.89 829.7,554.97 830.4,557.02 831.0,559.02 831.7,560.97 832.3,562.87 833.0,564.69 833.6,566.44 834.3,568.10 834.9,569.66 835.6,571.12 836.3,572.48 836.9,573.71 837.6,574.83 838.2,575.83 838.9,576.69 839.5,577.43 840.2,578.04 840.8,578.51" fill="none" stroke="#000" stroke-width="1.05"/><polyline points="567.5,578.93 568.1,578.73 568.8,578.45 569.4,578.10 570.1,577.66 570.7,577.13 571.4,576.52 572.1,575.81 572.7,575.01 573.4,574.12 574.0,573.12 574.7,572.03 575.3,570.85 576.0,569.57 576.6,568.19 577.3,566.73 578.0,565.18 578.6,563.55 579.3,561.84 579.9,560.06 580.6,558.21 581.2,556.29 581.9,554.33 582.5,552.31 583.2,550.25 583.9,548.15 584.5,546.03 585.2,543.89 585.8,541.73 586.5,539.57 587.1,537.40 587.8,535.25 588.4,533.11 589.1,530.99 589.8,528.90 590.4,526.85 591.1,524.83 591.7,522.86 592.4,520.94 593.0,519.08 593.7,517.27 594.3,515.52 595.0,513.84 595.7,512.23 596.3,510.68 597.0,509.20 597.6,507.80 598.3,506.46 598.9,505.20 599.6,504.00 600.2,502.88 600.9,501.83 601.6,500.84 602.2,499.93 602.9,499.07 603.5,498.28 604.2,497.55 604.8,496.87 605.5,496.25 606.1,495.68 606.8,495.16 607.5,494.69 608.1,494.26 608.8,493.87 609.4,493.52 610.1,493.21 610.7,492.93 611.4,492.68 612.0,492.46 612.7,492.26 613.4,492.09 614.0,491.94 614.7,491.81 615.3,491.70 616.0,491.60 616.6,491.52 617.3,491.45 617.9,491.40 618.6,491.35 619.3,491.31 619.9,491.29 620.6,491.27 621.2,491.26 621.9,491.25 622.5,491.25 623.2,491.25 623.8,491.26 624.5,491.28 625.2,491.29 625.8,491.31 626.5,491.33 627.1,491.36 627.8,491.38 628.4,491.41 629.1,491.44 629.7,491.48 630.4,491.51 631.1,491.55 631.7,491.58 632.4,491.62 633.0,491.66 633.7,491.70 634.3,491.74 635.0,491.78 635.6,491.83 636.3,491.87 637.0,491.91 637.6,491.96 638.3,492.01 638.9,492.05 639.6,492.10 640.2,492.15 640.9,492.20 641.5,492.25 642.2,492.30 642.9,492.35 643.5,492.40 644.2,492.45 644.8,492.50 645.5,492.56 646.1,492.61 646.8,492.66 647.4,492.72 648.1,492.77 648.8,492.83 649.4,492.88 650.1,492.94 650.7,493.00 651.4,493.05 652.0,493.11 652.7,493.17 653.3,493.23 654.0,493.29 654.7,493.35 655.3,493.40 656.0,493.46 656.6,493.52 657.3,493.58 657.9,493.64 658.6,493.71 659.2,493.77 659.9,493.83 660.6,493.89 661.2,493.95 661.9,494.01 662.5,494.08 663.2,494.14 663.8,494.20 664.5,494.26 665.1,494.33 665.8,494.39 666.5,494.45 667.1,494.52 667.8,494.58 668.4,494.65 669.1,494.71 669.7,494.78 670.4,494.84 671.0,494.91 671.7,494.97 672.4,495.04 673.0,495.10 673.7,495.17 674.3,495.24 675.0,495.30 675.6,495.37 676.3,495.43 676.9,495.50 677.6,495.57 678.3,495.63 678.9,495.70 679.6,495.77 680.2,495.84 680.9,495.90 681.5,495.97 682.2,496.04 682.8,496.11 683.5,496.17 684.2,496.24 684.8,496.31 685.5,496.38 686.1,496.45 686.8,496.51 687.4,496.58 688.1,496.65 688.7,496.72 689.4,496.79 690.1,496.86 690.7,496.93 691.4,496.99 692.0,497.06 692.7,497.13 693.3,497.20 694.0,497.27 694.6,497.34 695.3,497.41 696.0,497.48 696.6,497.55 697.3,497.62 697.9,497.69 698.6,497.76 699.2,497.83 699.9,497.90 700.5,497.97 701.2,498.04 701.9,498.11 702.5,498.18 703.2,498.25 703.8,498.32 704.5,498.39 705.1,498.46 705.8,498.53 706.5,498.60 707.1,498.67 707.8,498.74 708.4,498.81 709.1,498.88 709.7,498.95 710.4,499.02 711.0,499.09 711.7,499.16 712.4,499.24 713.0,499.31 713.7,499.38 714.3,499.45 715.0,499.52 715.6,499.59 716.3,499.66 716.9,499.73 717.6,499.80 718.3,499.88 718.9,499.95 719.6,500.02 720.2,500.09 720.9,500.16 721.5,500.23 722.2,500.30 722.8,500.38 723.5,500.45 724.2,500.52 724.8,500.59 725.5,500.66 726.1,500.74 726.8,500.81 727.4,500.88 728.1,500.95 728.7,501.02 729.4,501.10 730.1,501.17 730.7,501.24 731.4,501.31 732.0,501.38 732.7,501.46 733.3,501.53 734.0,501.60 734.6,501.67 735.3,501.75 736.0,501.82 736.6,501.89 737.3,501.97 737.9,502.04 738.6,502.11 739.2,502.18 739.9,502.26 740.5,502.33 741.2,502.40 741.9,502.48 742.5,502.55 743.2,502.62 743.8,502.70 744.5,502.77 745.1,502.84 745.8,502.92 746.4,502.99 747.1,503.06 747.8,503.14 748.4,503.21 749.1,503.29 749.7,503.36 750.4,503.43 751.0,503.51 751.7,503.58 752.3,503.66 753.0,503.73 753.7,503.81 754.3,503.88 755.0,503.96 755.6,504.03 756.3,504.11 756.9,504.18 757.6,504.26 758.2,504.33 758.9,504.41 759.6,504.48 760.2,504.56 760.9,504.63 761.5,504.71 762.2,504.79 762.8,504.86 763.5,504.94 764.1,505.02 764.8,505.09 765.5,505.17 766.1,505.25 766.8,505.32 767.4,505.40 768.1,505.48 768.7,505.56 769.4,505.63 770.0,505.71 770.7,505.79 771.4,505.87 772.0,505.95 772.7,506.03 773.3,506.10 774.0,506.18 774.6,506.26 775.3,506.34 775.9,506.42 776.6,506.50 777.3,506.58 777.9,506.66 778.6,506.74 779.2,506.82 779.9,506.90 780.5,506.99 781.2,507.07 781.8,507.15 782.5,507.23 783.2,507.32 783.8,507.40 784.5,507.48 785.1,507.57 785.8,507.65 786.4,507.74 787.1,507.82 787.7,507.91 788.4,507.99 789.1,508.08 789.7,508.17 790.4,508.26 791.0,508.35 791.7,508.44 792.3,508.54 793.0,508.63 793.6,508.73 794.3,508.82 795.0,508.93 795.6,509.03 796.3,509.14 796.9,509.25 797.6,509.36 798.2,509.48 798.9,509.60 799.5,509.73 800.2,509.86 800.9,510.01 801.5,510.16 802.2,510.32 802.8,510.49 803.5,510.67 804.1,510.86 804.8,511.07 805.4,511.30 806.1,511.54 806.8,511.80 807.4,512.09 808.1,512.39 808.7,512.72 809.4,513.08 810.0,513.47 810.7,513.89 811.3,514.35 812.0,514.84 812.7,515.38 813.3,515.95 814.0,516.58 814.6,517.25 815.3,517.96 815.9,518.74 816.6,519.56 817.2,520.45 817.9,521.39 818.6,522.39 819.2,523.45 819.9,524.58 820.5,525.77 821.2,527.02 821.8,528.34 822.5,529.72 823.1,531.16 823.8,532.66 824.5,534.21 825.1,535.82 825.8,537.48 826.4,539.19 827.1,540.95 827.7,542.74 828.4,544.56 829.0,546.40 829.7,548.27 830.4,550.15 831.0,552.03 831.7,553.91 832.3,555.78 833.0,557.63 833.6,559.45 834.3,561.23 834.9,562.97 835.6,564.66 836.3,566.28 836.9,567.84 837.6,569.31 838.2,570.71 838.9,572.01 839.5,573.21 840.2,574.31 840.8,575.31 841.5,576.20 842.2,576.97 842.8,577.62 843.5,578.17 844.1,578.59" fill="none" stroke="#000" stroke-width="1.05"/><polyline points="539.6,578.98 540.3,578.81 540.9,578.58 541.6,578.29 542.2,577.93 542.9,577.50 543.5,576.99 544.2,576.40 544.8,575.74 545.5,575.00 546.2,574.18 546.8,573.27 547.5,572.29 548.1,571.23 548.8,570.09 549.4,568.87 550.1,567.58 550.7,566.22 551.4,564.80 552.1,563.31 552.7,561.77 553.4,560.18 554.0,558.53 554.7,556.85 555.3,555.12 556.0,553.37 556.6,551.59 557.3,549.79 558.0,547.99 558.6,546.17 559.3,544.35 559.9,542.54 560.6,540.74 561.2,538.96 561.9,537.19 562.5,535.46 563.2,533.76 563.9,532.09 564.5,530.46 565.2,528.88 565.8,527.35 566.5,525.86 567.1,524.43 567.8,523.05 568.4,521.73 569.1,520.46 569.8,519.26 570.4,518.11 571.1,517.02 571.7,515.99 572.4,515.02 573.0,514.11 573.7,513.25 574.3,512.45 575.0,511.70 575.7,511.00 576.3,510.35 577.0,509.76 577.6,509.20 578.3,508.69 578.9,508.22 579.6,507.79 580.2,507.40 580.9,507.04 581.6,506.71 582.2,506.41 582.9,506.14 583.5,505.90 584.2,505.68 584.8,505.48 585.5,505.30 586.1,505.14 586.8,505.00 587.5,504.87 588.1,504.75 588.8,504.65 589.4,504.56 590.1,504.48 590.7,504.41 591.4,504.34 592.0,504.29 592.7,504.24 593.4,504.19 594.0,504.15 594.7,504.12 595.3,504.09 596.0,504.06 596.6,504.04 597.3,504.02 597.9,504.00 598.6,503.99 599.3,503.97 599.9,503.96 600.6,503.95 601.2,503.94 601.9,503.94 602.5,503.93 603.2,503.93 603.8,503.93 604.5,503.92 605.2,503.92 605.8,503.92 606.5,503.92 607.1,503.93 607.8,503.93 608.4,503.93 609.1,503.93 609.7,503.94 610.4,503.94 611.1,503.95 611.7,503.96 612.4,503.96 613.0,503.97 613.7,503.98 614.3,503.99 615.0,503.99 615.6,504.00 616.3,504.01 617.0,504.02 617.6,504.03 618.3,504.05 618.9,504.06 619.6,504.07 620.2,504.08 620.9,504.09 621.6,504.11 622.2,504.12 622.9,504.13 623.5,504.15 624.2,504.16 624.8,504.18 625.5,504.19 626.1,504.21 626.8,504.22 627.5,504.24 628.1,504.25 628.8,504.27 629.4,504.29 630.1,504.30 630.7,504.32 631.4,504.34 632.0,504.36 632.7,504.37 633.4,504.39 634.0,504.41 634.7,504.43 635.3,504.45 636.0,504.47 636.6,504.49 637.3,504.51 637.9,504.53 638.6,504.55 639.3,504.57 639.9,504.59 640.6,504.61 641.2,504.63 641.9,504.65 642.5,504.67 643.2,504.69 643.8,504.71 644.5,504.73 645.2,504.75 645.8,504.77 646.5,504.80 647.1,504.82 647.8,504.84 648.4,504.86 649.1,504.88 649.7,504.91 650.4,504.93 651.1,504.95 651.7,504.97 652.4,505.00 653.0,505.02 653.7,505.04 654.3,505.06 655.0,505.09 655.6,505.11 656.3,505.13 657.0,505.16 657.6,505.18 658.3,505.20 658.9,505.23 659.6,505.25 660.2,505.27 660.9,505.30 661.5,505.32 662.2,505.35 662.9,505.37 663.5,505.39 664.2,505.42 664.8,505.44 665.5,505.47 666.1,505.49 666.8,505.52 667.4,505.54 668.1,505.56 668.8,505.59 669.4,505.61 670.1,505.64 670.7,505.66 671.4,505.69 672.0,505.71 672.7,505.74 673.3,505.76 674.0,505.79 674.7,505.81 675.3,505.84 676.0,505.86 676.6,505.89 677.3,505.91 677.9,505.94 678.6,505.96 679.2,505.99 679.9,506.01 680.6,506.04 681.2,506.07 681.9,506.09 682.5,506.12 683.2,506.14 683.8,506.17 684.5,506.19 685.1,506.22 685.8,506.24 686.5,506.27 687.1,506.30 687.8,506.32 688.4,506.35 689.1,506.37 689.7,506.40 690.4,506.43 691.0,506.45 691.7,506.48 692.4,506.50 693.0,506.53 693.7,506.56 694.3,506.58 695.0,506.61 695.6,506.63 696.3,506.66 696.9,506.69 697.6,506.71 698.3,506.74 698.9,506.76 699.6,506.79 700.2,506.82 700.9,506.84 701.5,506.87 702.2,506.90 702.8,506.92 703.5,506.95 704.2,506.98 704.8,507.00 705.5,507.03 706.1,507.06 706.8,507.08 707.4,507.11 708.1,507.14 708.7,507.16 709.4,507.19 710.1,507.22 710.7,507.24 711.4,507.27 712.0,507.30 712.7,507.32 713.3,507.35 714.0,507.38 714.6,507.41 715.3,507.43 716.0,507.46 716.6,507.49 717.3,507.51 717.9,507.54 718.6,507.57 719.2,507.60 719.9,507.62 720.5,507.65 721.2,507.68 721.9,507.71 722.5,507.73 723.2,507.76 723.8,507.79 724.5,507.82 725.1,507.84 725.8,507.87 726.4,507.90 727.1,507.93 727.8,507.96 728.4,507.98 729.1,508.01 729.7,508.04 730.4,508.07 731.0,508.10 731.7,508.12 732.3,508.15 733.0,508.18 733.7,508.21 734.3,508.24 735.0,508.27 735.6,508.30 736.3,508.32 736.9,508.35 737.6,508.38 738.2,508.41 738.9,508.44 739.6,508.47 740.2,508.50 740.9,508.53 741.5,508.56 742.2,508.59 742.8,508.61 743.5,508.64 744.1,508.67 744.8,508.70 745.5,508.73 746.1,508.76 746.8,508.79 747.4,508.82 748.1,508.85 748.7,508.88 749.4,508.91 750.0,508.95 750.7,508.98 751.4,509.01 752.0,509.04 752.7,509.07 753.3,509.10 754.0,509.13 754.6,509.16 755.3,509.19 755.9,509.23 756.6,509.26 757.3,509.29 757.9,509.32 758.6,509.35 759.2,509.39 759.9,509.42 760.5,509.45 761.2,509.49 761.8,509.52 762.5,509.55 763.2,509.59 763.8,509.62 764.5,509.65 765.1,509.69 765.8,509.72 766.4,509.76 767.1,509.79 767.7,509.83 768.4,509.86 769.1,509.90 769.7,509.93 770.4,509.97 771.0,510.01 771.7,510.04 772.3,510.08 773.0,510.12 773.6,510.16 774.3,510.19 775.0,510.23 775.6,510.27 776.3,510.31 776.9,510.35 777.6,510.39 778.2,510.43 778.9,510.48 779.5,510.52 780.2,510.56 780.9,510.61 781.5,510.65 782.2,510.70 782.8,510.75 783.5,510.80 784.1,510.85 784.8,510.91 785.5,510.96 786.1,511.02 786.8,511.08 787.4,511.15 788.1,511.22 788.7,511.30 789.4,511.38 790.0,511.46 790.7,511.55 791.4,511.66 792.0,511.76 792.7,511.88 793.3,512.01 794.0,512.15 794.6,512.31 795.3,512.48 795.9,512.67 796.6,512.87 797.3,513.10 797.9,513.34 798.6,513.62 799.2,513.91 799.9,514.24 800.5,514.60 801.2,514.99 801.8,515.42 802.5,515.88 803.2,516.39 803.8,516.94 804.5,517.54 805.1,518.19 805.8,518.89 806.4,519.64 807.1,520.45 807.7,521.32 808.4,522.24 809.1,523.23 809.7,524.29 810.4,525.40 811.0,526.58 811.7,527.83 812.3,529.14 813.0,530.51 813.6,531.95 814.3,533.45 815.0,535.00 815.6,536.61 816.3,538.27 816.9,539.98 817.6,541.73 818.2,543.51 818.9,545.33 819.5,547.18 820.2,549.04 820.9,550.91 821.5,552.79 822.2,554.66 822.8,556.52 823.5,558.36 824.1,560.16 824.8,561.93 825.4,563.65 826.1,565.32 826.8,566.92 827.4,568.44 828.1,569.89 828.7,571.25 829.4,572.52 830.0,573.69 830.7,574.75 831.3,575.71 832.0,576.55 832.7,577.28 833.3,577.88 834.0,578.38 834.6,578.75" fill="none" stroke="#000" stroke-width="1.05"/><polyline points="552.7,578.98 553.4,578.82 554.0,578.60 554.7,578.31 555.3,577.96 556.0,577.53 556.6,577.04 557.3,576.47 558.0,575.82 558.6,575.09 559.3,574.29 559.9,573.40 560.6,572.44 561.2,571.40 561.9,570.29 562.5,569.10 563.2,567.84 563.9,566.51 564.5,565.12 565.2,563.67 565.8,562.16 566.5,560.60 567.1,558.99 567.8,557.35 568.4,555.66 569.1,553.95 569.8,552.21 570.4,550.46 571.1,548.69 571.7,546.91 572.4,545.14 573.0,543.37 573.7,541.61 574.3,539.86 575.0,538.14 575.7,536.45 576.3,534.78 577.0,533.16 577.6,531.57 578.3,530.02 578.9,528.52 579.6,527.07 580.2,525.67 580.9,524.33 581.6,523.04 582.2,521.80 582.9,520.62 583.5,519.50 584.2,518.44 584.8,517.44 585.5,516.49 586.1,515.60 586.8,514.76 587.5,513.98 588.1,513.25 588.8,512.57 589.4,511.94 590.1,511.35 590.7,510.81 591.4,510.32 592.0,509.86 592.7,509.44 593.4,509.06 594.0,508.71 594.7,508.39 595.3,508.10 596.0,507.84 596.6,507.60 597.3,507.38 597.9,507.19 598.6,507.02 599.3,506.86 599.9,506.72 600.6,506.60 601.2,506.49 601.9,506.39 602.5,506.30 603.2,506.23 603.8,506.16 604.5,506.10 605.2,506.04 605.8,506.00 606.5,505.95 607.1,505.92 607.8,505.89 608.4,505.86 609.1,505.83 609.7,505.81 610.4,505.79 611.1,505.78 611.7,505.76 612.4,505.75 613.0,505.74 613.7,505.74 614.3,505.73 615.0,505.72 615.6,505.72 616.3,505.72 617.0,505.72 617.6,505.72 618.3,505.72 618.9,505.72 619.6,505.72 620.2,505.72 620.9,505.73 621.6,505.73 622.2,505.74 622.9,505.74 623.5,505.75 624.2,505.76 624.8,505.76 625.5,505.77 626.1,505.78 626.8,505.79 627.5,505.80 628.1,505.81 628.8,505.82 629.4,505.83 630.1,505.84 630.7,505.85 631.4,505.87 632.0,505.88 632.7,505.89 633.4,505.91 634.0,505.92 634.7,505.93 635.3,505.95 636.0,505.96 636.6,505.98 637.3,505.99 637.9,506.01 638.6,506.02 639.3,506.04 639.9,506.06 640.6,506.07 641.2,506.09 641.9,506.11 642.5,506.13 643.2,506.15 643.8,506.16 644.5,506.18 645.2,506.20 645.8,506.22 646.5,506.24 647.1,506.26 647.8,506.28 648.4,506.30 649.1,506.32 649.7,506.34 650.4,506.36 651.1,506.38 651.7,506.40 652.4,506.42 653.0,506.44 653.7,506.46 654.3,506.48 655.0,506.51 655.6,506.53 656.3,506.55 657.0,506.57 657.6,506.59 658.3,506.62 658.9,506.64 659.6,506.66 660.2,506.68 660.9,506.71 661.5,506.73 662.2,506.75 662.9,506.78 663.5,506.80 664.2,506.82 664.8,506.85 665.5,506.87 666.1,506.89 666.8,506.92 667.4,506.94 668.1,506.97 668.8,506.99 669.4,507.01 670.1,507.04 670.7,507.06 671.4,507.09 672.0,507.11 672.7,507.14 673.3,507.16 674.0,507.19 674.7,507.21 675.3,507.23 676.0,507.26 676.6,507.28 677.3,507.31 677.9,507.33 678.6,507.36 679.2,507.39 679.9,507.41 680.6,507.44 681.2,507.46 681.9,507.49 682.5,507.51 683.2,507.54 683.8,507.56 684.5,507.59 685.1,507.62 685.8,507.64 686.5,507.67 687.1,507.69 687.8,507.72 688.4,507.74 689.1,507.77 689.7,507.80 690.4,507.82 691.0,507.85 691.7,507.88 692.4,507.90 693.0,507.93 693.7,507.95 694.3,507.98 695.0,508.01 695.6,508.03 696.3,508.06 696.9,508.09 697.6,508.11 698.3,508.14 698.9,508.17 699.6,508.19 700.2,508.22 700.9,508.25 701.5,508.27 702.2,508.30 702.8,508.33 703.5,508.35 704.2,508.38 704.8,508.41 705.5,508.43 706.1,508.46 706.8,508.49 707.4,508.51 708.1,508.54 708.7,508.57 709.4,508.60 710.1,508.62 710.7,508.65 711.4,508.68 712.0,508.71 712.7,508.73 713.3,508.76 714.0,508.79 714.6,508.81 715.3,508.84 716.0,508.87 716.6,508.90 717.3,508.92 717.9,508.95 718.6,508.98 719.2,509.01 719.9,509.03 720.5,509.06 721.2,509.09 721.9,509.12 722.5,509.15 723.2,509.17 723.8,509.20 724.5,509.23 725.1,509.26 725.8,509.28 726.4,509.31 727.1,509.34 727.8,509.37 728.4,509.40 729.1,509.42 729.7,509.45 730.4,509.48 731.0,509.51 731.7,509.54 732.3,509.57 733.0,509.59 733.7,509.62 734.3,509.65 735.0,509.68 735.6,509.71 736.3,509.74 736.9,509.77 737.6,509.79 738.2,509.82 738.9,509.85 739.6,509.88 740.2,509.91 740.9,509.94 741.5,509.97 742.2,510.00 742.8,510.03 743.5,510.06 744.1,510.08 744.8,510.11 745.5,510.14 746.1,510.17 746.8,510.20 747.4,510.23 748.1,510.26 748.7,510.29 749.4,510.32 750.0,510.35 750.7,510.38 751.4,510.41 752.0,510.44 752.7,510.47 753.3,510.50 754.0,510.53 754.6,510.56 755.3,510.59 755.9,510.62 756.6,510.65 757.3,510.69 757.9,510.72 758.6,510.75 759.2,510.78 759.9,510.81 760.5,510.84 761.2,510.87 761.8,510.90 762.5,510.94 763.2,510.97 763.8,511.00 764.5,511.03 765.1,511.06 765.8,511.10 766.4,511.13 767.1,511.16 767.7,511.20 768.4,511.23 769.1,511.26 769.7,511.30 770.4,511.33 771.0,511.36 771.7,511.40 772.3,511.43 773.0,511.46 773.6,511.50 774.3,511.53 775.0,511.57 775.6,511.60 776.3,511.64 776.9,511.67 777.6,511.71 778.2,511.75 778.9,511.78 779.5,511.82 780.2,511.86 780.9,511.89 781.5,511.93 782.2,511.97 782.8,512.01 783.5,512.04 784.1,512.08 784.8,512.12 785.5,512.16 786.1,512.20 786.8,512.24 787.4,512.28 788.1,512.32 788.7,512.37 789.4,512.41 790.0,512.45 790.7,512.50 791.4,512.55 792.0,512.59 792.7,512.64 793.3,512.69 794.0,512.74 794.6,512.80 795.3,512.86 795.9,512.91 796.6,512.98 797.3,513.04 797.9,513.11 798.6,513.19 799.2,513.27 799.9,513.35 800.5,513.44 801.2,513.54 801.8,513.65 802.5,513.77 803.2,513.90 803.8,514.03 804.5,514.19 805.1,514.35 805.8,514.54 806.4,514.74 807.1,514.96 807.7,515.20 808.4,515.47 809.1,515.76 809.7,516.07 810.4,516.42 811.0,516.81 811.7,517.22 812.3,517.68 813.0,518.17 813.6,518.71 814.3,519.29 815.0,519.92 815.6,520.60 816.3,521.34 816.9,522.12 817.6,522.97 818.2,523.87 818.9,524.83 819.5,525.86 820.2,526.94 820.9,528.09 821.5,529.30 822.2,530.58 822.8,531.91 823.5,533.31 824.1,534.76 824.8,536.27 825.4,537.84 826.1,539.45 826.8,541.11 827.4,542.81 828.1,544.55 828.7,546.31 829.4,548.11 830.0,549.91 830.7,551.73 831.3,553.56 832.0,555.37 832.7,557.18 833.3,558.96 834.0,560.72 834.6,562.43 835.3,564.11 835.9,565.72 836.6,567.28 837.2,568.76 837.9,570.17 838.6,571.49 839.2,572.72 839.9,573.85 840.5,574.88 841.2,575.81 841.8,576.63 842.5,577.33 843.1,577.92 843.8,578.40 844.5,578.76" fill="none" stroke="#000" stroke-width="1.05"/><polyline points="567.5,578.99 568.1,578.83 568.8,578.61 569.4,578.33 570.1,577.98 570.7,577.57 571.4,577.09 572.1,576.53 572.7,575.89 573.4,575.18 574.0,574.40 574.7,573.53 575.3,572.59 576.0,571.58 576.6,570.49 577.3,569.33 578.0,568.10 578.6,566.80 579.3,565.44 579.9,564.02 580.6,562.54 581.2,561.02 581.9,559.45 582.5,557.84 583.2,556.19 583.9,554.52 584.5,552.82 585.2,551.11 585.8,549.38 586.5,547.64 587.1,545.91 587.8,544.18 588.4,542.46 589.1,540.76 589.8,539.08 590.4,537.42 591.1,535.80 591.7,534.21 592.4,532.66 593.0,531.15 593.7,529.68 594.3,528.27 595.0,526.90 595.7,525.59 596.3,524.33 597.0,523.12 597.6,521.97 598.3,520.88 598.9,519.84 599.6,518.86 600.2,517.94 600.9,517.07 601.6,516.25 602.2,515.49 602.9,514.78 603.5,514.12 604.2,513.50 604.8,512.93 605.5,512.40 606.1,511.92 606.8,511.47 607.5,511.07 608.1,510.69 608.8,510.35 609.4,510.04 610.1,509.76 610.7,509.51 611.4,509.28 612.0,509.07 612.7,508.88 613.4,508.72 614.0,508.57 614.7,508.43 615.3,508.31 616.0,508.21 616.6,508.11 617.3,508.03 617.9,507.95 618.6,507.89 619.3,507.83 619.9,507.78 620.6,507.73 621.2,507.69 621.9,507.66 622.5,507.63 623.2,507.60 623.8,507.58 624.5,507.56 625.2,507.55 625.8,507.53 626.5,507.52 627.1,507.51 627.8,507.50 628.4,507.50 629.1,507.49 629.7,507.49 630.4,507.49 631.1,507.49 631.7,507.49 632.4,507.49 633.0,507.49 633.7,507.49 634.3,507.50 635.0,507.50 635.6,507.50 636.3,507.51 637.0,507.52 637.6,507.52 638.3,507.53 638.9,507.54 639.6,507.55 640.2,507.56 640.9,507.57 641.5,507.58 642.2,507.59 642.9,507.60 643.5,507.61 644.2,507.63 644.8,507.64 645.5,507.65 646.1,507.66 646.8,507.68 647.4,507.69 648.1,507.71 648.8,507.72 649.4,507.74 650.1,507.75 650.7,507.77 651.4,507.79 652.0,507.80 652.7,507.82 653.3,507.84 654.0,507.85 654.7,507.87 655.3,507.89 656.0,507.91 656.6,507.93 657.3,507.95 657.9,507.97 658.6,507.98 659.2,508.00 659.9,508.02 660.6,508.04 661.2,508.06 661.9,508.09 662.5,508.11 663.2,508.13 663.8,508.15 664.5,508.17 665.1,508.19 665.8,508.21 666.5,508.23 667.1,508.26 667.8,508.28 668.4,508.30 669.1,508.32 669.7,508.35 670.4,508.37 671.0,508.39 671.7,508.42 672.4,508.44 673.0,508.46 673.7,508.49 674.3,508.51 675.0,508.53 675.6,508.56 676.3,508.58 676.9,508.60 677.6,508.63 678.3,508.65 678.9,508.68 679.6,508.70 680.2,508.73 680.9,508.75 681.5,508.78 682.2,508.80 682.8,508.83 683.5,508.85 684.2,508.88 684.8,508.90 685.5,508.93 686.1,508.95 686.8,508.98 687.4,509.01 688.1,509.03 688.7,509.06 689.4,509.08 690.1,509.11 690.7,509.13 691.4,509.16 692.0,509.19 692.7,509.21 693.3,509.24 694.0,509.27 694.6,509.29 695.3,509.32 696.0,509.35 696.6,509.37 697.3,509.40 697.9,509.43 698.6,509.45 699.2,509.48 699.9,509.51 700.5,509.53 701.2,509.56 701.9,509.59 702.5,509.62 703.2,509.64 703.8,509.67 704.5,509.70 705.1,509.73 705.8,509.75 706.5,509.78 707.1,509.81 707.8,509.84 708.4,509.86 709.1,509.89 709.7,509.92 710.4,509.95 711.0,509.97 711.7,510.00 712.4,510.03 713.0,510.06 713.7,510.09 714.3,510.11 715.0,510.14 715.6,510.17 716.3,510.20 716.9,510.23 717.6,510.26 718.3,510.28 718.9,510.31 719.6,510.34 720.2,510.37 720.9,510.40 721.5,510.43 722.2,510.46 722.8,510.48 723.5,510.51 724.2,510.54 724.8,510.57 725.5,510.60 726.1,510.63 726.8,510.66 727.4,510.69 728.1,510.72 728.7,510.75 729.4,510.78 730.1,510.81 730.7,510.83 731.4,510.86 732.0,510.89 732.7,510.92 733.3,510.95 734.0,510.98 734.6,511.01 735.3,511.04 736.0,511.07 736.6,511.10 737.3,511.13 737.9,511.16 738.6,511.19 739.2,511.22 739.9,511.25 740.5,511.29 741.2,511.32 741.9,511.35 742.5,511.38 743.2,511.41 743.8,511.44 744.5,511.47 745.1,511.50 745.8,511.53 746.4,511.56 747.1,511.60 747.8,511.63 748.4,511.66 749.1,511.69 749.7,511.72 750.4,511.75 751.0,511.79 751.7,511.82 752.3,511.85 753.0,511.88 753.7,511.92 754.3,511.95 755.0,511.98 755.6,512.02 756.3,512.05 756.9,512.08 757.6,512.12 758.2,512.15 758.9,512.18 759.6,512.22 760.2,512.25 760.9,512.29 761.5,512.32 762.2,512.35 762.8,512.39 763.5,512.42 764.1,512.46 764.8,512.49 765.5,512.53 766.1,512.57 766.8,512.60 767.4,512.64 768.1,512.67 768.7,512.71 769.4,512.75 770.0,512.79 770.7,512.82 771.4,512.86 772.0,512.90 772.7,512.94 773.3,512.98 774.0,513.02 774.6,513.06 775.3,513.10 775.9,513.14 776.6,513.18 777.3,513.22 777.9,513.26 778.6,513.30 779.2,513.35 779.9,513.39 780.5,513.44 781.2,513.48 781.8,513.53 782.5,513.58 783.2,513.63 783.8,513.68 784.5,513.73 785.1,513.79 785.8,513.85 786.4,513.91 787.1,513.97 787.7,514.04 788.4,514.11 789.1,514.19 789.7,514.27 790.4,514.36 791.0,514.46 791.7,514.56 792.3,514.67 793.0,514.79 793.6,514.92 794.3,515.07 795.0,515.23 795.6,515.40 796.3,515.59 796.9,515.80 797.6,516.03 798.2,516.28 798.9,516.55 799.5,516.85 800.2,517.18 800.9,517.55 801.5,517.94 802.2,518.37 802.8,518.84 803.5,519.35 804.1,519.90 804.8,520.50 805.4,521.14 806.1,521.84 806.8,522.59 807.4,523.40 808.1,524.26 808.7,525.18 809.4,526.16 810.0,527.20 810.7,528.30 811.3,529.46 812.0,530.68 812.7,531.97 813.3,533.32 814.0,534.72 814.6,536.18 815.3,537.69 815.9,539.26 816.6,540.87 817.2,542.53 817.9,544.22 818.6,545.95 819.2,547.70 819.9,549.48 820.5,551.26 821.2,553.06 821.8,554.85 822.5,556.64 823.1,558.40 823.8,560.15 824.5,561.86 825.1,563.53 825.8,565.14 826.4,566.71 827.1,568.20 827.7,569.63 828.4,570.97 829.0,572.23 829.7,573.39 830.4,574.46 831.0,575.42 831.7,576.28 832.3,577.03 833.0,577.67 833.6,578.19 834.3,578.60" fill="none" stroke="#000" stroke-width="1.05"/><polyline points="567.5,578.99 568.1,578.83 568.8,578.62 569.4,578.34 570.1,578.00 570.7,577.60 571.4,577.12 572.1,576.57 572.7,575.95 573.4,575.25 574.0,574.48 574.7,573.63 575.3,572.71 576.0,571.71 576.6,570.64 577.3,569.50 578.0,568.29 578.6,567.01 579.3,565.68 579.9,564.28 580.6,562.83 581.2,561.33 581.9,559.79 582.5,558.21 583.2,556.60 583.9,554.95 584.5,553.28 585.2,551.60 585.8,549.90 586.5,548.20 587.1,546.50 587.8,544.80 588.4,543.11 589.1,541.44 589.8,539.79 590.4,538.16 591.1,536.57 591.7,535.01 592.4,533.49 593.0,532.01 593.7,530.57 594.3,529.18 595.0,527.84 595.7,526.55 596.3,525.32 597.0,524.13 597.6,523.01 598.3,521.94 598.9,520.92 599.6,519.96 600.2,519.05 600.9,518.20 601.6,517.40 602.2,516.65 602.9,515.96 603.5,515.31 604.2,514.71 604.8,514.15 605.5,513.63 606.1,513.16 606.8,512.73 607.5,512.33 608.1,511.96 608.8,511.63 609.4,511.33 610.1,511.05 610.7,510.81 611.4,510.58 612.0,510.38 612.7,510.20 613.4,510.04 614.0,509.89 614.7,509.76 615.3,509.65 616.0,509.55 616.6,509.46 617.3,509.38 617.9,509.30 618.6,509.24 619.3,509.19 619.9,509.14 620.6,509.10 621.2,509.06 621.9,509.03 622.5,509.00 623.2,508.98 623.8,508.96 624.5,508.94 625.2,508.93 625.8,508.92 626.5,508.91 627.1,508.90 627.8,508.90 628.4,508.89 629.1,508.89 629.7,508.89 630.4,508.89 631.1,508.89 631.7,508.89 632.4,508.90 633.0,508.90 633.7,508.91 634.3,508.91 635.0,508.92 635.6,508.92 636.3,508.93 637.0,508.94 637.6,508.95 638.3,508.96 638.9,508.97 639.6,508.98 640.2,508.99 640.9,509.00 641.5,509.02 642.2,509.03 642.9,509.04 643.5,509.06 644.2,509.07 644.8,509.09 645.5,509.10 646.1,509.12 646.8,509.13 647.4,509.15 648.1,509.17 648.8,509.18 649.4,509.20 650.1,509.22 650.7,509.23 651.4,509.25 652.0,509.27 652.7,509.29 653.3,509.31 654.0,509.33 654.7,509.35 655.3,509.37 656.0,509.39 656.6,509.41 657.3,509.43 657.9,509.45 658.6,509.47 659.2,509.49 659.9,509.52 660.6,509.54 661.2,509.56 661.9,509.58 662.5,509.60 663.2,509.63 663.8,509.65 664.5,509.67 665.1,509.70 665.8,509.72 666.5,509.74 667.1,509.77 667.8,509.79 668.4,509.81 669.1,509.84 669.7,509.86 670.4,509.89 671.0,509.91 671.7,509.94 672.4,509.96 673.0,509.99 673.7,510.01 674.3,510.04 675.0,510.06 675.6,510.09 676.3,510.11 676.9,510.14 677.6,510.17 678.3,510.19 678.9,510.22 679.6,510.24 680.2,510.27 680.9,510.30 681.5,510.32 682.2,510.35 682.8,510.38 683.5,510.40 684.2,510.43 684.8,510.46 685.5,510.48 686.1,510.51 686.8,510.54 687.4,510.57 688.1,510.59 688.7,510.62 689.4,510.65 690.1,510.67 690.7,510.70 691.4,510.73 692.0,510.76 692.7,510.79 693.3,510.81 694.0,510.84 694.6,510.87 695.3,510.90 696.0,510.93 696.6,510.95 697.3,510.98 697.9,511.01 698.6,511.04 699.2,511.07 699.9,511.09 700.5,511.12 701.2,511.15 701.9,511.18 702.5,511.21 703.2,511.24 703.8,511.27 704.5,511.29 705.1,511.32 705.8,511.35 706.5,511.38 707.1,511.41 707.8,511.44 708.4,511.47 709.1,511.50 709.7,511.52 710.4,511.55 711.0,511.58 711.7,511.61 712.4,511.64 713.0,511.67 713.7,511.70 714.3,511.73 715.0,511.76 715.6,511.79 716.3,511.81 716.9,511.84 717.6,511.87 718.3,511.90 718.9,511.93 719.6,511.96 720.2,511.99 720.9,512.02 721.5,512.05 722.2,512.08 722.8,512.11 723.5,512.14 724.2,512.17 724.8,512.20 725.5,512.23 726.1,512.26 726.8,512.29 727.4,512.32 728.1,512.35 728.7,512.38 729.4,512.41 730.1,512.44 730.7,512.47 731.4,512.49 732.0,512.52 732.7,512.55 733.3,512.58 734.0,512.61 734.6,512.64 735.3,512.67 736.0,512.70 736.6,512.73 737.3,512.76 737.9,512.79 738.6,512.82 739.2,512.86 739.9,512.89 740.5,512.92 741.2,512.95 741.9,512.98 742.5,513.01 743.2,513.04 743.8,513.07 744.5,513.10 745.1,513.13 745.8,513.16 746.4,513.19 747.1,513.22 747.8,513.25 748.4,513.28 749.1,513.31 749.7,513.34 750.4,513.37 751.0,513.40 751.7,513.43 752.3,513.47 753.0,513.50 753.7,513.53 754.3,513.56 755.0,513.59 755.6,513.62 756.3,513.65 756.9,513.68 757.6,513.71 758.2,513.74 758.9,513.78 759.6,513.81 760.2,513.84 760.9,513.87 761.5,513.90 762.2,513.93 762.8,513.96 763.5,514.00 764.1,514.03 764.8,514.06 765.5,514.09 766.1,514.12 766.8,514.15 767.4,514.19 768.1,514.22 768.7,514.25 769.4,514.28 770.0,514.32 770.7,514.35 771.4,514.38 772.0,514.41 772.7,514.45 773.3,514.48 774.0,514.51 774.6,514.54 775.3,514.58 775.9,514.61 776.6,514.64 777.3,514.68 777.9,514.71 778.6,514.74 779.2,514.78 779.9,514.81 780.5,514.84 781.2,514.88 781.8,514.91 782.5,514.94 783.2,514.98 783.8,515.01 784.5,515.05 785.1,515.08 785.8,515.12 786.4,515.15 787.1,515.19 787.7,515.22 788.4,515.26 789.1,515.29 789.7,515.33 790.4,515.36 791.0,515.40 791.7,515.43 792.3,515.47 793.0,515.51 793.6,515.54 794.3,515.58 795.0,515.62 795.6,515.65 796.3,515.69 796.9,515.73 797.6,515.76 798.2,515.80 798.9,515.84 799.5,515.88 800.2,515.92 800.9,515.96 801.5,515.99 802.2,516.03 802.8,516.07 803.5,516.11 804.1,516.15 804.8,516.19 805.4,516.24 806.1,516.28 806.8,516.32 807.4,516.36 808.1,516.40 808.7,516.45 809.4,516.49 810.0,516.54 810.7,516.58 811.3,516.63 812.0,516.68 812.7,516.73 813.3,516.78 814.0,516.83 814.6,516.88 815.3,516.94 815.9,517.00 816.6,517.06 817.2,517.12 817.9,517.19 818.6,517.26 819.2,517.33 819.9,517.41 820.5,517.50 821.2,517.59 821.8,517.69 822.5,517.80 823.1,517.91 823.8,518.04 824.5,518.18 825.1,518.33 825.8,518.49 826.4,518.67 827.1,518.87 827.7,519.08 828.4,519.32 829.0,519.58 829.7,519.86 830.4,520.17 831.0,520.51 831.7,520.88 832.3,521.28 833.0,521.72 833.6,522.19 834.3,522.71 834.9,523.27 835.6,523.88 836.3,524.53 836.9,525.23 837.6,525.99 838.2,526.79 838.9,527.66 839.5,528.57 840.2,529.55 840.8,530.58 841.5,531.68 842.2,532.83 842.8,534.04 843.5,535.30 844.1,536.62 844.8,538.00 845.4,539.43 846.1,540.90 846.7,542.43 847.4,543.99 848.1,545.59 848.7,547.22 849.4,548.88 850.0,550.57 850.7,552.26 851.3,553.96 852.0,555.67 852.6,557.37 853.3,559.05 854.0,560.71 854.6,562.34 855.3,563.94 855.9,565.49 856.6,566.98 857.2,568.42 857.9,569.79 858.5,571.08 859.2,572.30 859.9,573.42 860.5,574.46 861.2,575.40 861.8,576.24 862.5,576.97 863.1,577.61 863.8,578.13 864.4,578.55" fill="none" stroke="#000" stroke-width="1.05"/><path d="M516.5 456V593.2H889.5" fill="none" stroke="#000" stroke-width="1.3"/></svg>
<div class="t" style="left:312px;width:200px;text-align:right;top:248.49px;font-size:13px;line-height:13px;color:#262626">1</div>
<div class="t" style="left:312px;width:200px;text-align:right;top:302.99px;font-size:13px;line-height:13px;color:#262626">0</div>
<div class="t" style="left:312px;width:200px;text-align:right;top:357.49px;font-size:13px;line-height:13px;color:#262626">-1</div>
<div class="t" style="left:420px;width:200px;text-align:center;top:379.99px;font-size:13px;line-height:13px;color:#262626;">-0.01</div>
<div class="t" style="left:603.5px;width:200px;text-align:center;top:379.99px;font-size:13px;line-height:13px;color:#262626;">0</div>
<div class="t" style="left:784px;width:200px;text-align:center;top:379.99px;font-size:13px;line-height:13px;color:#262626;">0.01</div>
<div class="t" style="left:600.5px;width:200px;text-align:center;top:402.79px;font-size:13px;line-height:13px;color:#262626;letter-spacing:0.106px;text-indent:0.106px;">inp-inn [V]</div>
<svg style="position:absolute;left:0;top:0" width="944" height="807"><text x="0" y="0" transform="translate(475.68,310.00) rotate(-90)" text-anchor="middle" font-family="Liberation Sans" font-size="13" fill="#000" letter-spacing="0.131">out [V]</text></svg>
<div class="t" style="left:312px;width:200px;text-align:right;top:488.49px;font-size:13px;line-height:13px;color:#262626">2000</div>
<div class="t" style="left:312px;width:200px;text-align:right;top:530.49px;font-size:13px;line-height:13px;color:#262626">1000</div>
<div class="t" style="left:312px;width:200px;text-align:right;top:572.99px;font-size:13px;line-height:13px;color:#262626">0</div>
<div class="t" style="left:439.6px;width:200px;text-align:center;top:595.99px;font-size:13px;line-height:13px;color:#262626;">-1</div>
<div class="t" style="left:472.38px;width:200px;text-align:center;top:595.99px;font-size:13px;line-height:13px;color:#262626;">-0.8</div>
<div class="t" style="left:505.15999999999997px;width:200px;text-align:center;top:595.99px;font-size:13px;line-height:13px;color:#262626;">-0.6</div>
<div class="t" style="left:537.94px;width:200px;text-align:center;top:595.99px;font-size:13px;line-height:13px;color:#262626;">-0.4</div>
<div class="t" style="left:570.72px;width:200px;text-align:center;top:595.99px;font-size:13px;line-height:13px;color:#262626;">-0.2</div>
<div class="t" style="left:603.5px;width:200px;text-align:center;top:595.99px;font-size:13px;line-height:13px;color:#262626;">0</div>
<div class="t" style="left:636.28px;width:200px;text-align:center;top:595.99px;font-size:13px;line-height:13px;color:#262626;">0.2</div>
<div class="t" style="left:669.06px;width:200px;text-align:center;top:595.99px;font-size:13px;line-height:13px;color:#262626;">0.4</div>
<div class="t" style="left:701.84px;width:200px;text-align:center;top:595.99px;font-size:13px;line-height:13px;color:#262626;">0.6</div>
<div class="t" style="left:734.62px;width:200px;text-align:center;top:595.99px;font-size:13px;line-height:13px;color:#262626;">0.8</div>
<div class="t" style="left:767.4px;width:200px;text-align:center;top:595.99px;font-size:13px;line-height:13px;color:#262626;">1</div>
<div class="t" style="left:600px;width:200px;text-align:center;top:618.99px;font-size:13px;line-height:13px;color:#262626;letter-spacing:0.146px;text-indent:0.146px;">out [V]</div>
<svg style="position:absolute;left:0;top:0" width="944" height="807"><text x="0" y="0" transform="translate(475.18,526.00) rotate(-90)" text-anchor="middle" font-family="Liberation Sans" font-size="13" fill="#000" letter-spacing="0.171">Differential gain</text></svg>
</body></html>
